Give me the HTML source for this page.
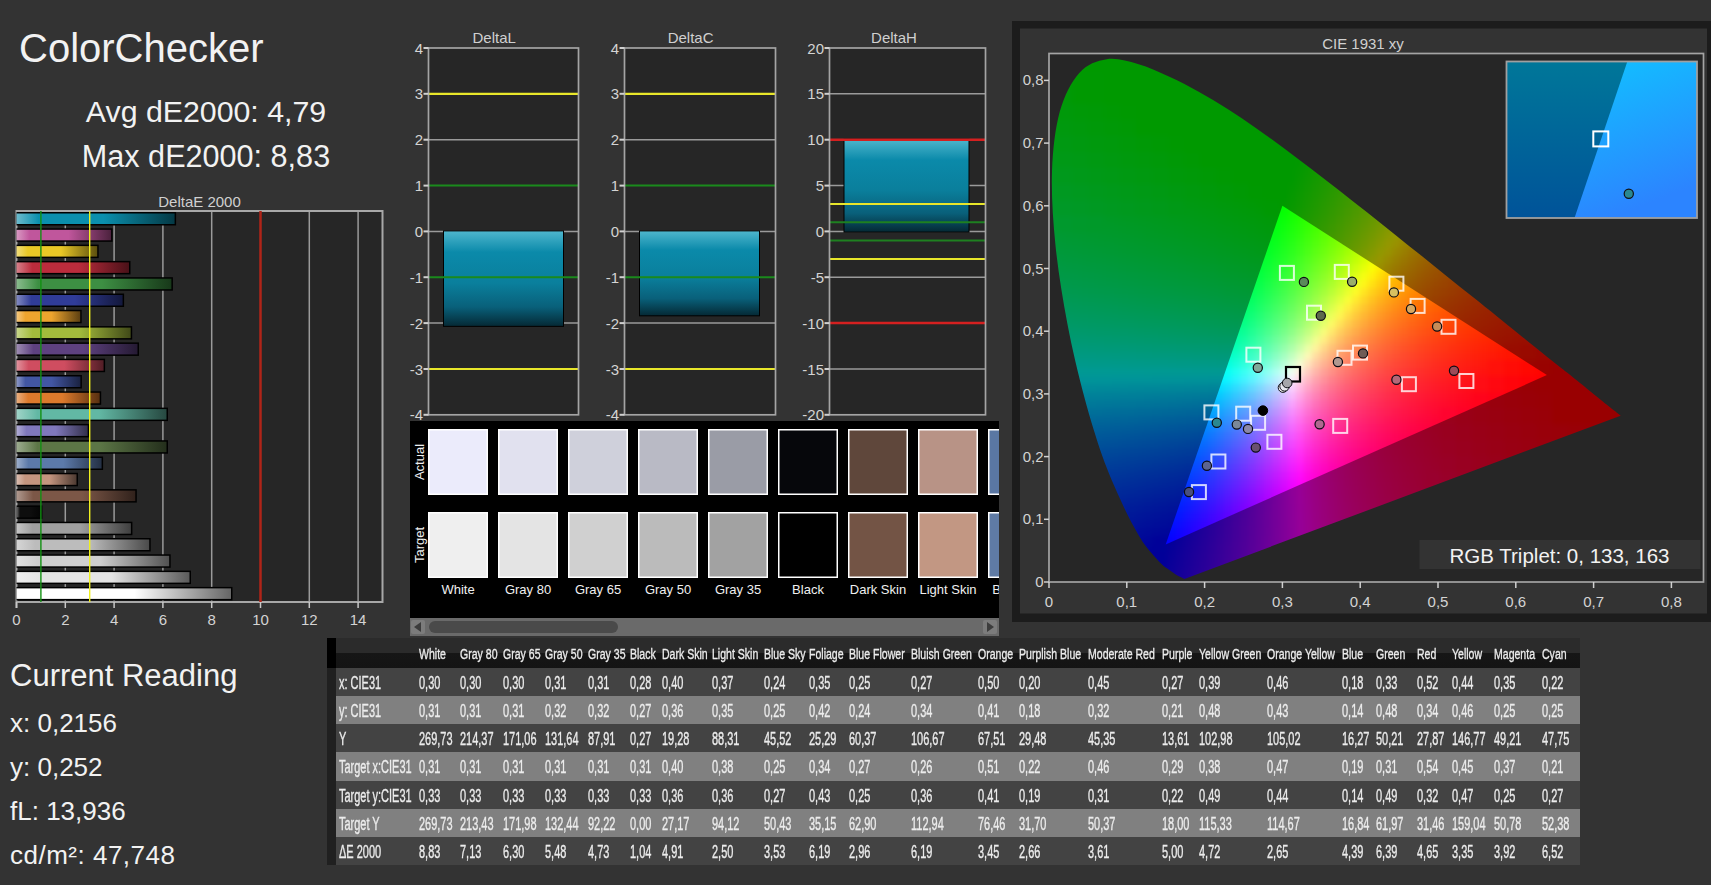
<!DOCTYPE html>
<html><head><meta charset="utf-8"><style>
html,body{margin:0;padding:0;}
body{width:1711px;height:885px;background:#333;overflow:hidden;position:relative;font-family:"Liberation Sans",sans-serif;}
svg text{font-family:"Liberation Sans",sans-serif;}
.th,.td{position:absolute;white-space:nowrap;color:#ececec;transform-origin:0 0;}
.th{top:643.5px;-webkit-text-stroke:0.35px #ececec;font-size:15.5px;line-height:20px;transform:scaleX(.68);}
.td{-webkit-text-stroke:0.35px #ececec;font-size:18px;line-height:22px;transform:scaleX(.61);}
</style></head><body>
<svg width="1711" height="885" style="position:absolute;left:0;top:0">
<defs><linearGradient id="bg0" x1="0" x2="1" y1="0" y2="0"><stop offset="0" stop-color="#6cbbcd"/><stop offset="0.14" stop-color="#0b8fad"/><stop offset="0.55" stop-color="#0b8fad"/><stop offset="1" stop-color="#043945"/></linearGradient><linearGradient id="bg1" x1="0" x2="1" y1="0" y2="0"><stop offset="0" stop-color="#d999c3"/><stop offset="0.14" stop-color="#c0569c"/><stop offset="0.55" stop-color="#c0569c"/><stop offset="1" stop-color="#4c223e"/></linearGradient><linearGradient id="bg2" x1="0" x2="1" y1="0" y2="0"><stop offset="0" stop-color="#f2de7c"/><stop offset="0.14" stop-color="#eac826"/><stop offset="0.55" stop-color="#eac826"/><stop offset="1" stop-color="#5d500f"/></linearGradient><linearGradient id="bg3" x1="0" x2="1" y1="0" y2="0"><stop offset="0" stop-color="#d6808a"/><stop offset="0.14" stop-color="#bb2c3c"/><stop offset="0.55" stop-color="#bb2c3c"/><stop offset="1" stop-color="#4a1118"/></linearGradient><linearGradient id="bg4" x1="0" x2="1" y1="0" y2="0"><stop offset="0" stop-color="#8abb8e"/><stop offset="0.14" stop-color="#3d8f43"/><stop offset="0.55" stop-color="#3d8f43"/><stop offset="1" stop-color="#18391a"/></linearGradient><linearGradient id="bg5" x1="0" x2="1" y1="0" y2="0"><stop offset="0" stop-color="#828ac1"/><stop offset="0.14" stop-color="#303c98"/><stop offset="0.55" stop-color="#303c98"/><stop offset="1" stop-color="#13183c"/></linearGradient><linearGradient id="bg6" x1="0" x2="1" y1="0" y2="0"><stop offset="0" stop-color="#f4c881"/><stop offset="0.14" stop-color="#eda42e"/><stop offset="0.55" stop-color="#eda42e"/><stop offset="1" stop-color="#5e4112"/></linearGradient><linearGradient id="bg7" x1="0" x2="1" y1="0" y2="0"><stop offset="0" stop-color="#c7d68a"/><stop offset="0.14" stop-color="#a3bb3c"/><stop offset="0.55" stop-color="#a3bb3c"/><stop offset="1" stop-color="#414a18"/></linearGradient><linearGradient id="bg8" x1="0" x2="1" y1="0" y2="0"><stop offset="0" stop-color="#9e8db2"/><stop offset="0.14" stop-color="#5e4180"/><stop offset="0.55" stop-color="#5e4180"/><stop offset="1" stop-color="#251a33"/></linearGradient><linearGradient id="bg9" x1="0" x2="1" y1="0" y2="0"><stop offset="0" stop-color="#e2949f"/><stop offset="0.14" stop-color="#cf4d60"/><stop offset="0.55" stop-color="#cf4d60"/><stop offset="1" stop-color="#521e26"/></linearGradient><linearGradient id="bg10" x1="0" x2="1" y1="0" y2="0"><stop offset="0" stop-color="#8d99c7"/><stop offset="0.14" stop-color="#4256a3"/><stop offset="0.55" stop-color="#4256a3"/><stop offset="1" stop-color="#1a2241"/></linearGradient><linearGradient id="bg11" x1="0" x2="1" y1="0" y2="0"><stop offset="0" stop-color="#eaaf80"/><stop offset="0.14" stop-color="#dd7a2c"/><stop offset="0.55" stop-color="#dd7a2c"/><stop offset="1" stop-color="#583011"/></linearGradient><linearGradient id="bg12" x1="0" x2="1" y1="0" y2="0"><stop offset="0" stop-color="#a0d4c8"/><stop offset="0.14" stop-color="#62b8a4"/><stop offset="0.55" stop-color="#62b8a4"/><stop offset="1" stop-color="#274941"/></linearGradient><linearGradient id="bg13" x1="0" x2="1" y1="0" y2="0"><stop offset="0" stop-color="#b2aed6"/><stop offset="0.14" stop-color="#8078bc"/><stop offset="0.55" stop-color="#8078bc"/><stop offset="1" stop-color="#33304b"/></linearGradient><linearGradient id="bg14" x1="0" x2="1" y1="0" y2="0"><stop offset="0" stop-color="#9dac90"/><stop offset="0.14" stop-color="#5c7646"/><stop offset="0.55" stop-color="#5c7646"/><stop offset="1" stop-color="#242f1c"/></linearGradient><linearGradient id="bg15" x1="0" x2="1" y1="0" y2="0"><stop offset="0" stop-color="#9dafcc"/><stop offset="0.14" stop-color="#5c7aaa"/><stop offset="0.55" stop-color="#5c7aaa"/><stop offset="1" stop-color="#243044"/></linearGradient><linearGradient id="bg16" x1="0" x2="1" y1="0" y2="0"><stop offset="0" stop-color="#dbbfb2"/><stop offset="0.14" stop-color="#c4957f"/><stop offset="0.55" stop-color="#c4957f"/><stop offset="1" stop-color="#4e3b32"/></linearGradient><linearGradient id="bg17" x1="0" x2="1" y1="0" y2="0"><stop offset="0" stop-color="#b09a90"/><stop offset="0.14" stop-color="#7c5747"/><stop offset="0.55" stop-color="#7c5747"/><stop offset="1" stop-color="#31221c"/></linearGradient><linearGradient id="bg18" x1="0" x2="1" y1="0" y2="0"><stop offset="0" stop-color="#6e6e6e"/><stop offset="0.14" stop-color="#0e0e0e"/><stop offset="0.55" stop-color="#0e0e0e"/><stop offset="1" stop-color="#050505"/></linearGradient><linearGradient id="bg19" x1="0" x2="1" y1="0" y2="0"><stop offset="0" stop-color="#c6c6c6"/><stop offset="0.14" stop-color="#a0a0a0"/><stop offset="0.55" stop-color="#a0a0a0"/><stop offset="1" stop-color="#404040"/></linearGradient><linearGradient id="bg20" x1="0" x2="1" y1="0" y2="0"><stop offset="0" stop-color="#d6d6d6"/><stop offset="0.14" stop-color="#bcbcbc"/><stop offset="0.55" stop-color="#bcbcbc"/><stop offset="1" stop-color="#4b4b4b"/></linearGradient><linearGradient id="bg21" x1="0" x2="1" y1="0" y2="0"><stop offset="0" stop-color="#e2e2e2"/><stop offset="0.14" stop-color="#cfcfcf"/><stop offset="0.55" stop-color="#cfcfcf"/><stop offset="1" stop-color="#525252"/></linearGradient><linearGradient id="bg22" x1="0" x2="1" y1="0" y2="0"><stop offset="0" stop-color="#eeeeee"/><stop offset="0.14" stop-color="#e4e4e4"/><stop offset="0.55" stop-color="#e4e4e4"/><stop offset="1" stop-color="#5b5b5b"/></linearGradient><linearGradient id="bg23" x1="0" x2="1" y1="0" y2="0"><stop offset="0" stop-color="#ffffff"/><stop offset="0.14" stop-color="#ffffff"/><stop offset="0.55" stop-color="#ffffff"/><stop offset="1" stop-color="#666666"/></linearGradient><linearGradient id="cyanbar" x1="0" x2="0" y1="0" y2="1"><stop offset="0" stop-color="#4db5cc"/><stop offset="0.22" stop-color="#0b8aaa"/><stop offset="0.55" stop-color="#0a7f9c"/><stop offset="0.8" stop-color="#09607a"/><stop offset="1" stop-color="#052a36"/></linearGradient><clipPath id="hs"><path d="M1184.4 578.9C1183.2 578.2 1179.2 576.5 1176.9 575.2C1174.6 573.8 1173.5 572.9 1170.8 570.9C1168.2 568.9 1165.2 567.6 1161.0 563.4C1156.8 559.2 1150.0 551.7 1145.5 545.8C1141.1 539.8 1138.5 535.4 1134.3 527.6C1130.0 519.7 1125.3 510.7 1120.0 498.8C1114.7 486.9 1108.4 473.1 1102.4 456.2C1096.5 439.2 1090.2 419.2 1084.3 397.0C1078.5 374.9 1072.1 348.7 1067.3 323.2C1062.5 297.8 1057.9 269.7 1055.4 244.4C1052.8 219.1 1051.3 193.6 1052.0 171.4C1052.8 149.3 1055.3 128.1 1059.8 111.6C1064.4 95.2 1071.4 81.6 1079.3 72.9C1087.1 64.1 1097.0 60.7 1106.8 59.2C1116.6 57.7 1127.4 61.1 1137.8 64.0C1148.3 66.9 1159.2 72.0 1169.4 76.7C1179.6 81.4 1189.4 86.5 1199.1 91.9C1208.8 97.3 1218.2 103.1 1227.6 109.1C1237.1 115.0 1246.5 121.4 1255.8 127.9C1265.1 134.3 1274.4 141.1 1283.6 147.9C1292.9 154.8 1302.1 161.8 1311.4 168.9C1320.7 176.0 1330.0 183.2 1339.3 190.4C1348.5 197.7 1357.8 205.0 1367.0 212.3C1376.2 219.6 1385.4 227.0 1394.5 234.2C1403.6 241.5 1412.6 248.7 1421.5 255.8C1430.4 263.0 1439.2 270.0 1447.7 276.9C1456.3 283.8 1464.7 290.6 1472.9 297.1C1481.0 303.6 1489.0 310.0 1496.5 316.0C1504.0 322.1 1511.3 328.0 1518.1 333.4C1524.8 338.8 1530.9 343.7 1536.8 348.4C1542.7 353.2 1548.3 357.6 1553.3 361.7C1558.3 365.7 1561.4 368.1 1567.0 372.6C1572.6 377.1 1581.5 384.3 1587.0 388.7C1592.4 393.1 1596.2 396.1 1599.7 398.9C1603.3 401.8 1606.0 404.0 1608.4 405.9C1610.7 407.8 1612.4 409.1 1613.8 410.2C1615.3 411.3 1616.0 411.9 1616.9 412.7C1617.9 413.5 1619.0 414.4 1619.6 414.8C1620.2 415.3 1620.4 415.5 1620.6 415.7Z"/></clipPath><clipPath id="tri"><polygon points="1546.9,375.1 1282.4,205.8 1165.7,544.4"/></clipPath><filter id="fb" x="1000" y="0" width="700" height="650" filterUnits="userSpaceOnUse" color-interpolation-filters="sRGB"><feGaussianBlur stdDeviation="2.5"/></filter><filter id="fd" x="1000" y="0" width="700" height="650" filterUnits="userSpaceOnUse" color-interpolation-filters="sRGB"><feGaussianBlur stdDeviation="2.5"/><feComponentTransfer><feFuncR type="linear" slope="0.6"/><feFuncG type="linear" slope="0.6"/><feFuncB type="linear" slope="0.6"/></feComponentTransfer></filter><g id="grid" shape-rendering="crispEdges"><path d="M1040 40h32v32h-32z" fill="#00ff01"/><path d="M1040 88h16v16h-16z" fill="#00ff0e"/><path d="M1056 72h16v16h-16z" fill="#00ff05"/><path d="M1056 88h16v16h-16z" fill="#00ff0b"/><path d="M1072 40h32v32h-32z" fill="#00ff00"/><path d="M1072 72h32v32h-32z" fill="#00ff03"/><path d="M1104 40h64v64h-64z" fill="#00ff00"/><path d="M1168 40h64v64h-64z" fill="#00ff00"/><path d="M1232 40h64v64h-64z" fill="#00ff00"/><path d="M1040 104h16v16h-16z" fill="#00ff14"/><path d="M1040 120h16v16h-16z" fill="#00ff1b"/><path d="M1056 104h16v16h-16z" fill="#00ff11"/><path d="M1056 120h16v16h-16z" fill="#00ff18"/><path d="M1040 136h16v16h-16z" fill="#00ff22"/><path d="M1040 152h16v16h-16z" fill="#00ff2a"/><path d="M1056 136h16v16h-16z" fill="#00ff1f"/><path d="M1056 152h16v16h-16z" fill="#00ff26"/><path d="M1072 104h16v16h-16z" fill="#00ff0d"/><path d="M1072 120h16v16h-16z" fill="#00ff14"/><path d="M1088 104h16v16h-16z" fill="#00ff0a"/><path d="M1088 120h16v16h-16z" fill="#00ff10"/><path d="M1072 136h16v16h-16z" fill="#00ff1b"/><path d="M1072 152h16v16h-16z" fill="#00ff23"/><path d="M1088 136h16v16h-16z" fill="#00ff17"/><path d="M1088 152h16v16h-16z" fill="#00ff1f"/><path d="M1104 104h16v16h-16z" fill="#00ff06"/><path d="M1104 120h16v16h-16z" fill="#00ff0c"/><path d="M1120 104h16v16h-16z" fill="#00ff02"/><path d="M1120 120h16v16h-16z" fill="#00ff09"/><path d="M1104 136h16v16h-16z" fill="#00ff14"/><path d="M1104 152h16v16h-16z" fill="#00ff1b"/><path d="M1120 136h16v16h-16z" fill="#00ff10"/><path d="M1120 152h16v16h-16z" fill="#00ff17"/><path d="M1136 104h32v32h-32z" fill="#00ff01"/><path d="M1136 136h16v16h-16z" fill="#00ff0b"/><path d="M1136 152h16v16h-16z" fill="#00ff13"/><path d="M1152 136h16v16h-16z" fill="#00ff07"/><path d="M1152 152h16v16h-16z" fill="#00ff0f"/><path d="M1168 104h32v32h-32z" fill="#00ff00"/><path d="M1168 136h16v16h-16z" fill="#00ff03"/><path d="M1168 152h16v16h-16z" fill="#00ff0a"/><path d="M1184 136h16v16h-16z" fill="#00ff00"/><path d="M1184 152h16v16h-16z" fill="#00ff06"/><path d="M1200 104h32v32h-32z" fill="#00ff00"/><path d="M1200 136h32v32h-32z" fill="#00ff00"/><path d="M1232 104h64v64h-64z" fill="#00ff00"/><path d="M1296 136h16v16h-16z" fill="#03ff00"/><path d="M1296 152h8v8h-8z" fill="#02ff00"/><path d="M1296 160h8v8h-8z" fill="#04ff00"/><path d="M1304 152h8v8h-8z" fill="#0bff00"/><path d="M1304 160h8v8h-8z" fill="#0fff00"/><path d="M1312 152h8v8h-8z" fill="#15ff00"/><path d="M1312 160h8v8h-8z" fill="#1aff00"/><path d="M1320 160h8v8h-8z" fill="#25ff00"/><path d="M1040 168h16v16h-16z" fill="#00ff32"/><path d="M1040 184h16v16h-16z" fill="#00ff3b"/><path d="M1056 168h16v16h-16z" fill="#00ff2f"/><path d="M1056 184h16v16h-16z" fill="#00ff38"/><path d="M1040 200h16v16h-16z" fill="#00ff45"/><path d="M1040 216h16v16h-16z" fill="#00ff4f"/><path d="M1056 200h16v16h-16z" fill="#00ff41"/><path d="M1056 216h16v16h-16z" fill="#00ff4c"/><path d="M1072 168h16v16h-16z" fill="#00ff2b"/><path d="M1072 184h16v16h-16z" fill="#00ff34"/><path d="M1088 168h16v16h-16z" fill="#00ff27"/><path d="M1088 184h16v16h-16z" fill="#00ff30"/><path d="M1072 200h16v16h-16z" fill="#00ff3e"/><path d="M1072 216h16v16h-16z" fill="#00ff48"/><path d="M1088 200h16v16h-16z" fill="#00ff3a"/><path d="M1088 216h16v16h-16z" fill="#00ff45"/><path d="M1104 168h16v16h-16z" fill="#00ff23"/><path d="M1104 184h16v16h-16z" fill="#00ff2c"/><path d="M1120 168h16v16h-16z" fill="#00ff1f"/><path d="M1120 184h16v16h-16z" fill="#00ff28"/><path d="M1104 200h16v16h-16z" fill="#00ff36"/><path d="M1104 216h8v8h-8z" fill="#00ff3f"/><path d="M1104 224h8v8h-8z" fill="#00ff45"/><path d="M1112 216h8v8h-8z" fill="#00ff3d"/><path d="M1112 224h8v8h-8z" fill="#00ff43"/><path d="M1120 200h16v16h-16z" fill="#00ff32"/><path d="M1120 216h8v8h-8z" fill="#00ff3b"/><path d="M1120 224h8v8h-8z" fill="#00ff41"/><path d="M1128 216h8v8h-8z" fill="#00ff39"/><path d="M1128 224h8v8h-8z" fill="#00ff3f"/><path d="M1136 168h16v16h-16z" fill="#00ff1b"/><path d="M1136 184h16v16h-16z" fill="#00ff24"/><path d="M1152 168h16v16h-16z" fill="#00ff17"/><path d="M1152 184h16v16h-16z" fill="#00ff20"/><path d="M1136 200h16v16h-16z" fill="#00ff2e"/><path d="M1136 216h8v8h-8z" fill="#00ff37"/><path d="M1136 224h8v8h-8z" fill="#00ff3d"/><path d="M1144 216h8v8h-8z" fill="#00ff35"/><path d="M1144 224h8v8h-8z" fill="#00ff3b"/><path d="M1152 200h16v16h-16z" fill="#00ff2a"/><path d="M1152 216h8v8h-8z" fill="#00ff33"/><path d="M1152 224h8v8h-8z" fill="#00ff38"/><path d="M1160 216h8v8h-8z" fill="#00ff31"/><path d="M1160 224h8v8h-8z" fill="#00ff36"/><path d="M1168 168h16v16h-16z" fill="#00ff12"/><path d="M1168 184h16v16h-16z" fill="#00ff1b"/><path d="M1184 168h16v16h-16z" fill="#00ff0e"/><path d="M1184 184h16v16h-16z" fill="#00ff17"/><path d="M1168 200h16v16h-16z" fill="#00ff25"/><path d="M1168 216h8v8h-8z" fill="#00ff2e"/><path d="M1168 224h8v8h-8z" fill="#00ff34"/><path d="M1176 216h8v8h-8z" fill="#00ff2c"/><path d="M1176 224h8v8h-8z" fill="#00ff32"/><path d="M1184 200h8v8h-8z" fill="#00ff1f"/><path d="M1184 208h8v8h-8z" fill="#00ff24"/><path d="M1192 200h8v8h-8z" fill="#00ff1d"/><path d="M1192 208h8v8h-8z" fill="#00ff22"/><path d="M1184 216h8v8h-8z" fill="#00ff2a"/><path d="M1184 224h8v8h-8z" fill="#00ff2f"/><path d="M1192 216h8v8h-8z" fill="#00ff27"/><path d="M1192 224h8v8h-8z" fill="#00ff2d"/><path d="M1200 168h16v16h-16z" fill="#00ff09"/><path d="M1200 184h16v16h-16z" fill="#00ff12"/><path d="M1216 168h16v16h-16z" fill="#00ff04"/><path d="M1216 184h16v16h-16z" fill="#00ff0d"/><path d="M1200 200h8v8h-8z" fill="#00ff1a"/><path d="M1200 208h8v8h-8z" fill="#00ff1f"/><path d="M1208 200h8v8h-8z" fill="#00ff18"/><path d="M1208 208h8v8h-8z" fill="#00ff1d"/><path d="M1200 216h8v8h-8z" fill="#00ff25"/><path d="M1200 224h8v8h-8z" fill="#00ff2a"/><path d="M1208 216h8v8h-8z" fill="#00ff22"/><path d="M1208 224h8v8h-8z" fill="#00ff28"/><path d="M1216 200h8v8h-8z" fill="#00ff15"/><path d="M1216 208h8v8h-8z" fill="#00ff1a"/><path d="M1224 200h8v8h-8z" fill="#00ff13"/><path d="M1224 208h8v8h-8z" fill="#00ff18"/><path d="M1216 216h8v8h-8z" fill="#00ff20"/><path d="M1216 224h8v8h-8z" fill="#00ff25"/><path d="M1224 216h8v8h-8z" fill="#00ff1d"/><path d="M1224 224h8v8h-8z" fill="#00ff23"/><path d="M1232 168h16v16h-16z" fill="#00ff01"/><path d="M1232 184h16v16h-16z" fill="#00ff07"/><path d="M1248 168h16v16h-16z" fill="#00ff00"/><path d="M1248 184h16v16h-16z" fill="#00ff02"/><path d="M1232 200h8v8h-8z" fill="#00ff10"/><path d="M1232 208h8v8h-8z" fill="#00ff15"/><path d="M1240 200h8v8h-8z" fill="#00ff0d"/><path d="M1240 208h8v8h-8z" fill="#00ff12"/><path d="M1232 216h8v8h-8z" fill="#00ff1a"/><path d="M1232 224h8v8h-8z" fill="#00ff20"/><path d="M1240 216h8v8h-8z" fill="#00ff17"/><path d="M1240 224h8v8h-8z" fill="#00ff1d"/><path d="M1248 200h8v8h-8z" fill="#00ff0a"/><path d="M1248 208h8v8h-8z" fill="#00ff0f"/><path d="M1256 200h8v8h-8z" fill="#00ff07"/><path d="M1256 208h8v8h-8z" fill="#00ff0c"/><path d="M1248 216h8v8h-8z" fill="#00ff15"/><path d="M1248 224h8v8h-8z" fill="#00ff1a"/><path d="M1256 216h8v8h-8z" fill="#00ff12"/><path d="M1256 224h8v8h-8z" fill="#00ff17"/><path d="M1264 168h16v16h-16z" fill="#00ff00"/><path d="M1264 184h16v16h-16z" fill="#00ff00"/><path d="M1280 168h16v16h-16z" fill="#01ff00"/><path d="M1280 184h8v8h-8z" fill="#00ff00"/><path d="M1280 192h8v8h-8z" fill="#00ff00"/><path d="M1288 184h8v8h-8z" fill="#05ff00"/><path d="M1288 192h8v8h-8z" fill="#09ff00"/><path d="M1264 200h16v16h-16z" fill="#00ff05"/><path d="M1264 216h8v8h-8z" fill="#00ff0f"/><path d="M1264 224h8v8h-8z" fill="#00ff14"/><path d="M1272 216h8v8h-8z" fill="#01ff0c"/><path d="M1272 224h8v8h-8z" fill="#03ff11"/><path d="M1280 200h8v8h-8z" fill="#02ff00"/><path d="M1280 208h8v8h-8z" fill="#06ff03"/><path d="M1288 200h8v8h-8z" fill="#0dff00"/><path d="M1288 208h8v8h-8z" fill="#12ff01"/><path d="M1280 216h8v8h-8z" fill="#0aff09"/><path d="M1280 224h8v8h-8z" fill="#0fff0e"/><path d="M1288 216h8v8h-8z" fill="#17ff05"/><path d="M1288 224h8v8h-8z" fill="#1cff0b"/><path d="M1296 168h8v8h-8z" fill="#08ff00"/><path d="M1296 176h8v8h-8z" fill="#0cff00"/><path d="M1304 168h8v8h-8z" fill="#13ff00"/><path d="M1304 176h8v8h-8z" fill="#17ff00"/><path d="M1296 184h8v8h-8z" fill="#10ff00"/><path d="M1296 192h8v8h-8z" fill="#15ff00"/><path d="M1304 184h8v8h-8z" fill="#1cff00"/><path d="M1304 192h8v8h-8z" fill="#21ff00"/><path d="M1312 168h8v8h-8z" fill="#1eff00"/><path d="M1312 176h8v8h-8z" fill="#23ff00"/><path d="M1320 168h8v8h-8z" fill="#2aff00"/><path d="M1320 176h8v8h-8z" fill="#2fff00"/><path d="M1312 184h8v8h-8z" fill="#28ff00"/><path d="M1312 192h8v8h-8z" fill="#2dff00"/><path d="M1320 184h8v8h-8z" fill="#34ff00"/><path d="M1320 192h8v8h-8z" fill="#3aff00"/><path d="M1296 200h8v8h-8z" fill="#19ff00"/><path d="M1296 208h8v8h-8z" fill="#1eff00"/><path d="M1304 200h8v8h-8z" fill="#26ff00"/><path d="M1304 208h8v8h-8z" fill="#2bff00"/><path d="M1296 216h8v8h-8z" fill="#24ff02"/><path d="M1296 224h8v8h-8z" fill="#29ff07"/><path d="M1304 216h8v8h-8z" fill="#31ff00"/><path d="M1304 224h8v8h-8z" fill="#37ff04"/><path d="M1312 200h8v8h-8z" fill="#33ff00"/><path d="M1312 208h8v8h-8z" fill="#38ff00"/><path d="M1320 200h8v8h-8z" fill="#40ff00"/><path d="M1320 208h8v8h-8z" fill="#46ff00"/><path d="M1312 216h8v8h-8z" fill="#3fff00"/><path d="M1312 224h8v8h-8z" fill="#45ff01"/><path d="M1320 216h8v8h-8z" fill="#4dff00"/><path d="M1320 224h8v8h-8z" fill="#54ff00"/><path d="M1328 168h8v8h-8z" fill="#35ff00"/><path d="M1328 176h8v8h-8z" fill="#3bff00"/><path d="M1336 176h8v8h-8z" fill="#47ff00"/><path d="M1328 184h8v8h-8z" fill="#40ff00"/><path d="M1328 192h8v8h-8z" fill="#47ff00"/><path d="M1336 184h8v8h-8z" fill="#4dff00"/><path d="M1336 192h8v8h-8z" fill="#54ff00"/><path d="M1344 176h8v8h-8z" fill="#54ff00"/><path d="M1344 184h8v8h-8z" fill="#5aff00"/><path d="M1344 192h8v8h-8z" fill="#61ff00"/><path d="M1352 184h8v8h-8z" fill="#68ff00"/><path d="M1352 192h8v8h-8z" fill="#70ff00"/><path d="M1328 200h8v8h-8z" fill="#4dff00"/><path d="M1328 208h8v8h-8z" fill="#54ff00"/><path d="M1336 200h8v8h-8z" fill="#5bff00"/><path d="M1336 208h8v8h-8z" fill="#62ff00"/><path d="M1328 216h8v8h-8z" fill="#5bff00"/><path d="M1328 224h8v8h-8z" fill="#63ff00"/><path d="M1336 216h8v8h-8z" fill="#6aff00"/><path d="M1336 224h8v8h-8z" fill="#72ff00"/><path d="M1344 200h8v8h-8z" fill="#69ff00"/><path d="M1344 208h8v8h-8z" fill="#71ff00"/><path d="M1352 200h8v8h-8z" fill="#78ff00"/><path d="M1352 208h8v8h-8z" fill="#80ff00"/><path d="M1344 216h8v8h-8z" fill="#79ff00"/><path d="M1344 224h8v8h-8z" fill="#82ff00"/><path d="M1352 216h8v8h-8z" fill="#89ff00"/><path d="M1352 224h8v8h-8z" fill="#93ff00"/><path d="M1360 192h8v8h-8z" fill="#7eff00"/><path d="M1360 200h8v8h-8z" fill="#86ff00"/><path d="M1360 208h8v8h-8z" fill="#90ff00"/><path d="M1368 200h8v8h-8z" fill="#96ff00"/><path d="M1368 208h8v8h-8z" fill="#a0ff00"/><path d="M1360 216h8v8h-8z" fill="#99ff00"/><path d="M1360 224h8v8h-8z" fill="#a4ff00"/><path d="M1368 216h8v8h-8z" fill="#aaff00"/><path d="M1368 224h8v8h-8z" fill="#b5ff00"/><path d="M1376 208h8v8h-8z" fill="#b0ff00"/><path d="M1376 216h8v8h-8z" fill="#bbff00"/><path d="M1376 224h8v8h-8z" fill="#c7ff00"/><path d="M1384 216h8v8h-8z" fill="#cdff00"/><path d="M1384 224h8v8h-8z" fill="#daff00"/><path d="M1392 216h8v8h-8z" fill="#e0ff00"/><path d="M1392 224h8v8h-8z" fill="#edff00"/><path d="M1400 224h8v8h-8z" fill="#fdfb00"/><path d="M1048 232h8v8h-8z" fill="#00ff57"/><path d="M1048 240h8v8h-8z" fill="#00ff5d"/><path d="M1048 248h8v8h-8z" fill="#00ff63"/><path d="M1048 256h8v8h-8z" fill="#00ff6a"/><path d="M1056 232h8v8h-8z" fill="#00ff55"/><path d="M1056 240h8v8h-8z" fill="#00ff5b"/><path d="M1064 232h8v8h-8z" fill="#00ff53"/><path d="M1064 240h8v8h-8z" fill="#00ff59"/><path d="M1056 248h8v8h-8z" fill="#00ff61"/><path d="M1056 256h8v8h-8z" fill="#00ff68"/><path d="M1064 248h8v8h-8z" fill="#00ff60"/><path d="M1064 256h8v8h-8z" fill="#00ff66"/><path d="M1048 264h8v8h-8z" fill="#00ff70"/><path d="M1048 272h8v8h-8z" fill="#00ff78"/><path d="M1048 280h8v8h-8z" fill="#00ff7f"/><path d="M1048 288h8v8h-8z" fill="#00ff87"/><path d="M1056 264h8v8h-8z" fill="#00ff6f"/><path d="M1056 272h8v8h-8z" fill="#00ff76"/><path d="M1064 264h8v8h-8z" fill="#00ff6d"/><path d="M1064 272h8v8h-8z" fill="#00ff75"/><path d="M1056 280h8v8h-8z" fill="#00ff7e"/><path d="M1056 288h8v8h-8z" fill="#00ff86"/><path d="M1064 280h8v8h-8z" fill="#00ff7c"/><path d="M1064 288h8v8h-8z" fill="#00ff84"/><path d="M1072 232h8v8h-8z" fill="#00ff52"/><path d="M1072 240h8v8h-8z" fill="#00ff58"/><path d="M1080 232h8v8h-8z" fill="#00ff50"/><path d="M1080 240h8v8h-8z" fill="#00ff56"/><path d="M1072 248h8v8h-8z" fill="#00ff5e"/><path d="M1072 256h8v8h-8z" fill="#00ff65"/><path d="M1080 248h8v8h-8z" fill="#00ff5c"/><path d="M1080 256h8v8h-8z" fill="#00ff63"/><path d="M1088 232h8v8h-8z" fill="#00ff4e"/><path d="M1088 240h8v8h-8z" fill="#00ff54"/><path d="M1096 232h8v8h-8z" fill="#00ff4c"/><path d="M1096 240h8v8h-8z" fill="#00ff52"/><path d="M1088 248h8v8h-8z" fill="#00ff5b"/><path d="M1088 256h8v8h-8z" fill="#00ff61"/><path d="M1096 248h8v8h-8z" fill="#00ff59"/><path d="M1096 256h8v8h-8z" fill="#00ff60"/><path d="M1072 264h8v8h-8z" fill="#00ff6c"/><path d="M1072 272h8v8h-8z" fill="#00ff73"/><path d="M1080 264h8v8h-8z" fill="#00ff6a"/><path d="M1080 272h8v8h-8z" fill="#00ff71"/><path d="M1072 280h8v8h-8z" fill="#00ff7b"/><path d="M1072 288h8v8h-8z" fill="#00ff83"/><path d="M1080 280h8v8h-8z" fill="#00ff79"/><path d="M1080 288h8v8h-8z" fill="#00ff81"/><path d="M1088 264h8v8h-8z" fill="#00ff68"/><path d="M1088 272h8v8h-8z" fill="#00ff70"/><path d="M1096 264h8v8h-8z" fill="#00ff67"/><path d="M1096 272h8v8h-8z" fill="#00ff6e"/><path d="M1088 280h8v8h-8z" fill="#00ff78"/><path d="M1088 288h8v8h-8z" fill="#00ff80"/><path d="M1096 280h8v8h-8z" fill="#00ff76"/><path d="M1096 288h8v8h-8z" fill="#00ff7e"/><path d="M1104 232h8v8h-8z" fill="#00ff4a"/><path d="M1104 240h8v8h-8z" fill="#00ff51"/><path d="M1112 232h8v8h-8z" fill="#00ff49"/><path d="M1112 240h8v8h-8z" fill="#00ff4f"/><path d="M1104 248h8v8h-8z" fill="#00ff57"/><path d="M1104 256h8v8h-8z" fill="#00ff5e"/><path d="M1112 248h8v8h-8z" fill="#00ff55"/><path d="M1112 256h8v8h-8z" fill="#00ff5c"/><path d="M1120 232h8v8h-8z" fill="#00ff47"/><path d="M1120 240h8v8h-8z" fill="#00ff4d"/><path d="M1128 232h8v8h-8z" fill="#00ff45"/><path d="M1128 240h8v8h-8z" fill="#00ff4b"/><path d="M1120 248h8v8h-8z" fill="#00ff53"/><path d="M1120 256h8v8h-8z" fill="#00ff5a"/><path d="M1128 248h8v8h-8z" fill="#00ff51"/><path d="M1128 256h8v8h-8z" fill="#00ff58"/><path d="M1104 264h8v8h-8z" fill="#00ff65"/><path d="M1104 272h8v8h-8z" fill="#00ff6c"/><path d="M1112 264h8v8h-8z" fill="#00ff63"/><path d="M1112 272h8v8h-8z" fill="#00ff6b"/><path d="M1104 280h8v8h-8z" fill="#00ff74"/><path d="M1104 288h8v8h-8z" fill="#00ff7d"/><path d="M1112 280h8v8h-8z" fill="#00ff73"/><path d="M1112 288h8v8h-8z" fill="#00ff7b"/><path d="M1120 264h8v8h-8z" fill="#00ff61"/><path d="M1120 272h8v8h-8z" fill="#00ff69"/><path d="M1128 264h8v8h-8z" fill="#00ff5f"/><path d="M1128 272h8v8h-8z" fill="#00ff67"/><path d="M1120 280h8v8h-8z" fill="#00ff71"/><path d="M1120 288h8v8h-8z" fill="#00ff79"/><path d="M1128 280h8v8h-8z" fill="#00ff6f"/><path d="M1128 288h8v8h-8z" fill="#00ff78"/><path d="M1136 232h8v8h-8z" fill="#00ff43"/><path d="M1136 240h8v8h-8z" fill="#00ff49"/><path d="M1144 232h8v8h-8z" fill="#00ff40"/><path d="M1144 240h8v8h-8z" fill="#00ff47"/><path d="M1136 248h8v8h-8z" fill="#00ff4f"/><path d="M1136 256h8v8h-8z" fill="#00ff56"/><path d="M1144 248h8v8h-8z" fill="#00ff4d"/><path d="M1144 256h8v8h-8z" fill="#00ff54"/><path d="M1152 232h8v8h-8z" fill="#00ff3e"/><path d="M1152 240h8v8h-8z" fill="#00ff45"/><path d="M1160 232h8v8h-8z" fill="#00ff3c"/><path d="M1160 240h8v8h-8z" fill="#00ff42"/><path d="M1152 248h8v8h-8z" fill="#00ff4b"/><path d="M1152 256h8v8h-8z" fill="#00ff52"/><path d="M1160 248h8v8h-8z" fill="#00ff49"/><path d="M1160 256h8v8h-8z" fill="#00ff50"/><path d="M1136 264h8v8h-8z" fill="#00ff5d"/><path d="M1136 272h8v8h-8z" fill="#00ff65"/><path d="M1144 264h8v8h-8z" fill="#00ff5b"/><path d="M1144 272h8v8h-8z" fill="#00ff63"/><path d="M1136 280h8v8h-8z" fill="#00ff6d"/><path d="M1136 288h8v8h-8z" fill="#00ff76"/><path d="M1144 280h8v8h-8z" fill="#00ff6b"/><path d="M1144 288h8v8h-8z" fill="#00ff74"/><path d="M1152 264h8v8h-8z" fill="#00ff59"/><path d="M1152 272h8v8h-8z" fill="#00ff61"/><path d="M1160 264h8v8h-8z" fill="#00ff57"/><path d="M1160 272h8v8h-8z" fill="#00ff5f"/><path d="M1152 280h8v8h-8z" fill="#00ff69"/><path d="M1152 288h8v8h-8z" fill="#00ff72"/><path d="M1160 280h8v8h-8z" fill="#00ff67"/><path d="M1160 288h8v8h-8z" fill="#00ff70"/><path d="M1168 232h8v8h-8z" fill="#00ff3a"/><path d="M1168 240h8v8h-8z" fill="#00ff40"/><path d="M1176 232h8v8h-8z" fill="#00ff38"/><path d="M1176 240h8v8h-8z" fill="#00ff3e"/><path d="M1168 248h8v8h-8z" fill="#00ff47"/><path d="M1168 256h8v8h-8z" fill="#00ff4e"/><path d="M1176 248h8v8h-8z" fill="#00ff44"/><path d="M1176 256h8v8h-8z" fill="#00ff4c"/><path d="M1184 232h8v8h-8z" fill="#00ff35"/><path d="M1184 240h8v8h-8z" fill="#00ff3c"/><path d="M1192 232h8v8h-8z" fill="#00ff33"/><path d="M1192 240h8v8h-8z" fill="#00ff39"/><path d="M1184 248h8v8h-8z" fill="#00ff42"/><path d="M1184 256h8v8h-8z" fill="#00ff49"/><path d="M1192 248h8v8h-8z" fill="#00ff40"/><path d="M1192 256h8v8h-8z" fill="#00ff47"/><path d="M1168 264h8v8h-8z" fill="#00ff55"/><path d="M1168 272h8v8h-8z" fill="#00ff5d"/><path d="M1176 264h8v8h-8z" fill="#00ff53"/><path d="M1176 272h8v8h-8z" fill="#00ff5b"/><path d="M1168 280h8v8h-8z" fill="#00ff65"/><path d="M1168 288h8v8h-8z" fill="#00ff6e"/><path d="M1176 280h8v8h-8z" fill="#00ff63"/><path d="M1176 288h8v8h-8z" fill="#00ff6c"/><path d="M1184 264h8v8h-8z" fill="#00ff51"/><path d="M1184 272h8v8h-8z" fill="#00ff59"/><path d="M1192 264h8v8h-8z" fill="#00ff4e"/><path d="M1192 272h8v8h-8z" fill="#00ff56"/><path d="M1184 280h8v8h-8z" fill="#00ff61"/><path d="M1184 288h8v8h-8z" fill="#00ff6a"/><path d="M1192 280h8v8h-8z" fill="#00ff5f"/><path d="M1192 288h8v8h-8z" fill="#00ff68"/><path d="M1200 232h8v8h-8z" fill="#00ff30"/><path d="M1200 240h8v8h-8z" fill="#00ff37"/><path d="M1208 232h8v8h-8z" fill="#00ff2e"/><path d="M1208 240h8v8h-8z" fill="#00ff34"/><path d="M1200 248h8v8h-8z" fill="#00ff3d"/><path d="M1200 256h8v8h-8z" fill="#00ff44"/><path d="M1208 248h8v8h-8z" fill="#00ff3b"/><path d="M1208 256h8v8h-8z" fill="#00ff42"/><path d="M1216 232h8v8h-8z" fill="#00ff2b"/><path d="M1216 240h8v8h-8z" fill="#00ff32"/><path d="M1224 232h8v8h-8z" fill="#00ff29"/><path d="M1224 240h8v8h-8z" fill="#00ff2f"/><path d="M1216 248h8v8h-8z" fill="#00ff38"/><path d="M1216 256h8v8h-8z" fill="#00ff3f"/><path d="M1224 248h8v8h-8z" fill="#00ff36"/><path d="M1224 256h8v8h-8z" fill="#00ff3d"/><path d="M1200 264h8v8h-8z" fill="#00ff4c"/><path d="M1200 272h8v8h-8z" fill="#00ff54"/><path d="M1208 264h8v8h-8z" fill="#00ff4a"/><path d="M1208 272h8v8h-8z" fill="#00ff52"/><path d="M1200 280h8v8h-8z" fill="#00ff5c"/><path d="M1200 288h8v8h-8z" fill="#00ff66"/><path d="M1208 280h8v8h-8z" fill="#00ff5a"/><path d="M1208 288h8v8h-8z" fill="#00ff63"/><path d="M1216 264h8v8h-8z" fill="#00ff47"/><path d="M1216 272h8v8h-8z" fill="#00ff4f"/><path d="M1224 264h8v8h-8z" fill="#00ff44"/><path d="M1224 272h8v8h-8z" fill="#00ff4c"/><path d="M1216 280h8v8h-8z" fill="#00ff58"/><path d="M1216 288h8v8h-8z" fill="#00ff61"/><path d="M1224 280h8v8h-8z" fill="#00ff55"/><path d="M1224 288h8v8h-8z" fill="#00ff5e"/><path d="M1232 232h8v8h-8z" fill="#00ff26"/><path d="M1232 240h8v8h-8z" fill="#00ff2c"/><path d="M1240 232h8v8h-8z" fill="#00ff23"/><path d="M1240 240h8v8h-8z" fill="#00ff29"/><path d="M1232 248h8v8h-8z" fill="#00ff33"/><path d="M1232 256h8v8h-8z" fill="#00ff3a"/><path d="M1240 248h8v8h-8z" fill="#00ff30"/><path d="M1240 256h8v8h-8z" fill="#00ff37"/><path d="M1248 232h8v8h-8z" fill="#00ff20"/><path d="M1248 240h8v8h-8z" fill="#00ff27"/><path d="M1256 232h8v8h-8z" fill="#00ff1d"/><path d="M1256 240h8v8h-8z" fill="#00ff24"/><path d="M1248 248h8v8h-8z" fill="#00ff2d"/><path d="M1248 256h8v8h-8z" fill="#00ff34"/><path d="M1256 248h8v8h-8z" fill="#00ff2a"/><path d="M1256 256h8v8h-8z" fill="#00ff32"/><path d="M1232 264h8v8h-8z" fill="#00ff42"/><path d="M1232 272h8v8h-8z" fill="#00ff4a"/><path d="M1240 264h8v8h-8z" fill="#00ff3f"/><path d="M1240 272h8v8h-8z" fill="#00ff47"/><path d="M1232 280h8v8h-8z" fill="#00ff53"/><path d="M1232 288h8v8h-8z" fill="#00ff5c"/><path d="M1240 280h8v8h-8z" fill="#00ff50"/><path d="M1240 288h8v8h-8z" fill="#00ff59"/><path d="M1248 264h8v8h-8z" fill="#00ff3c"/><path d="M1248 272h8v8h-8z" fill="#00ff44"/><path d="M1256 264h8v8h-8z" fill="#01ff39"/><path d="M1256 272h8v8h-8z" fill="#04ff41"/><path d="M1248 280h8v8h-8z" fill="#00ff4d"/><path d="M1248 288h8v8h-8z" fill="#01ff57"/><path d="M1256 280h8v8h-8z" fill="#09ff4a"/><path d="M1256 288h8v8h-8z" fill="#0fff54"/><path d="M1264 232h8v8h-8z" fill="#00ff1a"/><path d="M1264 240h8v8h-8z" fill="#01ff21"/><path d="M1272 232h8v8h-8z" fill="#07ff17"/><path d="M1272 240h8v8h-8z" fill="#0bff1e"/><path d="M1264 248h8v8h-8z" fill="#03ff27"/><path d="M1264 256h8v8h-8z" fill="#08ff2f"/><path d="M1272 248h8v8h-8z" fill="#10ff24"/><path d="M1272 256h8v8h-8z" fill="#16ff2b"/><path d="M1280 232h8v8h-8z" fill="#14ff14"/><path d="M1280 240h8v8h-8z" fill="#19ff1a"/><path d="M1288 232h8v8h-8z" fill="#21ff11"/><path d="M1288 240h8v8h-8z" fill="#27ff17"/><path d="M1280 248h8v8h-8z" fill="#1fff21"/><path d="M1280 256h8v8h-8z" fill="#25ff28"/><path d="M1288 248h8v8h-8z" fill="#2dff1e"/><path d="M1288 256h8v8h-8z" fill="#34ff25"/><path d="M1264 264h8v8h-8z" fill="#0dff36"/><path d="M1264 272h8v8h-8z" fill="#12ff3e"/><path d="M1272 264h8v8h-8z" fill="#1cff33"/><path d="M1272 272h8v8h-8z" fill="#22ff3b"/><path d="M1264 280h8v8h-8z" fill="#19ff47"/><path d="M1264 288h8v8h-8z" fill="#1fff51"/><path d="M1272 280h8v8h-8z" fill="#29ff44"/><path d="M1272 288h8v8h-8z" fill="#30ff4e"/><path d="M1280 264h8v8h-8z" fill="#2bff30"/><path d="M1280 272h8v8h-8z" fill="#32ff38"/><path d="M1288 264h8v8h-8z" fill="#3bff2d"/><path d="M1288 272h8v8h-8z" fill="#43ff35"/><path d="M1280 280h8v8h-8z" fill="#3aff41"/><path d="M1280 288h8v8h-8z" fill="#42ff4b"/><path d="M1288 280h8v8h-8z" fill="#4bff3e"/><path d="M1288 288h8v8h-8z" fill="#54ff48"/><path d="M1296 232h8v8h-8z" fill="#2fff0d"/><path d="M1296 240h8v8h-8z" fill="#36ff14"/><path d="M1304 232h8v8h-8z" fill="#3eff0a"/><path d="M1304 240h8v8h-8z" fill="#45ff10"/><path d="M1296 248h8v8h-8z" fill="#3cff1a"/><path d="M1296 256h8v8h-8z" fill="#44ff22"/><path d="M1304 248h8v8h-8z" fill="#4cff17"/><path d="M1304 256h8v8h-8z" fill="#54ff1e"/><path d="M1312 232h8v8h-8z" fill="#4cff06"/><path d="M1312 240h8v8h-8z" fill="#54ff0d"/><path d="M1320 232h8v8h-8z" fill="#5cff03"/><path d="M1320 240h8v8h-8z" fill="#64ff09"/><path d="M1312 248h8v8h-8z" fill="#5cff13"/><path d="M1312 256h8v8h-8z" fill="#65ff1a"/><path d="M1320 248h8v8h-8z" fill="#6dff0f"/><path d="M1320 256h8v8h-8z" fill="#76ff17"/><path d="M1296 264h8v8h-8z" fill="#4bff29"/><path d="M1296 272h8v8h-8z" fill="#54ff32"/><path d="M1304 264h8v8h-8z" fill="#5cff26"/><path d="M1304 272h8v8h-8z" fill="#66ff2e"/><path d="M1296 280h8v8h-8z" fill="#5dff3a"/><path d="M1296 288h8v8h-8z" fill="#67ff44"/><path d="M1304 280h8v8h-8z" fill="#70ff37"/><path d="M1304 288h8v8h-8z" fill="#7bff41"/><path d="M1312 264h8v8h-8z" fill="#6eff22"/><path d="M1312 272h8v8h-8z" fill="#78ff2a"/><path d="M1320 264h8v8h-8z" fill="#80ff1e"/><path d="M1320 272h8v8h-8z" fill="#8bff27"/><path d="M1312 280h8v8h-8z" fill="#83ff33"/><path d="M1312 288h8v8h-8z" fill="#8fff3d"/><path d="M1320 280h8v8h-8z" fill="#97ff30"/><path d="M1320 288h8v8h-8z" fill="#a4ff39"/><path d="M1328 232h8v8h-8z" fill="#6bff00"/><path d="M1328 240h8v8h-8z" fill="#74ff05"/><path d="M1336 232h8v8h-8z" fill="#7bff00"/><path d="M1336 240h8v8h-8z" fill="#85ff02"/><path d="M1328 248h8v8h-8z" fill="#7eff0c"/><path d="M1328 256h8v8h-8z" fill="#88ff13"/><path d="M1336 248h8v8h-8z" fill="#8fff08"/><path d="M1336 256h8v8h-8z" fill="#9aff0f"/><path d="M1344 232h8v8h-8z" fill="#8cff00"/><path d="M1344 240h8v8h-8z" fill="#96ff00"/><path d="M1352 232h8v8h-8z" fill="#9dff00"/><path d="M1352 240h8v8h-8z" fill="#a8ff00"/><path d="M1344 248h8v8h-8z" fill="#a2ff04"/><path d="M1344 256h8v8h-8z" fill="#aeff0b"/><path d="M1352 248h8v8h-8z" fill="#b4ff01"/><path d="M1352 256h8v8h-8z" fill="#c1ff06"/><path d="M1328 264h8v8h-8z" fill="#93ff1a"/><path d="M1328 272h8v8h-8z" fill="#9fff23"/><path d="M1336 264h8v8h-8z" fill="#a6ff16"/><path d="M1336 272h8v8h-8z" fill="#b3ff1f"/><path d="M1328 280h8v8h-8z" fill="#acff2c"/><path d="M1328 288h8v8h-8z" fill="#baff36"/><path d="M1336 280h8v8h-8z" fill="#c2ff28"/><path d="M1336 288h8v8h-8z" fill="#d1ff31"/><path d="M1344 264h8v8h-8z" fill="#bbff12"/><path d="M1344 272h8v8h-8z" fill="#c9ff1a"/><path d="M1352 264h8v8h-8z" fill="#d0ff0e"/><path d="M1352 272h8v8h-8z" fill="#dfff16"/><path d="M1344 280h8v8h-8z" fill="#d8ff23"/><path d="M1344 288h8v8h-8z" fill="#e9ff2d"/><path d="M1352 280h8v8h-8z" fill="#f0ff1f"/><path d="M1352 288h8v8h-8z" fill="#fdfa28"/><path d="M1360 232h8v8h-8z" fill="#afff00"/><path d="M1360 240h8v8h-8z" fill="#bbff00"/><path d="M1368 232h8v8h-8z" fill="#c1ff00"/><path d="M1368 240h8v8h-8z" fill="#ceff00"/><path d="M1360 248h8v8h-8z" fill="#c8ff00"/><path d="M1360 256h8v8h-8z" fill="#d6ff02"/><path d="M1368 248h8v8h-8z" fill="#dcff00"/><path d="M1368 256h8v8h-8z" fill="#ebff00"/><path d="M1376 232h8v8h-8z" fill="#d4ff00"/><path d="M1376 240h8v8h-8z" fill="#e2ff00"/><path d="M1384 232h8v8h-8z" fill="#e8ff00"/><path d="M1384 240h8v8h-8z" fill="#f6fe00"/><path d="M1376 248h8v8h-8z" fill="#f1ff00"/><path d="M1376 256h8v8h-8z" fill="#fdfa00"/><path d="M1384 248h8v8h-8z" fill="#fef700"/><path d="M1384 256h8v8h-8z" fill="#ffe800"/><path d="M1360 264h8v8h-8z" fill="#e5ff09"/><path d="M1360 272h8v8h-8z" fill="#f5fe11"/><path d="M1368 264h8v8h-8z" fill="#fafd05"/><path d="M1368 272h8v8h-8z" fill="#fff10c"/><path d="M1360 280h8v8h-8z" fill="#fef619"/><path d="M1360 288h8v8h-8z" fill="#ffe521"/><path d="M1368 280h8v8h-8z" fill="#ffe113"/><path d="M1368 288h8v8h-8z" fill="#ffd11a"/><path d="M1376 264h8v8h-8z" fill="#ffec01"/><path d="M1376 272h8v8h-8z" fill="#ffdd07"/><path d="M1384 264h8v8h-8z" fill="#ffd900"/><path d="M1384 272h8v8h-8z" fill="#ffcb02"/><path d="M1376 280h8v8h-8z" fill="#ffce0e"/><path d="M1376 288h8v8h-8z" fill="#ffc014"/><path d="M1384 280h8v8h-8z" fill="#ffbd09"/><path d="M1384 288h8v8h-8z" fill="#ffb00f"/><path d="M1392 232h8v8h-8z" fill="#fafd00"/><path d="M1392 240h8v8h-8z" fill="#fff300"/><path d="M1400 232h8v8h-8z" fill="#ffee00"/><path d="M1400 240h8v8h-8z" fill="#ffe000"/><path d="M1392 248h8v8h-8z" fill="#ffe400"/><path d="M1392 256h8v8h-8z" fill="#ffd600"/><path d="M1400 248h8v8h-8z" fill="#ffd300"/><path d="M1400 256h8v8h-8z" fill="#ffc600"/><path d="M1408 232h8v8h-8z" fill="#ffdd00"/><path d="M1408 240h8v8h-8z" fill="#ffd000"/><path d="M1416 240h8v8h-8z" fill="#ffc100"/><path d="M1408 248h8v8h-8z" fill="#ffc300"/><path d="M1408 256h8v8h-8z" fill="#ffb700"/><path d="M1416 248h8v8h-8z" fill="#ffb600"/><path d="M1416 256h8v8h-8z" fill="#ffaa00"/><path d="M1392 264h8v8h-8z" fill="#ffc800"/><path d="M1392 272h8v8h-8z" fill="#ffbb00"/><path d="M1400 264h8v8h-8z" fill="#ffb900"/><path d="M1400 272h8v8h-8z" fill="#ffad00"/><path d="M1392 280h8v8h-8z" fill="#ffaf04"/><path d="M1392 288h8v8h-8z" fill="#ffa30a"/><path d="M1400 280h8v8h-8z" fill="#ffa201"/><path d="M1400 288h8v8h-8z" fill="#ff9606"/><path d="M1408 264h8v8h-8z" fill="#ffac00"/><path d="M1408 272h8v8h-8z" fill="#ffa100"/><path d="M1416 264h8v8h-8z" fill="#ffa000"/><path d="M1416 272h8v8h-8z" fill="#ff9500"/><path d="M1408 280h8v8h-8z" fill="#ff9600"/><path d="M1408 288h8v8h-8z" fill="#ff8b02"/><path d="M1416 280h8v8h-8z" fill="#ff8b00"/><path d="M1416 288h8v8h-8z" fill="#ff8100"/><path d="M1424 240h8v8h-8z" fill="#ffb400"/><path d="M1424 248h8v8h-8z" fill="#ffa900"/><path d="M1424 256h8v8h-8z" fill="#ff9f00"/><path d="M1432 248h8v8h-8z" fill="#ff9e00"/><path d="M1432 256h8v8h-8z" fill="#ff9400"/><path d="M1440 256h8v8h-8z" fill="#ff8b00"/><path d="M1424 264h8v8h-8z" fill="#ff9500"/><path d="M1424 272h8v8h-8z" fill="#ff8b00"/><path d="M1432 264h8v8h-8z" fill="#ff8b00"/><path d="M1432 272h8v8h-8z" fill="#ff8200"/><path d="M1424 280h8v8h-8z" fill="#ff8200"/><path d="M1424 288h8v8h-8z" fill="#ff7800"/><path d="M1432 280h8v8h-8z" fill="#ff7900"/><path d="M1432 288h8v8h-8z" fill="#ff7000"/><path d="M1440 264h8v8h-8z" fill="#ff8200"/><path d="M1440 272h8v8h-8z" fill="#ff7900"/><path d="M1448 264h8v8h-8z" fill="#ff7900"/><path d="M1448 272h8v8h-8z" fill="#ff7100"/><path d="M1440 280h8v8h-8z" fill="#ff7100"/><path d="M1440 288h8v8h-8z" fill="#ff6900"/><path d="M1448 280h8v8h-8z" fill="#ff6900"/><path d="M1448 288h8v8h-8z" fill="#ff6200"/><path d="M1456 272h8v8h-8z" fill="#ff6a00"/><path d="M1464 272h8v8h-8z" fill="#ff6300"/><path d="M1456 280h8v8h-8z" fill="#ff6200"/><path d="M1456 288h8v8h-8z" fill="#ff5b00"/><path d="M1464 280h8v8h-8z" fill="#ff5c00"/><path d="M1464 288h8v8h-8z" fill="#ff5500"/><path d="M1472 280h8v8h-8z" fill="#ff5600"/><path d="M1472 288h8v8h-8z" fill="#ff5000"/><path d="M1480 288h8v8h-8z" fill="#ff4b00"/><path d="M1056 296h8v8h-8z" fill="#00ff8e"/><path d="M1056 304h8v8h-8z" fill="#00ff97"/><path d="M1064 296h8v8h-8z" fill="#00ff8d"/><path d="M1064 304h8v8h-8z" fill="#00ff96"/><path d="M1056 312h8v8h-8z" fill="#00ffa1"/><path d="M1056 320h8v8h-8z" fill="#00ffab"/><path d="M1064 312h8v8h-8z" fill="#00ffa0"/><path d="M1064 320h8v8h-8z" fill="#00ffaa"/><path d="M1056 328h8v8h-8z" fill="#00ffb6"/><path d="M1056 336h8v8h-8z" fill="#00ffc1"/><path d="M1064 328h8v8h-8z" fill="#00ffb5"/><path d="M1064 336h8v8h-8z" fill="#00ffc0"/><path d="M1064 344h8v8h-8z" fill="#00ffcc"/><path d="M1064 352h8v8h-8z" fill="#00ffd9"/><path d="M1072 296h8v8h-8z" fill="#00ff8c"/><path d="M1072 304h8v8h-8z" fill="#00ff95"/><path d="M1080 296h8v8h-8z" fill="#00ff8a"/><path d="M1080 304h8v8h-8z" fill="#00ff93"/><path d="M1072 312h8v8h-8z" fill="#00ff9e"/><path d="M1072 320h8v8h-8z" fill="#00ffa9"/><path d="M1080 312h8v8h-8z" fill="#00ff9d"/><path d="M1080 320h8v8h-8z" fill="#00ffa7"/><path d="M1088 296h8v8h-8z" fill="#00ff89"/><path d="M1088 304h8v8h-8z" fill="#00ff92"/><path d="M1096 296h8v8h-8z" fill="#00ff87"/><path d="M1096 304h8v8h-8z" fill="#00ff91"/><path d="M1088 312h8v8h-8z" fill="#00ff9c"/><path d="M1088 320h8v8h-8z" fill="#00ffa6"/><path d="M1096 312h8v8h-8z" fill="#00ff9a"/><path d="M1096 320h8v8h-8z" fill="#00ffa5"/><path d="M1072 328h8v8h-8z" fill="#00ffb4"/><path d="M1072 336h8v8h-8z" fill="#00ffbf"/><path d="M1080 328h8v8h-8z" fill="#00ffb3"/><path d="M1080 336h8v8h-8z" fill="#00ffbe"/><path d="M1072 344h8v8h-8z" fill="#00ffcc"/><path d="M1072 352h8v8h-8z" fill="#00ffd9"/><path d="M1080 344h8v8h-8z" fill="#00ffcb"/><path d="M1080 352h8v8h-8z" fill="#00ffd8"/><path d="M1088 328h8v8h-8z" fill="#00ffb1"/><path d="M1088 336h8v8h-8z" fill="#00ffbd"/><path d="M1096 328h8v8h-8z" fill="#00ffb0"/><path d="M1096 336h8v8h-8z" fill="#00ffbc"/><path d="M1088 344h8v8h-8z" fill="#00ffca"/><path d="M1088 352h8v8h-8z" fill="#00ffd8"/><path d="M1096 344h8v8h-8z" fill="#00ffc9"/><path d="M1096 352h8v8h-8z" fill="#00ffd7"/><path d="M1104 296h8v8h-8z" fill="#00ff86"/><path d="M1104 304h8v8h-8z" fill="#00ff8f"/><path d="M1112 296h8v8h-8z" fill="#00ff84"/><path d="M1112 304h8v8h-8z" fill="#00ff8e"/><path d="M1104 312h8v8h-8z" fill="#00ff99"/><path d="M1104 320h8v8h-8z" fill="#00ffa4"/><path d="M1112 312h8v8h-8z" fill="#00ff98"/><path d="M1112 320h8v8h-8z" fill="#00ffa2"/><path d="M1120 296h8v8h-8z" fill="#00ff82"/><path d="M1120 304h8v8h-8z" fill="#00ff8c"/><path d="M1128 296h8v8h-8z" fill="#00ff81"/><path d="M1128 304h8v8h-8z" fill="#00ff8a"/><path d="M1120 312h8v8h-8z" fill="#00ff96"/><path d="M1120 320h8v8h-8z" fill="#00ffa1"/><path d="M1128 312h8v8h-8z" fill="#00ff95"/><path d="M1128 320h8v8h-8z" fill="#00ffa0"/><path d="M1104 328h8v8h-8z" fill="#00ffaf"/><path d="M1104 336h8v8h-8z" fill="#00ffbb"/><path d="M1112 328h8v8h-8z" fill="#00ffae"/><path d="M1112 336h8v8h-8z" fill="#00ffba"/><path d="M1104 344h8v8h-8z" fill="#00ffc8"/><path d="M1104 352h8v8h-8z" fill="#00ffd7"/><path d="M1112 344h8v8h-8z" fill="#00ffc8"/><path d="M1112 352h8v8h-8z" fill="#00ffd6"/><path d="M1120 328h8v8h-8z" fill="#00ffad"/><path d="M1120 336h8v8h-8z" fill="#00ffb9"/><path d="M1128 328h8v8h-8z" fill="#00ffac"/><path d="M1128 336h8v8h-8z" fill="#00ffb8"/><path d="M1120 344h8v8h-8z" fill="#00ffc7"/><path d="M1120 352h8v8h-8z" fill="#00ffd5"/><path d="M1128 344h8v8h-8z" fill="#00ffc6"/><path d="M1128 352h8v8h-8z" fill="#00ffd5"/><path d="M1136 296h8v8h-8z" fill="#00ff7f"/><path d="M1136 304h8v8h-8z" fill="#00ff89"/><path d="M1144 296h8v8h-8z" fill="#00ff7d"/><path d="M1144 304h8v8h-8z" fill="#00ff87"/><path d="M1136 312h8v8h-8z" fill="#00ff93"/><path d="M1136 320h8v8h-8z" fill="#00ff9e"/><path d="M1144 312h8v8h-8z" fill="#00ff92"/><path d="M1144 320h8v8h-8z" fill="#00ff9d"/><path d="M1152 296h8v8h-8z" fill="#00ff7b"/><path d="M1152 304h8v8h-8z" fill="#00ff85"/><path d="M1160 296h8v8h-8z" fill="#00ff7a"/><path d="M1160 304h8v8h-8z" fill="#00ff84"/><path d="M1152 312h8v8h-8z" fill="#00ff90"/><path d="M1152 320h8v8h-8z" fill="#00ff9b"/><path d="M1160 312h8v8h-8z" fill="#00ff8e"/><path d="M1160 320h8v8h-8z" fill="#00ff9a"/><path d="M1136 328h8v8h-8z" fill="#00ffaa"/><path d="M1136 336h8v8h-8z" fill="#00ffb7"/><path d="M1144 328h8v8h-8z" fill="#00ffa9"/><path d="M1144 336h8v8h-8z" fill="#00ffb6"/><path d="M1136 344h8v8h-8z" fill="#00ffc5"/><path d="M1136 352h8v8h-8z" fill="#00ffd4"/><path d="M1144 344h8v8h-8z" fill="#00ffc4"/><path d="M1144 352h8v8h-8z" fill="#00ffd3"/><path d="M1152 328h8v8h-8z" fill="#00ffa8"/><path d="M1152 336h8v8h-8z" fill="#00ffb5"/><path d="M1160 328h8v8h-8z" fill="#00ffa6"/><path d="M1160 336h8v8h-8z" fill="#00ffb3"/><path d="M1152 344h8v8h-8z" fill="#00ffc3"/><path d="M1152 352h8v8h-8z" fill="#00ffd2"/><path d="M1160 344h8v8h-8z" fill="#00ffc2"/><path d="M1160 352h8v8h-8z" fill="#00ffd2"/><path d="M1168 296h8v8h-8z" fill="#00ff78"/><path d="M1168 304h8v8h-8z" fill="#00ff82"/><path d="M1176 296h8v8h-8z" fill="#00ff76"/><path d="M1176 304h8v8h-8z" fill="#00ff80"/><path d="M1168 312h8v8h-8z" fill="#00ff8d"/><path d="M1168 320h8v8h-8z" fill="#00ff98"/><path d="M1176 312h8v8h-8z" fill="#00ff8b"/><path d="M1176 320h8v8h-8z" fill="#00ff97"/><path d="M1184 296h8v8h-8z" fill="#00ff74"/><path d="M1184 304h8v8h-8z" fill="#00ff7e"/><path d="M1192 296h8v8h-8z" fill="#00ff72"/><path d="M1192 304h8v8h-8z" fill="#00ff7c"/><path d="M1184 312h8v8h-8z" fill="#00ff89"/><path d="M1184 320h8v8h-8z" fill="#00ff95"/><path d="M1192 312h8v8h-8z" fill="#00ff87"/><path d="M1192 320h8v8h-8z" fill="#00ff93"/><path d="M1168 328h8v8h-8z" fill="#00ffa5"/><path d="M1168 336h8v8h-8z" fill="#00ffb2"/><path d="M1176 328h8v8h-8z" fill="#00ffa3"/><path d="M1176 336h8v8h-8z" fill="#00ffb1"/><path d="M1168 344h8v8h-8z" fill="#00ffc1"/><path d="M1168 352h8v8h-8z" fill="#00ffd1"/><path d="M1176 344h8v8h-8z" fill="#00ffc0"/><path d="M1176 352h8v8h-8z" fill="#00ffd0"/><path d="M1184 328h8v8h-8z" fill="#00ffa2"/><path d="M1184 336h8v8h-8z" fill="#00ffaf"/><path d="M1192 328h8v8h-8z" fill="#00ffa0"/><path d="M1192 336h8v8h-8z" fill="#00ffae"/><path d="M1184 344h8v8h-8z" fill="#00ffbf"/><path d="M1184 352h8v8h-8z" fill="#00ffcf"/><path d="M1192 344h8v8h-8z" fill="#00ffbd"/><path d="M1192 352h8v8h-8z" fill="#00ffce"/><path d="M1200 296h8v8h-8z" fill="#00ff6f"/><path d="M1200 304h8v8h-8z" fill="#00ff7a"/><path d="M1208 296h8v8h-8z" fill="#00ff6d"/><path d="M1208 304h8v8h-8z" fill="#00ff78"/><path d="M1200 312h8v8h-8z" fill="#00ff85"/><path d="M1200 320h8v8h-8z" fill="#00ff91"/><path d="M1208 312h8v8h-8z" fill="#00ff83"/><path d="M1208 320h8v8h-8z" fill="#00ff8f"/><path d="M1216 296h8v8h-8z" fill="#00ff6b"/><path d="M1216 304h8v8h-8z" fill="#00ff75"/><path d="M1224 296h8v8h-8z" fill="#00ff68"/><path d="M1224 304h8v8h-8z" fill="#00ff73"/><path d="M1216 312h8v8h-8z" fill="#00ff81"/><path d="M1216 320h8v8h-8z" fill="#00ff8d"/><path d="M1224 312h8v8h-8z" fill="#00ff7f"/><path d="M1224 320h8v8h-8z" fill="#00ff8b"/><path d="M1200 328h8v8h-8z" fill="#00ff9e"/><path d="M1200 336h8v8h-8z" fill="#00ffad"/><path d="M1208 328h8v8h-8z" fill="#00ff9d"/><path d="M1208 336h8v8h-8z" fill="#00ffab"/><path d="M1200 344h8v8h-8z" fill="#00ffbc"/><path d="M1200 352h8v8h-8z" fill="#00ffcd"/><path d="M1208 344h8v8h-8z" fill="#00ffbb"/><path d="M1208 352h8v8h-8z" fill="#00ffcc"/><path d="M1216 328h8v8h-8z" fill="#00ff9b"/><path d="M1216 336h8v8h-8z" fill="#00ffa9"/><path d="M1224 328h8v8h-8z" fill="#00ff99"/><path d="M1224 336h8v8h-8z" fill="#00ffa8"/><path d="M1216 344h8v8h-8z" fill="#00ffb9"/><path d="M1216 352h8v8h-8z" fill="#00ffcb"/><path d="M1224 344h8v8h-8z" fill="#00ffb8"/><path d="M1224 352h8v8h-8z" fill="#00ffca"/><path d="M1232 296h8v8h-8z" fill="#00ff66"/><path d="M1232 304h8v8h-8z" fill="#00ff71"/><path d="M1240 296h8v8h-8z" fill="#00ff63"/><path d="M1240 304h8v8h-8z" fill="#00ff6e"/><path d="M1232 312h8v8h-8z" fill="#00ff7c"/><path d="M1232 320h8v8h-8z" fill="#00ff89"/><path d="M1240 312h8v8h-8z" fill="#02ff7a"/><path d="M1240 320h8v8h-8z" fill="#06ff87"/><path d="M1248 296h8v8h-8z" fill="#05ff61"/><path d="M1248 304h8v8h-8z" fill="#0aff6c"/><path d="M1256 296h8v8h-8z" fill="#15ff5e"/><path d="M1256 304h8v8h-8z" fill="#1cff69"/><path d="M1248 312h8v8h-8z" fill="#11ff78"/><path d="M1248 320h8v8h-8z" fill="#18ff85"/><path d="M1256 312h8v8h-8z" fill="#23ff75"/><path d="M1256 320h8v8h-8z" fill="#2bff82"/><path d="M1232 328h8v8h-8z" fill="#00ff97"/><path d="M1232 336h8v8h-8z" fill="#02ffa6"/><path d="M1240 328h8v8h-8z" fill="#0cff95"/><path d="M1240 336h8v8h-8z" fill="#13ffa4"/><path d="M1232 344h8v8h-8z" fill="#07ffb7"/><path d="M1232 352h8v8h-8z" fill="#0effc9"/><path d="M1240 344h8v8h-8z" fill="#1cffb5"/><path d="M1240 352h8v8h-8z" fill="#25ffc8"/><path d="M1248 328h8v8h-8z" fill="#20ff93"/><path d="M1248 336h8v8h-8z" fill="#28ffa2"/><path d="M1256 328h8v8h-8z" fill="#34ff91"/><path d="M1256 336h8v8h-8z" fill="#3effa0"/><path d="M1248 344h8v8h-8z" fill="#31ffb3"/><path d="M1248 352h8v8h-8z" fill="#3cffc6"/><path d="M1256 344h8v8h-8z" fill="#48ffb2"/><path d="M1256 352h8v8h-8z" fill="#54ffc5"/><path d="M1264 296h8v8h-8z" fill="#26ff5b"/><path d="M1264 304h8v8h-8z" fill="#2eff66"/><path d="M1272 296h8v8h-8z" fill="#38ff58"/><path d="M1272 304h8v8h-8z" fill="#40ff63"/><path d="M1264 312h8v8h-8z" fill="#36ff72"/><path d="M1264 320h8v8h-8z" fill="#3fff80"/><path d="M1272 312h8v8h-8z" fill="#4aff70"/><path d="M1272 320h8v8h-8z" fill="#54ff7d"/><path d="M1280 296h8v8h-8z" fill="#4aff55"/><path d="M1280 304h8v8h-8z" fill="#54ff61"/><path d="M1288 296h8v8h-8z" fill="#5eff52"/><path d="M1288 304h8v8h-8z" fill="#68ff5d"/><path d="M1280 312h8v8h-8z" fill="#5eff6d"/><path d="M1280 320h8v8h-8z" fill="#6aff7a"/><path d="M1288 312h8v8h-8z" fill="#74ff6a"/><path d="M1288 320h8v8h-8z" fill="#80ff78"/><path d="M1264 328h8v8h-8z" fill="#49ff8e"/><path d="M1264 336h8v8h-8z" fill="#54ff9e"/><path d="M1272 328h8v8h-8z" fill="#5fff8c"/><path d="M1272 336h8v8h-8z" fill="#6cff9c"/><path d="M1264 344h8v8h-8z" fill="#60ffb0"/><path d="M1264 352h8v8h-8z" fill="#6effc4"/><path d="M1272 344h8v8h-8z" fill="#79ffae"/><path d="M1272 352h8v8h-8z" fill="#88ffc2"/><path d="M1280 328h8v8h-8z" fill="#76ff89"/><path d="M1280 336h8v8h-8z" fill="#84ff9a"/><path d="M1288 328h8v8h-8z" fill="#8eff87"/><path d="M1288 336h8v8h-8z" fill="#9eff97"/><path d="M1280 344h8v8h-8z" fill="#94ffac"/><path d="M1280 352h8v8h-8z" fill="#a5ffc1"/><path d="M1288 344h8v8h-8z" fill="#afffaa"/><path d="M1288 352h8v8h-8z" fill="#c2ffbf"/><path d="M1296 296h8v8h-8z" fill="#72ff4f"/><path d="M1296 304h8v8h-8z" fill="#7dff5a"/><path d="M1304 296h8v8h-8z" fill="#86ff4b"/><path d="M1304 304h8v8h-8z" fill="#93ff57"/><path d="M1296 312h8v8h-8z" fill="#8aff67"/><path d="M1296 320h8v8h-8z" fill="#98ff75"/><path d="M1304 312h8v8h-8z" fill="#a1ff64"/><path d="M1304 320h8v8h-8z" fill="#b1ff72"/><path d="M1312 296h8v8h-8z" fill="#9cff48"/><path d="M1312 304h8v8h-8z" fill="#aaff53"/><path d="M1320 296h8v8h-8z" fill="#b2ff44"/><path d="M1320 304h8v8h-8z" fill="#c2ff50"/><path d="M1312 312h8v8h-8z" fill="#baff60"/><path d="M1312 320h8v8h-8z" fill="#cbff6e"/><path d="M1320 312h8v8h-8z" fill="#d3ff5d"/><path d="M1320 320h8v8h-8z" fill="#e6ff6b"/><path d="M1296 328h8v8h-8z" fill="#a8ff84"/><path d="M1296 336h8v8h-8z" fill="#b9ff95"/><path d="M1304 328h8v8h-8z" fill="#c2ff81"/><path d="M1304 336h8v8h-8z" fill="#d5ff92"/><path d="M1296 344h8v8h-8z" fill="#ccffa8"/><path d="M1296 352h8v8h-8z" fill="#e2ffbd"/><path d="M1304 344h8v8h-8z" fill="#ebffa6"/><path d="M1304 352h8v8h-8z" fill="#fcf8b6"/><path d="M1312 328h8v8h-8z" fill="#deff7e"/><path d="M1312 336h8v8h-8z" fill="#f2fe8f"/><path d="M1320 328h8v8h-8z" fill="#f8fc7a"/><path d="M1320 336h8v8h-8z" fill="#ffed83"/><path d="M1312 344h8v8h-8z" fill="#fef39b"/><path d="M1312 352h8v8h-8z" fill="#ffdda1"/><path d="M1320 344h8v8h-8z" fill="#ffd888"/><path d="M1320 352h8v8h-8z" fill="#ffc58d"/><path d="M1328 296h8v8h-8z" fill="#caff40"/><path d="M1328 304h8v8h-8z" fill="#dbff4c"/><path d="M1336 296h8v8h-8z" fill="#e2ff3c"/><path d="M1336 304h8v8h-8z" fill="#f4fe48"/><path d="M1328 312h8v8h-8z" fill="#edff59"/><path d="M1328 320h8v8h-8z" fill="#fcf965"/><path d="M1336 312h8v8h-8z" fill="#fef552"/><path d="M1336 320h8v8h-8z" fill="#ffe258"/><path d="M1344 296h8v8h-8z" fill="#f9fd38"/><path d="M1344 304h8v8h-8z" fill="#ffef40"/><path d="M1352 296h8v8h-8z" fill="#ffea2f"/><path d="M1352 304h8v8h-8z" fill="#ffd936"/><path d="M1344 312h8v8h-8z" fill="#ffdd46"/><path d="M1344 320h8v8h-8z" fill="#ffcc4d"/><path d="M1352 312h8v8h-8z" fill="#ffc83c"/><path d="M1352 320h8v8h-8z" fill="#ffb942"/><path d="M1328 328h8v8h-8z" fill="#ffe76c"/><path d="M1328 336h8v8h-8z" fill="#ffd472"/><path d="M1336 328h8v8h-8z" fill="#ffcf5e"/><path d="M1336 336h8v8h-8z" fill="#ffbe64"/><path d="M1328 344h8v8h-8z" fill="#ffc178"/><path d="M1328 352h8v8h-8z" fill="#ffb07d"/><path d="M1336 344h8v8h-8z" fill="#ffad6a"/><path d="M1336 352h8v8h-8z" fill="#ff9e6f"/><path d="M1344 328h8v8h-8z" fill="#ffbb52"/><path d="M1344 336h8v8h-8z" fill="#ffab58"/><path d="M1352 328h8v8h-8z" fill="#ffaa48"/><path d="M1352 336h8v8h-8z" fill="#ff9b4e"/><path d="M1344 344h8v8h-8z" fill="#ff9c5d"/><path d="M1344 352h8v8h-8z" fill="#ff8e62"/><path d="M1352 344h8v8h-8z" fill="#ff8e53"/><path d="M1352 352h8v8h-8z" fill="#ff8158"/><path d="M1360 296h8v8h-8z" fill="#ffd527"/><path d="M1360 304h8v8h-8z" fill="#ffc52e"/><path d="M1368 296h8v8h-8z" fill="#ffc220"/><path d="M1368 304h8v8h-8z" fill="#ffb426"/><path d="M1360 312h8v8h-8z" fill="#ffb634"/><path d="M1360 320h8v8h-8z" fill="#ffa83a"/><path d="M1368 312h8v8h-8z" fill="#ffa72c"/><path d="M1368 320h8v8h-8z" fill="#ff9932"/><path d="M1376 296h8v8h-8z" fill="#ffb21a"/><path d="M1376 304h8v8h-8z" fill="#ffa520"/><path d="M1384 296h8v8h-8z" fill="#ffa415"/><path d="M1384 304h8v8h-8z" fill="#ff981a"/><path d="M1376 312h8v8h-8z" fill="#ff9926"/><path d="M1376 320h8v8h-8z" fill="#ff8d2b"/><path d="M1384 312h8v8h-8z" fill="#ff8c20"/><path d="M1384 320h8v8h-8z" fill="#ff8125"/><path d="M1360 328h8v8h-8z" fill="#ff9a3f"/><path d="M1360 336h8v8h-8z" fill="#ff8d44"/><path d="M1368 328h8v8h-8z" fill="#ff8d37"/><path d="M1368 336h8v8h-8z" fill="#ff813c"/><path d="M1360 344h8v8h-8z" fill="#ff814a"/><path d="M1360 352h8v8h-8z" fill="#ff754e"/><path d="M1368 344h8v8h-8z" fill="#ff7541"/><path d="M1368 352h8v8h-8z" fill="#ff6a46"/><path d="M1376 328h8v8h-8z" fill="#ff8130"/><path d="M1376 336h8v8h-8z" fill="#ff7635"/><path d="M1384 328h8v8h-8z" fill="#ff762a"/><path d="M1384 336h8v8h-8z" fill="#ff6c2f"/><path d="M1376 344h8v8h-8z" fill="#ff6b3a"/><path d="M1376 352h8v8h-8z" fill="#ff613f"/><path d="M1384 344h8v8h-8z" fill="#ff6234"/><path d="M1384 352h8v8h-8z" fill="#ff5938"/><path d="M1392 296h8v8h-8z" fill="#ff9710"/><path d="M1392 304h8v8h-8z" fill="#ff8c15"/><path d="M1400 296h8v8h-8z" fill="#ff8c0b"/><path d="M1400 304h8v8h-8z" fill="#ff8111"/><path d="M1392 312h8v8h-8z" fill="#ff811a"/><path d="M1392 320h8v8h-8z" fill="#ff771f"/><path d="M1400 312h8v8h-8z" fill="#ff7716"/><path d="M1400 320h8v8h-8z" fill="#ff6e1b"/><path d="M1408 296h8v8h-8z" fill="#ff8107"/><path d="M1408 304h8v8h-8z" fill="#ff780c"/><path d="M1416 296h8v8h-8z" fill="#ff7804"/><path d="M1416 304h8v8h-8z" fill="#ff6f09"/><path d="M1408 312h8v8h-8z" fill="#ff6e11"/><path d="M1408 320h8v8h-8z" fill="#ff6516"/><path d="M1416 312h8v8h-8z" fill="#ff660d"/><path d="M1416 320h8v8h-8z" fill="#ff5e12"/><path d="M1392 328h8v8h-8z" fill="#ff6d24"/><path d="M1392 336h8v8h-8z" fill="#ff6329"/><path d="M1400 328h8v8h-8z" fill="#ff641f"/><path d="M1400 336h8v8h-8z" fill="#ff5b24"/><path d="M1392 344h8v8h-8z" fill="#ff5a2e"/><path d="M1392 352h8v8h-8z" fill="#ff5132"/><path d="M1400 344h8v8h-8z" fill="#ff5228"/><path d="M1400 352h8v8h-8z" fill="#ff4a2d"/><path d="M1408 328h8v8h-8z" fill="#ff5c1b"/><path d="M1408 336h8v8h-8z" fill="#ff541f"/><path d="M1416 328h8v8h-8z" fill="#ff5516"/><path d="M1416 336h8v8h-8z" fill="#ff4d1b"/><path d="M1408 344h8v8h-8z" fill="#ff4c23"/><path d="M1408 352h8v8h-8z" fill="#ff4428"/><path d="M1416 344h8v8h-8z" fill="#ff451f"/><path d="M1416 352h8v8h-8z" fill="#ff3e23"/><path d="M1424 296h8v8h-8z" fill="#ff7001"/><path d="M1424 304h8v8h-8z" fill="#ff6705"/><path d="M1432 296h8v8h-8z" fill="#ff6800"/><path d="M1432 304h8v8h-8z" fill="#ff6002"/><path d="M1424 312h8v8h-8z" fill="#ff5f0a"/><path d="M1424 320h8v8h-8z" fill="#ff570e"/><path d="M1432 312h8v8h-8z" fill="#ff5807"/><path d="M1432 320h8v8h-8z" fill="#ff500b"/><path d="M1440 296h8v8h-8z" fill="#ff6100"/><path d="M1440 304h8v8h-8z" fill="#ff5900"/><path d="M1448 296h8v8h-8z" fill="#ff5a00"/><path d="M1448 304h8v8h-8z" fill="#ff5300"/><path d="M1440 312h8v8h-8z" fill="#ff5204"/><path d="M1440 320h8v8h-8z" fill="#ff4a08"/><path d="M1448 312h8v8h-8z" fill="#ff4c01"/><path d="M1448 320h8v8h-8z" fill="#ff4505"/><path d="M1424 328h8v8h-8z" fill="#ff4f13"/><path d="M1424 336h8v8h-8z" fill="#ff4717"/><path d="M1432 328h8v8h-8z" fill="#ff490f"/><path d="M1432 336h8v8h-8z" fill="#ff4213"/><path d="M1424 344h8v8h-8z" fill="#ff401b"/><path d="M1424 352h8v8h-8z" fill="#ff391f"/><path d="M1432 344h8v8h-8z" fill="#ff3b17"/><path d="M1432 352h8v8h-8z" fill="#ff341b"/><path d="M1440 328h8v8h-8z" fill="#ff430c"/><path d="M1440 336h8v8h-8z" fill="#ff3c10"/><path d="M1448 328h8v8h-8z" fill="#ff3e09"/><path d="M1448 336h8v8h-8z" fill="#ff380d"/><path d="M1440 344h8v8h-8z" fill="#ff3614"/><path d="M1440 352h8v8h-8z" fill="#ff2f17"/><path d="M1448 344h8v8h-8z" fill="#ff3110"/><path d="M1448 352h8v8h-8z" fill="#ff2b14"/><path d="M1456 296h8v8h-8z" fill="#ff5400"/><path d="M1456 304h8v8h-8z" fill="#ff4d00"/><path d="M1464 296h8v8h-8z" fill="#ff4e00"/><path d="M1464 304h8v8h-8z" fill="#ff4800"/><path d="M1456 312h8v8h-8z" fill="#ff4600"/><path d="M1456 320h8v8h-8z" fill="#ff4002"/><path d="M1464 312h8v8h-8z" fill="#ff4100"/><path d="M1464 320h8v8h-8z" fill="#ff3b00"/><path d="M1472 296h8v8h-8z" fill="#ff4900"/><path d="M1472 304h8v8h-8z" fill="#ff4300"/><path d="M1480 296h8v8h-8z" fill="#ff4400"/><path d="M1480 304h8v8h-8z" fill="#ff3e00"/><path d="M1472 312h8v8h-8z" fill="#ff3d00"/><path d="M1472 320h8v8h-8z" fill="#ff3700"/><path d="M1480 312h8v8h-8z" fill="#ff3800"/><path d="M1480 320h8v8h-8z" fill="#ff3300"/><path d="M1456 328h8v8h-8z" fill="#ff3906"/><path d="M1456 336h8v8h-8z" fill="#ff330a"/><path d="M1464 328h8v8h-8z" fill="#ff3503"/><path d="M1464 336h8v8h-8z" fill="#ff2f07"/><path d="M1456 344h8v8h-8z" fill="#ff2d0d"/><path d="M1456 352h8v8h-8z" fill="#ff2711"/><path d="M1464 344h8v8h-8z" fill="#ff290b"/><path d="M1464 352h8v8h-8z" fill="#ff230e"/><path d="M1472 328h8v8h-8z" fill="#ff3101"/><path d="M1472 336h8v8h-8z" fill="#ff2b05"/><path d="M1480 328h8v8h-8z" fill="#ff2d00"/><path d="M1480 336h8v8h-8z" fill="#ff2802"/><path d="M1472 344h8v8h-8z" fill="#ff2608"/><path d="M1472 352h8v8h-8z" fill="#ff200b"/><path d="M1480 344h8v8h-8z" fill="#ff2206"/><path d="M1480 352h8v8h-8z" fill="#ff1d09"/><path d="M1488 296h8v8h-8z" fill="#ff4000"/><path d="M1488 304h8v8h-8z" fill="#ff3a00"/><path d="M1496 304h8v8h-8z" fill="#ff3600"/><path d="M1488 312h8v8h-8z" fill="#ff3400"/><path d="M1488 320h8v8h-8z" fill="#ff2f00"/><path d="M1496 312h8v8h-8z" fill="#ff3100"/><path d="M1496 320h8v8h-8z" fill="#ff2b00"/><path d="M1504 312h8v8h-8z" fill="#ff2d00"/><path d="M1504 320h8v8h-8z" fill="#ff2800"/><path d="M1512 312h8v8h-8z" fill="#ff2a00"/><path d="M1512 320h8v8h-8z" fill="#ff2500"/><path d="M1488 328h8v8h-8z" fill="#ff2900"/><path d="M1488 336h8v8h-8z" fill="#ff2400"/><path d="M1496 328h8v8h-8z" fill="#ff2600"/><path d="M1496 336h8v8h-8z" fill="#ff2100"/><path d="M1488 344h8v8h-8z" fill="#ff1f03"/><path d="M1488 352h8v8h-8z" fill="#ff1a07"/><path d="M1496 344h8v8h-8z" fill="#ff1c01"/><path d="M1496 352h8v8h-8z" fill="#ff1704"/><path d="M1504 328h8v8h-8z" fill="#ff2300"/><path d="M1504 336h8v8h-8z" fill="#ff1e00"/><path d="M1512 328h8v8h-8z" fill="#ff2000"/><path d="M1512 336h8v8h-8z" fill="#ff1b00"/><path d="M1504 344h16v16h-16z" fill="#ff1501"/><path d="M1520 320h8v8h-8z" fill="#ff2200"/><path d="M1520 328h16v16h-16z" fill="#ff1900"/><path d="M1520 344h16v16h-16z" fill="#ff1100"/><path d="M1536 328h16v16h-16z" fill="#ff1500"/><path d="M1536 344h16v16h-16z" fill="#ff0c00"/><path d="M1552 344h16v16h-16z" fill="#ff0800"/><path d="M1064 360h8v8h-8z" fill="#00ffe7"/><path d="M1064 368h8v8h-8z" fill="#00fff7"/><path d="M1072 360h8v8h-8z" fill="#00ffe7"/><path d="M1072 368h8v8h-8z" fill="#00fff6"/><path d="M1080 360h8v8h-8z" fill="#00ffe7"/><path d="M1080 368h8v8h-8z" fill="#00fff6"/><path d="M1072 376h8v8h-8z" fill="#00f7ff"/><path d="M1072 384h8v8h-8z" fill="#00e8ff"/><path d="M1080 376h8v8h-8z" fill="#00f7ff"/><path d="M1080 384h8v8h-8z" fill="#00e7ff"/><path d="M1088 360h8v8h-8z" fill="#00ffe6"/><path d="M1088 368h8v8h-8z" fill="#00fff6"/><path d="M1096 360h8v8h-8z" fill="#00ffe6"/><path d="M1096 368h8v8h-8z" fill="#00fff6"/><path d="M1088 376h8v8h-8z" fill="#00f7ff"/><path d="M1088 384h8v8h-8z" fill="#00e7ff"/><path d="M1096 376h8v8h-8z" fill="#00f7ff"/><path d="M1096 384h8v8h-8z" fill="#00e6ff"/><path d="M1072 392h8v8h-8z" fill="#00d9ff"/><path d="M1072 400h8v8h-8z" fill="#00caff"/><path d="M1080 392h8v8h-8z" fill="#00d8ff"/><path d="M1080 400h8v8h-8z" fill="#00caff"/><path d="M1080 408h8v8h-8z" fill="#00bcff"/><path d="M1080 416h8v8h-8z" fill="#00afff"/><path d="M1088 392h8v8h-8z" fill="#00d7ff"/><path d="M1088 400h8v8h-8z" fill="#00c9ff"/><path d="M1096 392h8v8h-8z" fill="#00d7ff"/><path d="M1096 400h8v8h-8z" fill="#00c8ff"/><path d="M1088 408h8v8h-8z" fill="#00bbff"/><path d="M1088 416h8v8h-8z" fill="#00adff"/><path d="M1096 408h8v8h-8z" fill="#00baff"/><path d="M1096 416h8v8h-8z" fill="#00acff"/><path d="M1104 360h8v8h-8z" fill="#00ffe6"/><path d="M1104 368h8v8h-8z" fill="#00fff6"/><path d="M1112 360h8v8h-8z" fill="#00ffe5"/><path d="M1112 368h8v8h-8z" fill="#00fff6"/><path d="M1104 376h8v8h-8z" fill="#00f7ff"/><path d="M1104 384h8v8h-8z" fill="#00e6ff"/><path d="M1112 376h8v8h-8z" fill="#00f6ff"/><path d="M1112 384h8v8h-8z" fill="#00e5ff"/><path d="M1120 360h8v8h-8z" fill="#00ffe5"/><path d="M1120 368h8v8h-8z" fill="#00fff6"/><path d="M1128 360h8v8h-8z" fill="#00ffe4"/><path d="M1128 368h8v8h-8z" fill="#00fff6"/><path d="M1120 376h8v8h-8z" fill="#00f6ff"/><path d="M1120 384h8v8h-8z" fill="#00e5ff"/><path d="M1128 376h8v8h-8z" fill="#00f6ff"/><path d="M1128 384h8v8h-8z" fill="#00e4ff"/><path d="M1104 392h8v8h-8z" fill="#00d6ff"/><path d="M1104 400h8v8h-8z" fill="#00c7ff"/><path d="M1112 392h8v8h-8z" fill="#00d5ff"/><path d="M1112 400h8v8h-8z" fill="#00c6ff"/><path d="M1104 408h8v8h-8z" fill="#00b8ff"/><path d="M1104 416h8v8h-8z" fill="#00abff"/><path d="M1112 408h8v8h-8z" fill="#00b7ff"/><path d="M1112 416h8v8h-8z" fill="#00a9ff"/><path d="M1120 392h8v8h-8z" fill="#00d4ff"/><path d="M1120 400h8v8h-8z" fill="#00c5ff"/><path d="M1128 392h8v8h-8z" fill="#00d4ff"/><path d="M1128 400h8v8h-8z" fill="#00c4ff"/><path d="M1120 408h8v8h-8z" fill="#00b6ff"/><path d="M1120 416h8v8h-8z" fill="#00a8ff"/><path d="M1128 408h8v8h-8z" fill="#00b5ff"/><path d="M1128 416h8v8h-8z" fill="#00a7ff"/><path d="M1136 360h8v8h-8z" fill="#00ffe4"/><path d="M1136 368h8v8h-8z" fill="#00fff6"/><path d="M1144 360h8v8h-8z" fill="#00ffe3"/><path d="M1144 368h8v8h-8z" fill="#00fff5"/><path d="M1136 376h8v8h-8z" fill="#00f6ff"/><path d="M1136 384h8v8h-8z" fill="#00e4ff"/><path d="M1144 376h8v8h-8z" fill="#00f6ff"/><path d="M1144 384h8v8h-8z" fill="#00e3ff"/><path d="M1152 360h8v8h-8z" fill="#00ffe3"/><path d="M1152 368h8v8h-8z" fill="#00fff5"/><path d="M1160 360h8v8h-8z" fill="#00ffe3"/><path d="M1160 368h8v8h-8z" fill="#00fff5"/><path d="M1152 376h8v8h-8z" fill="#00f5ff"/><path d="M1152 384h8v8h-8z" fill="#00e3ff"/><path d="M1160 376h8v8h-8z" fill="#00f5ff"/><path d="M1160 384h8v8h-8z" fill="#00e2ff"/><path d="M1136 392h8v8h-8z" fill="#00d3ff"/><path d="M1136 400h8v8h-8z" fill="#00c3ff"/><path d="M1144 392h8v8h-8z" fill="#00d2ff"/><path d="M1144 400h8v8h-8z" fill="#00c2ff"/><path d="M1136 408h8v8h-8z" fill="#00b3ff"/><path d="M1136 416h8v8h-8z" fill="#00a5ff"/><path d="M1144 408h8v8h-8z" fill="#00b2ff"/><path d="M1144 416h8v8h-8z" fill="#00a3ff"/><path d="M1152 392h8v8h-8z" fill="#00d1ff"/><path d="M1152 400h8v8h-8z" fill="#00c0ff"/><path d="M1160 392h8v8h-8z" fill="#00d0ff"/><path d="M1160 400h8v8h-8z" fill="#00bfff"/><path d="M1152 408h8v8h-8z" fill="#00b1ff"/><path d="M1152 416h8v8h-8z" fill="#00a2ff"/><path d="M1160 408h8v8h-8z" fill="#00afff"/><path d="M1160 416h8v8h-8z" fill="#00a0ff"/><path d="M1168 360h8v8h-8z" fill="#00ffe2"/><path d="M1168 368h8v8h-8z" fill="#00fff5"/><path d="M1176 360h8v8h-8z" fill="#00ffe1"/><path d="M1176 368h8v8h-8z" fill="#00fff5"/><path d="M1168 376h8v8h-8z" fill="#00f5ff"/><path d="M1168 384h8v8h-8z" fill="#00e1ff"/><path d="M1176 376h8v8h-8z" fill="#00f5ff"/><path d="M1176 384h8v8h-8z" fill="#00e1ff"/><path d="M1184 360h8v8h-8z" fill="#00ffe1"/><path d="M1184 368h8v8h-8z" fill="#00fff5"/><path d="M1192 360h8v8h-8z" fill="#00ffe0"/><path d="M1192 368h8v8h-8z" fill="#00fff4"/><path d="M1184 376h8v8h-8z" fill="#00f4ff"/><path d="M1184 384h8v8h-8z" fill="#00e0ff"/><path d="M1192 376h8v8h-8z" fill="#00f4ff"/><path d="M1192 384h8v8h-8z" fill="#00dfff"/><path d="M1168 392h8v8h-8z" fill="#00cfff"/><path d="M1168 400h8v8h-8z" fill="#00beff"/><path d="M1176 392h8v8h-8z" fill="#00ceff"/><path d="M1176 400h8v8h-8z" fill="#00bdff"/><path d="M1168 408h8v8h-8z" fill="#00aeff"/><path d="M1168 416h8v8h-8z" fill="#009eff"/><path d="M1176 408h8v8h-8z" fill="#00acff"/><path d="M1176 416h8v8h-8z" fill="#009dff"/><path d="M1184 392h8v8h-8z" fill="#00cdff"/><path d="M1184 400h8v8h-8z" fill="#00bbff"/><path d="M1192 392h8v8h-8z" fill="#00ccff"/><path d="M1192 400h8v8h-8z" fill="#00baff"/><path d="M1184 408h8v8h-8z" fill="#00aaff"/><path d="M1184 416h8v8h-8z" fill="#009bff"/><path d="M1192 408h8v8h-8z" fill="#00a9ff"/><path d="M1192 416h8v8h-8z" fill="#0099ff"/><path d="M1200 360h8v8h-8z" fill="#00ffe0"/><path d="M1200 368h8v8h-8z" fill="#00fff4"/><path d="M1208 360h8v8h-8z" fill="#00ffdf"/><path d="M1208 368h8v8h-8z" fill="#00fff4"/><path d="M1200 376h8v8h-8z" fill="#00f4ff"/><path d="M1200 384h8v8h-8z" fill="#00dfff"/><path d="M1208 376h8v8h-8z" fill="#00f3ff"/><path d="M1208 384h8v8h-8z" fill="#00deff"/><path d="M1216 360h8v8h-8z" fill="#00ffde"/><path d="M1216 368h8v8h-8z" fill="#00fff4"/><path d="M1224 360h8v8h-8z" fill="#03ffde"/><path d="M1224 368h8v8h-8z" fill="#09fff4"/><path d="M1216 376h8v8h-8z" fill="#01f3ff"/><path d="M1216 384h8v8h-8z" fill="#03ddff"/><path d="M1224 376h8v8h-8z" fill="#10f3ff"/><path d="M1224 384h8v8h-8z" fill="#18dcff"/><path d="M1200 392h8v8h-8z" fill="#00cbff"/><path d="M1200 400h8v8h-8z" fill="#00b8ff"/><path d="M1208 392h8v8h-8z" fill="#00caff"/><path d="M1208 400h8v8h-8z" fill="#01b7ff"/><path d="M1200 408h8v8h-8z" fill="#00a7ff"/><path d="M1200 416h8v8h-8z" fill="#0097ff"/><path d="M1208 408h8v8h-8z" fill="#03a5ff"/><path d="M1208 416h8v8h-8z" fill="#0895ff"/><path d="M1216 392h8v8h-8z" fill="#09c8ff"/><path d="M1216 400h8v8h-8z" fill="#0fb5ff"/><path d="M1224 392h8v8h-8z" fill="#1ec7ff"/><path d="M1224 400h8v8h-8z" fill="#24b3ff"/><path d="M1216 408h8v8h-8z" fill="#15a3ff"/><path d="M1216 416h8v8h-8z" fill="#1b92ff"/><path d="M1224 408h8v8h-8z" fill="#2aa1ff"/><path d="M1224 416h8v8h-8z" fill="#3090ff"/><path d="M1232 360h8v8h-8z" fill="#17ffdd"/><path d="M1232 368h8v8h-8z" fill="#20fff3"/><path d="M1240 360h8v8h-8z" fill="#2effdc"/><path d="M1240 368h8v8h-8z" fill="#3afff3"/><path d="M1232 376h8v8h-8z" fill="#29f2ff"/><path d="M1232 384h8v8h-8z" fill="#2fdbff"/><path d="M1240 376h8v8h-8z" fill="#42f2ff"/><path d="M1240 384h8v8h-8z" fill="#48daff"/><path d="M1248 360h8v8h-8z" fill="#47ffdb"/><path d="M1248 368h8v8h-8z" fill="#54fff3"/><path d="M1256 360h8v8h-8z" fill="#61ffda"/><path d="M1256 368h8v8h-8z" fill="#70fff3"/><path d="M1248 376h8v8h-8z" fill="#5df2ff"/><path d="M1248 384h8v8h-8z" fill="#62d9ff"/><path d="M1256 376h8v8h-8z" fill="#7af1ff"/><path d="M1256 384h8v8h-8z" fill="#7dd8ff"/><path d="M1232 392h8v8h-8z" fill="#35c6ff"/><path d="M1232 400h8v8h-8z" fill="#3bb2ff"/><path d="M1240 392h8v8h-8z" fill="#4dc4ff"/><path d="M1240 400h8v8h-8z" fill="#52b0ff"/><path d="M1232 408h8v8h-8z" fill="#409fff"/><path d="M1232 416h8v8h-8z" fill="#458eff"/><path d="M1240 408h8v8h-8z" fill="#569dff"/><path d="M1240 416h8v8h-8z" fill="#5a8bff"/><path d="M1248 392h8v8h-8z" fill="#66c3ff"/><path d="M1248 400h8v8h-8z" fill="#6aaeff"/><path d="M1256 392h8v8h-8z" fill="#81c1ff"/><path d="M1256 400h8v8h-8z" fill="#84acff"/><path d="M1248 408h8v8h-8z" fill="#6e9bff"/><path d="M1248 416h8v8h-8z" fill="#7189ff"/><path d="M1256 408h8v8h-8z" fill="#8798ff"/><path d="M1256 416h8v8h-8z" fill="#8986ff"/><path d="M1264 360h8v8h-8z" fill="#7dffda"/><path d="M1264 368h8v8h-8z" fill="#8efff2"/><path d="M1272 360h8v8h-8z" fill="#9affd9"/><path d="M1272 368h8v8h-8z" fill="#adfff2"/><path d="M1264 376h8v8h-8z" fill="#98f1ff"/><path d="M1264 384h8v8h-8z" fill="#9ad7ff"/><path d="M1272 376h8v8h-8z" fill="#b7f0ff"/><path d="M1272 384h8v8h-8z" fill="#b9d6ff"/><path d="M1280 360h8v8h-8z" fill="#b8ffd8"/><path d="M1280 368h8v8h-8z" fill="#cefff2"/><path d="M1288 360h8v8h-8z" fill="#d8ffd7"/><path d="M1288 368h8v8h-8z" fill="#f0fef0"/><path d="M1280 376h8v8h-8z" fill="#d9f0ff"/><path d="M1280 384h8v8h-8z" fill="#d9d5ff"/><path d="M1288 376h8v8h-8z" fill="#f9ecfc"/><path d="M1288 384h8v8h-8z" fill="#f8d1fd"/><path d="M1264 392h8v8h-8z" fill="#9cc0ff"/><path d="M1264 400h8v8h-8z" fill="#9eaaff"/><path d="M1272 392h8v8h-8z" fill="#babeff"/><path d="M1272 400h8v8h-8z" fill="#bba8ff"/><path d="M1264 408h8v8h-8z" fill="#a096ff"/><path d="M1264 416h8v8h-8z" fill="#a283ff"/><path d="M1272 408h8v8h-8z" fill="#bb93ff"/><path d="M1272 416h8v8h-8z" fill="#bc80ff"/><path d="M1280 392h8v8h-8z" fill="#d8bcff"/><path d="M1280 400h8v8h-8z" fill="#d8a5ff"/><path d="M1288 392h8v8h-8z" fill="#f7b9fd"/><path d="M1288 400h8v8h-8z" fill="#f6a2fe"/><path d="M1280 408h8v8h-8z" fill="#d890ff"/><path d="M1280 416h8v8h-8z" fill="#d87dff"/><path d="M1288 408h8v8h-8z" fill="#f58dfe"/><path d="M1288 416h8v8h-8z" fill="#f47aff"/><path d="M1296 360h8v8h-8z" fill="#f7fcd3"/><path d="M1296 368h8v8h-8z" fill="#ffeadd"/><path d="M1304 360h8v8h-8z" fill="#ffe3bd"/><path d="M1304 368h8v8h-8z" fill="#ffcdc1"/><path d="M1296 376h8v8h-8z" fill="#ffd2e0"/><path d="M1296 384h8v8h-8z" fill="#ffbbe3"/><path d="M1304 376h8v8h-8z" fill="#ffb8c5"/><path d="M1304 384h8v8h-8z" fill="#ffa4c8"/><path d="M1312 360h8v8h-8z" fill="#ffc8a6"/><path d="M1312 368h8v8h-8z" fill="#ffb5aa"/><path d="M1320 360h8v8h-8z" fill="#ffb292"/><path d="M1320 368h8v8h-8z" fill="#ffa097"/><path d="M1312 376h8v8h-8z" fill="#ffa2ae"/><path d="M1312 384h8v8h-8z" fill="#ff91b2"/><path d="M1320 376h8v8h-8z" fill="#ff909b"/><path d="M1320 384h8v8h-8z" fill="#ff809f"/><path d="M1296 392h8v8h-8z" fill="#ffa6e6"/><path d="M1296 400h8v8h-8z" fill="#ff92e8"/><path d="M1304 392h8v8h-8z" fill="#ff91cc"/><path d="M1304 400h8v8h-8z" fill="#ff80cf"/><path d="M1296 408h8v8h-8z" fill="#ff80eb"/><path d="M1296 416h8v8h-8z" fill="#ff6eed"/><path d="M1304 408h8v8h-8z" fill="#ff6fd2"/><path d="M1304 416h8v8h-8z" fill="#ff60d4"/><path d="M1312 392h8v8h-8z" fill="#ff80b6"/><path d="M1312 400h8v8h-8z" fill="#ff70b9"/><path d="M1320 392h8v8h-8z" fill="#ff71a3"/><path d="M1320 400h8v8h-8z" fill="#ff63a7"/><path d="M1312 408h8v8h-8z" fill="#ff61bc"/><path d="M1312 416h8v8h-8z" fill="#ff53c0"/><path d="M1320 408h8v8h-8z" fill="#ff56aa"/><path d="M1320 416h8v8h-8z" fill="#ff49ae"/><path d="M1328 360h8v8h-8z" fill="#ff9f82"/><path d="M1328 368h8v8h-8z" fill="#ff8f86"/><path d="M1336 360h8v8h-8z" fill="#ff8f74"/><path d="M1336 368h8v8h-8z" fill="#ff8078"/><path d="M1328 376h8v8h-8z" fill="#ff808b"/><path d="M1328 384h8v8h-8z" fill="#ff728f"/><path d="M1336 376h8v8h-8z" fill="#ff737d"/><path d="M1336 384h8v8h-8z" fill="#ff6681"/><path d="M1344 360h8v8h-8z" fill="#ff8167"/><path d="M1344 368h8v8h-8z" fill="#ff746c"/><path d="M1352 360h8v8h-8z" fill="#ff745d"/><path d="M1352 368h8v8h-8z" fill="#ff6861"/><path d="M1344 376h8v8h-8z" fill="#ff6770"/><path d="M1344 384h8v8h-8z" fill="#ff5b75"/><path d="M1352 376h8v8h-8z" fill="#ff5d66"/><path d="M1352 384h8v8h-8z" fill="#ff526a"/><path d="M1328 392h8v8h-8z" fill="#ff6593"/><path d="M1328 400h8v8h-8z" fill="#ff5897"/><path d="M1336 392h8v8h-8z" fill="#ff5a85"/><path d="M1336 400h8v8h-8z" fill="#ff4e89"/><path d="M1328 408h8v8h-8z" fill="#ff4b9a"/><path d="M1328 416h8v8h-8z" fill="#ff409e"/><path d="M1336 408h8v8h-8z" fill="#ff428d"/><path d="M1336 416h8v8h-8z" fill="#ff3890"/><path d="M1344 392h8v8h-8z" fill="#ff5079"/><path d="M1344 400h8v8h-8z" fill="#ff457d"/><path d="M1352 392h8v8h-8z" fill="#ff476e"/><path d="M1352 400h8v8h-8z" fill="#ff3d72"/><path d="M1344 408h8v8h-8z" fill="#ff3a80"/><path d="M1344 416h8v8h-8z" fill="#ff3084"/><path d="M1352 408h8v8h-8z" fill="#ff3375"/><path d="M1352 416h8v8h-8z" fill="#ff2a79"/><path d="M1360 360h8v8h-8z" fill="#ff6953"/><path d="M1360 368h8v8h-8z" fill="#ff5e58"/><path d="M1368 360h8v8h-8z" fill="#ff604b"/><path d="M1368 368h8v8h-8z" fill="#ff554f"/><path d="M1360 376h8v8h-8z" fill="#ff545c"/><path d="M1360 384h8v8h-8z" fill="#ff4a60"/><path d="M1368 376h8v8h-8z" fill="#ff4c53"/><path d="M1368 384h8v8h-8z" fill="#ff4257"/><path d="M1376 360h8v8h-8z" fill="#ff5743"/><path d="M1376 368h8v8h-8z" fill="#ff4d48"/><path d="M1384 360h8v8h-8z" fill="#ff4f3c"/><path d="M1384 368h8v8h-8z" fill="#ff4641"/><path d="M1376 376h8v8h-8z" fill="#ff444c"/><path d="M1376 384h8v8h-8z" fill="#ff3b50"/><path d="M1384 376h8v8h-8z" fill="#ff3e45"/><path d="M1384 384h8v8h-8z" fill="#ff3549"/><path d="M1360 392h8v8h-8z" fill="#ff4064"/><path d="M1360 400h8v8h-8z" fill="#ff3668"/><path d="M1368 392h8v8h-8z" fill="#ff395b"/><path d="M1368 400h8v8h-8z" fill="#ff305f"/><path d="M1360 408h8v8h-8z" fill="#ff2d6c"/><path d="M1360 416h8v8h-8z" fill="#ff246f"/><path d="M1368 408h8v8h-8z" fill="#ff2763"/><path d="M1368 416h8v8h-8z" fill="#ff1f66"/><path d="M1376 392h8v8h-8z" fill="#ff3354"/><path d="M1376 400h8v8h-8z" fill="#ff2a57"/><path d="M1384 392h8v8h-8z" fill="#ff2d4c"/><path d="M1384 400h8v8h-8z" fill="#ff2550"/><path d="M1376 408h8v8h-8z" fill="#ff225b"/><path d="M1376 416h8v8h-8z" fill="#ff1b5e"/><path d="M1384 408h8v8h-8z" fill="#ff1e54"/><path d="M1384 416h8v8h-8z" fill="#ff1657"/><path d="M1392 360h8v8h-8z" fill="#ff4836"/><path d="M1392 368h8v8h-8z" fill="#ff403a"/><path d="M1400 360h8v8h-8z" fill="#ff4231"/><path d="M1400 368h8v8h-8z" fill="#ff3a35"/><path d="M1392 376h8v8h-8z" fill="#ff383e"/><path d="M1392 384h8v8h-8z" fill="#ff3042"/><path d="M1400 376h8v8h-8z" fill="#ff3239"/><path d="M1400 384h8v8h-8z" fill="#ff2b3c"/><path d="M1408 360h8v8h-8z" fill="#ff3c2c"/><path d="M1408 368h8v8h-8z" fill="#ff3430"/><path d="M1416 360h8v8h-8z" fill="#ff3727"/><path d="M1416 368h8v8h-8z" fill="#ff2f2b"/><path d="M1408 376h8v8h-8z" fill="#ff2d33"/><path d="M1408 384h8v8h-8z" fill="#ff2637"/><path d="M1416 376h8v8h-8z" fill="#ff282f"/><path d="M1416 384h8v8h-8z" fill="#ff2232"/><path d="M1392 392h8v8h-8z" fill="#ff2846"/><path d="M1392 400h8v8h-8z" fill="#ff214a"/><path d="M1400 392h8v8h-8z" fill="#ff2340"/><path d="M1400 400h8v8h-8z" fill="#ff1c44"/><path d="M1392 408h8v8h-8z" fill="#ff194d"/><path d="M1392 416h8v8h-8z" fill="#ff1251"/><path d="M1400 408h8v8h-8z" fill="#ff1547"/><path d="M1400 416h8v8h-8z" fill="#ff0f4a"/><path d="M1408 392h8v8h-8z" fill="#ff1f3b"/><path d="M1408 400h8v8h-8z" fill="#ff183e"/><path d="M1416 392h8v8h-8z" fill="#ff1b36"/><path d="M1416 400h8v8h-8z" fill="#ff1539"/><path d="M1408 408h8v8h-8z" fill="#ff1242"/><path d="M1408 416h8v8h-8z" fill="#ff0b45"/><path d="M1416 408h8v8h-8z" fill="#ff0f3c"/><path d="M1416 416h8v8h-8z" fill="#ff0840"/><path d="M1424 360h8v8h-8z" fill="#ff3223"/><path d="M1424 368h8v8h-8z" fill="#ff2b26"/><path d="M1432 360h8v8h-8z" fill="#ff2d1f"/><path d="M1432 368h8v8h-8z" fill="#ff2722"/><path d="M1424 376h8v8h-8z" fill="#ff242a"/><path d="M1424 384h8v8h-8z" fill="#ff1e2e"/><path d="M1432 376h8v8h-8z" fill="#ff2026"/><path d="M1432 384h8v8h-8z" fill="#ff1a29"/><path d="M1440 360h8v8h-8z" fill="#ff291b"/><path d="M1440 368h8v8h-8z" fill="#ff231f"/><path d="M1448 360h8v8h-8z" fill="#ff2518"/><path d="M1448 368h8v8h-8z" fill="#ff1f1b"/><path d="M1440 376h8v8h-8z" fill="#ff1d22"/><path d="M1440 384h8v8h-8z" fill="#ff1725"/><path d="M1448 376h8v8h-8z" fill="#ff191f"/><path d="M1448 384h8v8h-8z" fill="#ff1422"/><path d="M1424 392h8v8h-8z" fill="#ff1731"/><path d="M1424 400h8v8h-8z" fill="#ff1134"/><path d="M1432 392h8v8h-8z" fill="#ff142d"/><path d="M1432 400h8v8h-8z" fill="#ff0e30"/><path d="M1424 408h8v8h-8z" fill="#ff0b38"/><path d="M1424 416h8v8h-8z" fill="#ff063b"/><path d="M1432 408h8v8h-8z" fill="#ff0933"/><path d="M1432 416h8v8h-8z" fill="#ff0336"/><path d="M1440 392h8v8h-8z" fill="#ff1129"/><path d="M1440 400h8v8h-8z" fill="#ff0b2c"/><path d="M1448 392h8v8h-8z" fill="#ff0e25"/><path d="M1448 400h8v8h-8z" fill="#ff0928"/><path d="M1440 408h16v16h-16z" fill="#ff032f"/><path d="M1456 360h8v8h-8z" fill="#ff2114"/><path d="M1456 368h8v8h-8z" fill="#ff1c18"/><path d="M1464 360h8v8h-8z" fill="#ff1e12"/><path d="M1464 368h8v8h-8z" fill="#ff1815"/><path d="M1456 376h8v8h-8z" fill="#ff161b"/><path d="M1456 384h8v8h-8z" fill="#ff111e"/><path d="M1464 376h8v8h-8z" fill="#ff1318"/><path d="M1464 384h8v8h-8z" fill="#ff0e1b"/><path d="M1472 360h8v8h-8z" fill="#ff1b0f"/><path d="M1472 368h8v8h-8z" fill="#ff1512"/><path d="M1480 360h8v8h-8z" fill="#ff180c"/><path d="M1480 368h8v8h-8z" fill="#ff130f"/><path d="M1472 376h16v16h-16z" fill="#ff0d15"/><path d="M1456 392h8v8h-8z" fill="#ff0b22"/><path d="M1456 400h8v8h-8z" fill="#ff0625"/><path d="M1464 392h8v8h-8z" fill="#ff091e"/><path d="M1464 400h8v8h-8z" fill="#ff0421"/><path d="M1456 408h16v16h-16z" fill="#ff0028"/><path d="M1472 392h16v16h-16z" fill="#ff031b"/><path d="M1472 408h16v16h-16z" fill="#ff0021"/><path d="M1488 360h16v16h-16z" fill="#ff110a"/><path d="M1488 376h16v16h-16z" fill="#ff0810"/><path d="M1504 360h16v16h-16z" fill="#ff0c06"/><path d="M1504 376h16v16h-16z" fill="#ff040b"/><path d="M1488 392h16v16h-16z" fill="#ff0116"/><path d="M1488 408h16v16h-16z" fill="#ff001b"/><path d="M1504 392h16v16h-16z" fill="#ff0011"/><path d="M1504 408h16v16h-16z" fill="#ff0016"/><path d="M1520 360h16v16h-16z" fill="#ff0802"/><path d="M1520 376h16v16h-16z" fill="#ff0107"/><path d="M1536 360h16v16h-16z" fill="#ff0400"/><path d="M1536 376h16v16h-16z" fill="#ff0004"/><path d="M1520 392h16v16h-16z" fill="#ff000d"/><path d="M1520 408h16v16h-16z" fill="#ff0012"/><path d="M1536 392h16v16h-16z" fill="#ff0009"/><path d="M1536 408h16v16h-16z" fill="#ff000e"/><path d="M1552 360h64v64h-64z" fill="#ff0002"/><path d="M1616 360h64v64h-64z" fill="#ff0000"/><path d="M1080 424h8v8h-8z" fill="#00a2ff"/><path d="M1080 432h8v8h-8z" fill="#0096ff"/><path d="M1088 424h8v8h-8z" fill="#00a1ff"/><path d="M1088 432h8v8h-8z" fill="#0095ff"/><path d="M1096 424h8v8h-8z" fill="#009fff"/><path d="M1096 432h8v8h-8z" fill="#0093ff"/><path d="M1088 440h8v8h-8z" fill="#0089ff"/><path d="M1088 448h8v8h-8z" fill="#007eff"/><path d="M1096 440h8v8h-8z" fill="#0087ff"/><path d="M1096 448h8v8h-8z" fill="#007cff"/><path d="M1088 456h8v8h-8z" fill="#0074ff"/><path d="M1096 456h8v8h-8z" fill="#0072ff"/><path d="M1096 464h8v8h-8z" fill="#0067ff"/><path d="M1096 472h8v8h-8z" fill="#005eff"/><path d="M1104 424h8v8h-8z" fill="#009eff"/><path d="M1104 432h8v8h-8z" fill="#0091ff"/><path d="M1112 424h8v8h-8z" fill="#009cff"/><path d="M1112 432h8v8h-8z" fill="#0090ff"/><path d="M1104 440h8v8h-8z" fill="#0086ff"/><path d="M1104 448h8v8h-8z" fill="#007aff"/><path d="M1112 440h8v8h-8z" fill="#0084ff"/><path d="M1112 448h8v8h-8z" fill="#0078ff"/><path d="M1120 424h8v8h-8z" fill="#009bff"/><path d="M1120 432h8v8h-8z" fill="#008eff"/><path d="M1128 424h8v8h-8z" fill="#0099ff"/><path d="M1128 432h8v8h-8z" fill="#008cff"/><path d="M1120 440h8v8h-8z" fill="#0082ff"/><path d="M1120 448h8v8h-8z" fill="#0076ff"/><path d="M1128 440h8v8h-8z" fill="#0080ff"/><path d="M1128 448h8v8h-8z" fill="#0074ff"/><path d="M1104 456h8v8h-8z" fill="#0070ff"/><path d="M1104 464h8v8h-8z" fill="#0065ff"/><path d="M1112 456h8v8h-8z" fill="#006dff"/><path d="M1112 464h8v8h-8z" fill="#0063ff"/><path d="M1104 472h8v8h-8z" fill="#005bff"/><path d="M1104 480h8v8h-8z" fill="#0052ff"/><path d="M1112 472h8v8h-8z" fill="#0059ff"/><path d="M1112 480h8v8h-8z" fill="#0050ff"/><path d="M1120 456h8v8h-8z" fill="#006bff"/><path d="M1120 464h8v8h-8z" fill="#0061ff"/><path d="M1128 456h8v8h-8z" fill="#0069ff"/><path d="M1128 464h8v8h-8z" fill="#005fff"/><path d="M1120 472h8v8h-8z" fill="#0057ff"/><path d="M1120 480h8v8h-8z" fill="#004dff"/><path d="M1128 472h8v8h-8z" fill="#0054ff"/><path d="M1128 480h8v8h-8z" fill="#004bff"/><path d="M1136 424h8v8h-8z" fill="#0097ff"/><path d="M1136 432h8v8h-8z" fill="#008aff"/><path d="M1144 424h8v8h-8z" fill="#0096ff"/><path d="M1144 432h8v8h-8z" fill="#0088ff"/><path d="M1136 440h8v8h-8z" fill="#007eff"/><path d="M1136 448h8v8h-8z" fill="#0072ff"/><path d="M1144 440h8v8h-8z" fill="#007cff"/><path d="M1144 448h8v8h-8z" fill="#0070ff"/><path d="M1152 424h8v8h-8z" fill="#0094ff"/><path d="M1152 432h8v8h-8z" fill="#0086ff"/><path d="M1160 424h8v8h-8z" fill="#0092ff"/><path d="M1160 432h8v8h-8z" fill="#0084ff"/><path d="M1152 440h8v8h-8z" fill="#007aff"/><path d="M1152 448h8v8h-8z" fill="#006eff"/><path d="M1160 440h8v8h-8z" fill="#0078ff"/><path d="M1160 448h8v8h-8z" fill="#006bff"/><path d="M1136 456h8v8h-8z" fill="#0067ff"/><path d="M1136 464h8v8h-8z" fill="#005cff"/><path d="M1144 456h8v8h-8z" fill="#0065ff"/><path d="M1144 464h8v8h-8z" fill="#005aff"/><path d="M1136 472h8v8h-8z" fill="#0052ff"/><path d="M1136 480h8v8h-8z" fill="#0048ff"/><path d="M1144 472h8v8h-8z" fill="#004fff"/><path d="M1144 480h8v8h-8z" fill="#0046ff"/><path d="M1152 456h8v8h-8z" fill="#0062ff"/><path d="M1152 464h8v8h-8z" fill="#0057ff"/><path d="M1160 456h8v8h-8z" fill="#0060ff"/><path d="M1160 464h8v8h-8z" fill="#0055ff"/><path d="M1152 472h8v8h-8z" fill="#004dff"/><path d="M1152 480h8v8h-8z" fill="#0043ff"/><path d="M1160 472h8v8h-8z" fill="#004aff"/><path d="M1160 480h8v8h-8z" fill="#0040ff"/><path d="M1168 424h8v8h-8z" fill="#0090ff"/><path d="M1168 432h8v8h-8z" fill="#0082ff"/><path d="M1176 424h8v8h-8z" fill="#008eff"/><path d="M1176 432h8v8h-8z" fill="#0080ff"/><path d="M1168 440h8v8h-8z" fill="#0075ff"/><path d="M1168 448h8v8h-8z" fill="#0069ff"/><path d="M1176 440h8v8h-8z" fill="#0073ff"/><path d="M1176 448h8v8h-8z" fill="#0066ff"/><path d="M1184 424h8v8h-8z" fill="#008cff"/><path d="M1184 432h8v8h-8z" fill="#007eff"/><path d="M1192 424h8v8h-8z" fill="#008aff"/><path d="M1192 432h8v8h-8z" fill="#007bff"/><path d="M1184 440h8v8h-8z" fill="#0070ff"/><path d="M1184 448h8v8h-8z" fill="#0064ff"/><path d="M1192 440h8v8h-8z" fill="#006eff"/><path d="M1192 448h8v8h-8z" fill="#0161ff"/><path d="M1168 456h8v8h-8z" fill="#005dff"/><path d="M1168 464h8v8h-8z" fill="#0052ff"/><path d="M1176 456h8v8h-8z" fill="#005bff"/><path d="M1176 464h8v8h-8z" fill="#004fff"/><path d="M1168 472h8v8h-8z" fill="#0047ff"/><path d="M1168 480h8v8h-8z" fill="#003dff"/><path d="M1176 472h8v8h-8z" fill="#0045ff"/><path d="M1176 480h8v8h-8z" fill="#003aff"/><path d="M1184 456h8v8h-8z" fill="#0058ff"/><path d="M1184 464h8v8h-8z" fill="#004cff"/><path d="M1192 456h8v8h-8z" fill="#0355ff"/><path d="M1192 464h8v8h-8z" fill="#084aff"/><path d="M1184 472h8v8h-8z" fill="#0142ff"/><path d="M1184 480h8v8h-8z" fill="#0337ff"/><path d="M1192 472h8v8h-8z" fill="#0d3fff"/><path d="M1192 480h8v8h-8z" fill="#1134ff"/><path d="M1200 424h8v8h-8z" fill="#0187ff"/><path d="M1200 432h8v8h-8z" fill="#0379ff"/><path d="M1208 424h8v8h-8z" fill="#0e85ff"/><path d="M1208 432h8v8h-8z" fill="#1476ff"/><path d="M1200 440h8v8h-8z" fill="#086bff"/><path d="M1200 448h8v8h-8z" fill="#0d5eff"/><path d="M1208 440h8v8h-8z" fill="#1969ff"/><path d="M1208 448h8v8h-8z" fill="#1e5bff"/><path d="M1216 424h8v8h-8z" fill="#2183ff"/><path d="M1216 432h8v8h-8z" fill="#2674ff"/><path d="M1224 424h8v8h-8z" fill="#3580ff"/><path d="M1224 432h8v8h-8z" fill="#3971ff"/><path d="M1216 440h8v8h-8z" fill="#2b66ff"/><path d="M1216 448h8v8h-8z" fill="#3059ff"/><path d="M1224 440h8v8h-8z" fill="#3e63ff"/><path d="M1224 448h8v8h-8z" fill="#4255ff"/><path d="M1200 456h8v8h-8z" fill="#1252ff"/><path d="M1200 464h8v8h-8z" fill="#1747ff"/><path d="M1208 456h8v8h-8z" fill="#234fff"/><path d="M1208 464h8v8h-8z" fill="#2843ff"/><path d="M1200 472h8v8h-8z" fill="#1c3cff"/><path d="M1200 480h8v8h-8z" fill="#2031ff"/><path d="M1208 472h8v8h-8z" fill="#2c38ff"/><path d="M1208 480h8v8h-8z" fill="#302eff"/><path d="M1216 456h8v8h-8z" fill="#344cff"/><path d="M1216 464h8v8h-8z" fill="#3840ff"/><path d="M1224 456h8v8h-8z" fill="#4649ff"/><path d="M1224 464h8v8h-8z" fill="#4a3dff"/><path d="M1216 472h8v8h-8z" fill="#3c35ff"/><path d="M1216 480h8v8h-8z" fill="#402aff"/><path d="M1224 472h8v8h-8z" fill="#4d32ff"/><path d="M1224 480h8v8h-8z" fill="#5127ff"/><path d="M1232 424h8v8h-8z" fill="#497dff"/><path d="M1232 432h8v8h-8z" fill="#4d6eff"/><path d="M1240 424h8v8h-8z" fill="#5e7bff"/><path d="M1240 432h8v8h-8z" fill="#626bff"/><path d="M1232 440h8v8h-8z" fill="#5160ff"/><path d="M1232 448h8v8h-8z" fill="#5552ff"/><path d="M1240 440h8v8h-8z" fill="#655dff"/><path d="M1240 448h8v8h-8z" fill="#694fff"/><path d="M1248 424h8v8h-8z" fill="#7478ff"/><path d="M1248 432h8v8h-8z" fill="#7768ff"/><path d="M1256 424h8v8h-8z" fill="#8c75ff"/><path d="M1256 432h8v8h-8z" fill="#8e65ff"/><path d="M1248 440h8v8h-8z" fill="#7a59ff"/><path d="M1248 448h8v8h-8z" fill="#7d4cff"/><path d="M1256 440h8v8h-8z" fill="#9056ff"/><path d="M1256 448h8v8h-8z" fill="#9248ff"/><path d="M1232 456h8v8h-8z" fill="#5845ff"/><path d="M1232 464h8v8h-8z" fill="#5c39ff"/><path d="M1240 456h8v8h-8z" fill="#6c42ff"/><path d="M1240 464h8v8h-8z" fill="#6e36ff"/><path d="M1232 472h8v8h-8z" fill="#5f2eff"/><path d="M1232 480h8v8h-8z" fill="#6223ff"/><path d="M1240 472h8v8h-8z" fill="#712aff"/><path d="M1240 480h8v8h-8z" fill="#741fff"/><path d="M1248 456h8v8h-8z" fill="#7f3eff"/><path d="M1248 464h8v8h-8z" fill="#8232ff"/><path d="M1256 456h8v8h-8z" fill="#943bff"/><path d="M1256 464h8v8h-8z" fill="#962eff"/><path d="M1248 472h8v8h-8z" fill="#8427ff"/><path d="M1248 480h8v8h-8z" fill="#861cff"/><path d="M1256 472h8v8h-8z" fill="#9723ff"/><path d="M1256 480h8v8h-8z" fill="#9917ff"/><path d="M1264 424h8v8h-8z" fill="#a472ff"/><path d="M1264 432h8v8h-8z" fill="#a562ff"/><path d="M1272 424h8v8h-8z" fill="#bd6fff"/><path d="M1272 432h8v8h-8z" fill="#be5eff"/><path d="M1264 440h8v8h-8z" fill="#a752ff"/><path d="M1264 448h8v8h-8z" fill="#a844ff"/><path d="M1272 440h8v8h-8z" fill="#be4fff"/><path d="M1272 448h8v8h-8z" fill="#bf40ff"/><path d="M1280 424h8v8h-8z" fill="#d76bff"/><path d="M1280 432h8v8h-8z" fill="#d75aff"/><path d="M1288 424h8v8h-8z" fill="#f368ff"/><path d="M1288 432h8v8h-8z" fill="#f257ff"/><path d="M1280 440h8v8h-8z" fill="#d74bff"/><path d="M1280 448h8v8h-8z" fill="#d73cff"/><path d="M1288 440h8v8h-8z" fill="#f147ff"/><path d="M1288 448h8v8h-8z" fill="#f038ff"/><path d="M1264 456h8v8h-8z" fill="#a937ff"/><path d="M1264 464h8v8h-8z" fill="#ab2aff"/><path d="M1272 456h8v8h-8z" fill="#c033ff"/><path d="M1272 464h8v8h-8z" fill="#c026ff"/><path d="M1264 472h8v8h-8z" fill="#ac1fff"/><path d="M1264 480h8v8h-8z" fill="#ad13ff"/><path d="M1272 472h8v8h-8z" fill="#c11aff"/><path d="M1272 480h8v8h-8z" fill="#c10fff"/><path d="M1280 456h8v8h-8z" fill="#d72fff"/><path d="M1280 464h8v8h-8z" fill="#d722ff"/><path d="M1288 456h8v8h-8z" fill="#ef2aff"/><path d="M1288 464h8v8h-8z" fill="#ee1dff"/><path d="M1280 472h8v8h-8z" fill="#d616ff"/><path d="M1280 480h8v8h-8z" fill="#d60bff"/><path d="M1288 472h8v8h-8z" fill="#ed11ff"/><path d="M1288 480h8v8h-8z" fill="#ec06ff"/><path d="M1296 424h8v8h-8z" fill="#ff5eef"/><path d="M1296 432h8v8h-8z" fill="#ff4ef1"/><path d="M1304 424h8v8h-8z" fill="#ff51d7"/><path d="M1304 432h8v8h-8z" fill="#ff43da"/><path d="M1296 440h8v8h-8z" fill="#ff40f3"/><path d="M1296 448h8v8h-8z" fill="#ff32f5"/><path d="M1304 440h8v8h-8z" fill="#ff36dc"/><path d="M1304 448h8v8h-8z" fill="#ff29de"/><path d="M1312 424h8v8h-8z" fill="#ff46c2"/><path d="M1312 432h8v8h-8z" fill="#ff39c5"/><path d="M1320 424h8v8h-8z" fill="#ff3db1"/><path d="M1320 432h8v8h-8z" fill="#ff31b4"/><path d="M1312 440h8v8h-8z" fill="#ff2dc8"/><path d="M1312 448h8v8h-8z" fill="#ff22cb"/><path d="M1320 440h8v8h-8z" fill="#ff26b7"/><path d="M1320 448h8v8h-8z" fill="#ff1bb9"/><path d="M1296 456h8v8h-8z" fill="#ff25f6"/><path d="M1296 464h8v8h-8z" fill="#fe18f8"/><path d="M1304 456h8v8h-8z" fill="#ff1de0"/><path d="M1304 464h8v8h-8z" fill="#ff12e2"/><path d="M1296 472h8v8h-8z" fill="#fe0cf9"/><path d="M1296 480h8v8h-8z" fill="#fe02fa"/><path d="M1304 472h8v8h-8z" fill="#ff07e4"/><path d="M1304 480h8v8h-8z" fill="#ff00e6"/><path d="M1312 456h8v8h-8z" fill="#ff17cd"/><path d="M1312 464h8v8h-8z" fill="#ff0ccf"/><path d="M1320 456h8v8h-8z" fill="#ff11bc"/><path d="M1320 464h8v8h-8z" fill="#ff07bf"/><path d="M1312 472h8v8h-8z" fill="#ff03d2"/><path d="M1312 480h8v8h-8z" fill="#ff00d4"/><path d="M1320 472h8v8h-8z" fill="#ff00c1"/><path d="M1320 480h8v8h-8z" fill="#ff00c3"/><path d="M1328 424h8v8h-8z" fill="#ff34a1"/><path d="M1328 432h8v8h-8z" fill="#ff2aa4"/><path d="M1336 424h8v8h-8z" fill="#ff2d93"/><path d="M1336 432h8v8h-8z" fill="#ff2397"/><path d="M1328 440h8v8h-8z" fill="#ff1fa7"/><path d="M1328 448h8v8h-8z" fill="#ff15aa"/><path d="M1336 440h8v8h-8z" fill="#ff1a9a"/><path d="M1336 448h8v8h-8z" fill="#ff109d"/><path d="M1344 424h8v8h-8z" fill="#ff2787"/><path d="M1344 432h8v8h-8z" fill="#ff1d8b"/><path d="M1352 424h8v8h-8z" fill="#ff217c"/><path d="M1352 432h8v8h-8z" fill="#ff1880"/><path d="M1344 440h8v8h-8z" fill="#ff148e"/><path d="M1344 448h8v8h-8z" fill="#ff0c91"/><path d="M1352 440h8v8h-8z" fill="#ff1083"/><path d="M1352 448h8v8h-8z" fill="#ff0886"/><path d="M1328 456h8v8h-8z" fill="#ff0cad"/><path d="M1328 464h8v8h-8z" fill="#ff03b0"/><path d="M1336 456h8v8h-8z" fill="#ff08a0"/><path d="M1336 464h8v8h-8z" fill="#ff01a3"/><path d="M1328 472h8v8h-8z" fill="#ff00b2"/><path d="M1328 480h8v8h-8z" fill="#ff00b5"/><path d="M1336 472h8v8h-8z" fill="#ff00a5"/><path d="M1336 480h8v8h-8z" fill="#ff00a8"/><path d="M1344 456h8v8h-8z" fill="#ff0494"/><path d="M1344 464h8v8h-8z" fill="#ff0097"/><path d="M1352 456h8v8h-8z" fill="#ff0189"/><path d="M1352 464h8v8h-8z" fill="#ff008c"/><path d="M1344 472h8v8h-8z" fill="#ff0099"/><path d="M1344 480h8v8h-8z" fill="#ff009c"/><path d="M1352 472h8v8h-8z" fill="#ff008f"/><path d="M1352 480h8v8h-8z" fill="#ff0092"/><path d="M1360 424h8v8h-8z" fill="#ff1c73"/><path d="M1360 432h8v8h-8z" fill="#ff1476"/><path d="M1368 424h8v8h-8z" fill="#ff176a"/><path d="M1368 432h8v8h-8z" fill="#ff0f6d"/><path d="M1360 440h8v8h-8z" fill="#ff0c79"/><path d="M1360 448h8v8h-8z" fill="#ff047c"/><path d="M1368 440h8v8h-8z" fill="#ff0870"/><path d="M1368 448h8v8h-8z" fill="#ff0174"/><path d="M1376 424h8v8h-8z" fill="#ff1362"/><path d="M1376 432h8v8h-8z" fill="#ff0c65"/><path d="M1384 424h8v8h-8z" fill="#ff0f5b"/><path d="M1384 432h8v8h-8z" fill="#ff085e"/><path d="M1376 440h8v8h-8z" fill="#ff0568"/><path d="M1376 448h8v8h-8z" fill="#ff006b"/><path d="M1384 440h8v8h-8z" fill="#ff0261"/><path d="M1384 448h8v8h-8z" fill="#ff0064"/><path d="M1360 456h8v8h-8z" fill="#ff007f"/><path d="M1360 464h8v8h-8z" fill="#ff0082"/><path d="M1368 456h8v8h-8z" fill="#ff0077"/><path d="M1368 464h8v8h-8z" fill="#ff0079"/><path d="M1360 472h8v8h-8z" fill="#ff0085"/><path d="M1360 480h8v8h-8z" fill="#ff0088"/><path d="M1368 472h8v8h-8z" fill="#ff007c"/><path d="M1368 480h8v8h-8z" fill="#ff007f"/><path d="M1376 456h8v8h-8z" fill="#ff006e"/><path d="M1376 464h8v8h-8z" fill="#ff0071"/><path d="M1384 456h8v8h-8z" fill="#ff0067"/><path d="M1384 464h8v8h-8z" fill="#ff006a"/><path d="M1376 472h8v8h-8z" fill="#ff0074"/><path d="M1376 480h8v8h-8z" fill="#ff0077"/><path d="M1384 472h8v8h-8z" fill="#ff006d"/><path d="M1384 480h8v8h-8z" fill="#ff0070"/><path d="M1392 424h8v8h-8z" fill="#ff0c54"/><path d="M1392 432h8v8h-8z" fill="#ff0557"/><path d="M1400 424h8v8h-8z" fill="#ff084e"/><path d="M1400 432h8v8h-8z" fill="#ff0251"/><path d="M1392 440h8v8h-8z" fill="#ff005a"/><path d="M1392 448h8v8h-8z" fill="#ff005d"/><path d="M1400 440h8v8h-8z" fill="#ff0054"/><path d="M1400 448h8v8h-8z" fill="#ff0057"/><path d="M1408 424h8v8h-8z" fill="#ff0548"/><path d="M1408 432h8v8h-8z" fill="#ff004b"/><path d="M1416 424h8v8h-8z" fill="#ff0343"/><path d="M1416 432h8v8h-8z" fill="#ff0046"/><path d="M1408 440h8v8h-8z" fill="#ff004e"/><path d="M1408 448h8v8h-8z" fill="#ff0051"/><path d="M1416 440h8v8h-8z" fill="#ff0049"/><path d="M1416 448h8v8h-8z" fill="#ff004c"/><path d="M1392 456h8v8h-8z" fill="#ff0060"/><path d="M1392 464h8v8h-8z" fill="#ff0063"/><path d="M1400 456h8v8h-8z" fill="#ff005a"/><path d="M1400 464h8v8h-8z" fill="#ff005d"/><path d="M1392 472h8v8h-8z" fill="#ff0066"/><path d="M1392 480h8v8h-8z" fill="#ff0069"/><path d="M1400 472h8v8h-8z" fill="#ff0060"/><path d="M1400 480h8v8h-8z" fill="#ff0062"/><path d="M1408 456h8v8h-8z" fill="#ff0054"/><path d="M1408 464h8v8h-8z" fill="#ff0057"/><path d="M1416 456h8v8h-8z" fill="#ff004f"/><path d="M1416 464h8v8h-8z" fill="#ff0052"/><path d="M1408 472h8v8h-8z" fill="#ff005a"/><path d="M1408 480h8v8h-8z" fill="#ff005c"/><path d="M1416 472h8v8h-8z" fill="#ff0054"/><path d="M1416 480h8v8h-8z" fill="#ff0057"/><path d="M1424 424h8v8h-8z" fill="#ff013e"/><path d="M1424 432h8v8h-8z" fill="#ff0041"/><path d="M1432 424h8v8h-8z" fill="#ff0039"/><path d="M1432 432h8v8h-8z" fill="#ff003c"/><path d="M1424 440h8v8h-8z" fill="#ff0044"/><path d="M1424 448h8v8h-8z" fill="#ff0047"/><path d="M1432 440h8v8h-8z" fill="#ff003f"/><path d="M1432 448h8v8h-8z" fill="#ff0042"/><path d="M1440 424h16v16h-16z" fill="#ff0035"/><path d="M1440 440h16v16h-16z" fill="#ff003a"/><path d="M1424 456h8v8h-8z" fill="#ff004a"/><path d="M1424 464h8v8h-8z" fill="#ff004c"/><path d="M1432 456h8v8h-8z" fill="#ff0045"/><path d="M1432 464h8v8h-8z" fill="#ff0048"/><path d="M1424 472h16v16h-16z" fill="#ff004e"/><path d="M1440 456h16v16h-16z" fill="#ff0040"/><path d="M1440 472h16v16h-16z" fill="#ff0045"/><path d="M1456 424h16v16h-16z" fill="#ff002d"/><path d="M1456 440h16v16h-16z" fill="#ff0033"/><path d="M1472 424h16v16h-16z" fill="#ff0027"/><path d="M1472 440h16v16h-16z" fill="#ff002c"/><path d="M1456 456h16v16h-16z" fill="#ff0038"/><path d="M1456 472h16v16h-16z" fill="#ff003d"/><path d="M1472 456h16v16h-16z" fill="#ff0031"/><path d="M1472 472h16v16h-16z" fill="#ff0036"/><path d="M1488 424h16v16h-16z" fill="#ff0021"/><path d="M1488 440h16v16h-16z" fill="#ff0026"/><path d="M1504 424h16v16h-16z" fill="#ff001c"/><path d="M1504 440h16v16h-16z" fill="#ff0020"/><path d="M1488 456h16v16h-16z" fill="#ff002b"/><path d="M1488 472h16v16h-16z" fill="#ff0030"/><path d="M1504 456h16v16h-16z" fill="#ff0025"/><path d="M1520 424h16v16h-16z" fill="#ff0017"/><path d="M1520 440h16v16h-16z" fill="#ff001c"/><path d="M1536 424h16v16h-16z" fill="#ff0012"/><path d="M1536 440h16v16h-16z" fill="#ff0017"/><path d="M1520 456h16v16h-16z" fill="#ff0020"/><path d="M1552 424h16v16h-16z" fill="#ff000f"/><path d="M1552 440h16v16h-16z" fill="#ff0013"/><path d="M1568 424h16v16h-16z" fill="#ff000b"/><path d="M1568 440h16v16h-16z" fill="#ff000f"/><path d="M1584 424h16v16h-16z" fill="#ff0008"/><path d="M1600 424h16v16h-16z" fill="#ff0005"/><path d="M1616 424h32v32h-32z" fill="#ff0003"/><path d="M1104 488h8v8h-8z" fill="#0049ff"/><path d="M1104 496h8v8h-8z" fill="#0040ff"/><path d="M1112 488h8v8h-8z" fill="#0046ff"/><path d="M1112 496h8v8h-8z" fill="#003eff"/><path d="M1112 504h8v8h-8z" fill="#0035ff"/><path d="M1112 512h8v8h-8z" fill="#002dff"/><path d="M1120 488h8v8h-8z" fill="#0044ff"/><path d="M1120 496h8v8h-8z" fill="#003bff"/><path d="M1128 488h8v8h-8z" fill="#0041ff"/><path d="M1128 496h8v8h-8z" fill="#0038ff"/><path d="M1120 504h8v8h-8z" fill="#0032ff"/><path d="M1120 512h8v8h-8z" fill="#002aff"/><path d="M1128 504h8v8h-8z" fill="#0030ff"/><path d="M1128 512h8v8h-8z" fill="#0028ff"/><path d="M1120 520h8v8h-8z" fill="#0022ff"/><path d="M1120 528h8v8h-8z" fill="#001bff"/><path d="M1128 520h8v8h-8z" fill="#0020ff"/><path d="M1128 528h8v8h-8z" fill="#0018ff"/><path d="M1128 536h8v8h-8z" fill="#0011ff"/><path d="M1128 544h8v8h-8z" fill="#000aff"/><path d="M1136 488h8v8h-8z" fill="#003fff"/><path d="M1136 496h8v8h-8z" fill="#0036ff"/><path d="M1144 488h8v8h-8z" fill="#003cff"/><path d="M1144 496h8v8h-8z" fill="#0033ff"/><path d="M1136 504h8v8h-8z" fill="#002dff"/><path d="M1136 512h8v8h-8z" fill="#0025ff"/><path d="M1144 504h8v8h-8z" fill="#002aff"/><path d="M1144 512h8v8h-8z" fill="#0022ff"/><path d="M1152 488h8v8h-8z" fill="#0039ff"/><path d="M1152 496h8v8h-8z" fill="#0030ff"/><path d="M1160 488h8v8h-8z" fill="#0036ff"/><path d="M1160 496h8v8h-8z" fill="#002dff"/><path d="M1152 504h8v8h-8z" fill="#0027ff"/><path d="M1152 512h8v8h-8z" fill="#001fff"/><path d="M1160 504h8v8h-8z" fill="#0024ff"/><path d="M1160 512h8v8h-8z" fill="#001cff"/><path d="M1136 520h8v8h-8z" fill="#001dff"/><path d="M1136 528h8v8h-8z" fill="#0015ff"/><path d="M1144 520h8v8h-8z" fill="#001aff"/><path d="M1144 528h8v8h-8z" fill="#0012ff"/><path d="M1136 536h8v8h-8z" fill="#000eff"/><path d="M1136 544h8v8h-8z" fill="#0007ff"/><path d="M1144 536h8v8h-8z" fill="#000bff"/><path d="M1144 544h8v8h-8z" fill="#0004ff"/><path d="M1152 520h8v8h-8z" fill="#0017ff"/><path d="M1152 528h8v8h-8z" fill="#000fff"/><path d="M1160 520h8v8h-8z" fill="#0014ff"/><path d="M1160 528h8v8h-8z" fill="#000cff"/><path d="M1152 536h16v16h-16z" fill="#0003ff"/><path d="M1168 488h8v8h-8z" fill="#0034ff"/><path d="M1168 496h8v8h-8z" fill="#002aff"/><path d="M1176 488h8v8h-8z" fill="#0031ff"/><path d="M1176 496h8v8h-8z" fill="#0127ff"/><path d="M1168 504h8v8h-8z" fill="#0021ff"/><path d="M1168 512h8v8h-8z" fill="#0019ff"/><path d="M1176 504h8v8h-8z" fill="#031eff"/><path d="M1176 512h8v8h-8z" fill="#0716ff"/><path d="M1184 488h8v8h-8z" fill="#072dff"/><path d="M1184 496h8v8h-8z" fill="#0c24ff"/><path d="M1192 488h8v8h-8z" fill="#162aff"/><path d="M1192 496h8v8h-8z" fill="#1a21ff"/><path d="M1184 504h8v8h-8z" fill="#101bff"/><path d="M1184 512h8v8h-8z" fill="#1513ff"/><path d="M1192 504h8v8h-8z" fill="#1e18ff"/><path d="M1192 512h8v8h-8z" fill="#220fff"/><path d="M1168 520h8v8h-8z" fill="#0111ff"/><path d="M1168 528h8v8h-8z" fill="#0409ff"/><path d="M1176 520h8v8h-8z" fill="#0c0eff"/><path d="M1176 528h8v8h-8z" fill="#1006ff"/><path d="M1168 536h8v8h-8z" fill="#0702ff"/><path d="M1168 544h8v8h-8z" fill="#0b00ff"/><path d="M1176 536h8v8h-8z" fill="#1300ff"/><path d="M1176 544h8v8h-8z" fill="#1700ff"/><path d="M1184 520h8v8h-8z" fill="#190aff"/><path d="M1184 528h8v8h-8z" fill="#1c03ff"/><path d="M1192 520h8v8h-8z" fill="#2607ff"/><path d="M1192 528h8v8h-8z" fill="#2a01ff"/><path d="M1184 536h8v8h-8z" fill="#2000ff"/><path d="M1184 544h8v8h-8z" fill="#2400ff"/><path d="M1192 536h8v8h-8z" fill="#2d00ff"/><path d="M1192 544h8v8h-8z" fill="#3000ff"/><path d="M1200 488h8v8h-8z" fill="#2527ff"/><path d="M1200 496h8v8h-8z" fill="#291eff"/><path d="M1208 488h8v8h-8z" fill="#3424ff"/><path d="M1208 496h8v8h-8z" fill="#381aff"/><path d="M1200 504h8v8h-8z" fill="#2d14ff"/><path d="M1200 512h8v8h-8z" fill="#300cff"/><path d="M1208 504h8v8h-8z" fill="#3b11ff"/><path d="M1208 512h8v8h-8z" fill="#3f08ff"/><path d="M1216 488h8v8h-8z" fill="#4420ff"/><path d="M1216 496h8v8h-8z" fill="#4717ff"/><path d="M1224 488h8v8h-8z" fill="#541dff"/><path d="M1224 496h8v8h-8z" fill="#5713ff"/><path d="M1216 504h8v8h-8z" fill="#4a0dff"/><path d="M1216 512h8v8h-8z" fill="#4d05ff"/><path d="M1224 504h8v8h-8z" fill="#5a0aff"/><path d="M1224 512h8v8h-8z" fill="#5d02ff"/><path d="M1200 520h8v8h-8z" fill="#3403ff"/><path d="M1200 528h8v8h-8z" fill="#3700ff"/><path d="M1208 520h8v8h-8z" fill="#4201ff"/><path d="M1208 528h8v8h-8z" fill="#4500ff"/><path d="M1200 536h8v8h-8z" fill="#3a00ff"/><path d="M1200 544h8v8h-8z" fill="#3d00ff"/><path d="M1208 536h8v8h-8z" fill="#4800ff"/><path d="M1208 544h8v8h-8z" fill="#4b00ff"/><path d="M1216 520h8v8h-8z" fill="#5000ff"/><path d="M1216 528h8v8h-8z" fill="#5300ff"/><path d="M1224 520h8v8h-8z" fill="#5f00ff"/><path d="M1224 528h8v8h-8z" fill="#6200ff"/><path d="M1216 536h8v8h-8z" fill="#5600ff"/><path d="M1216 544h8v8h-8z" fill="#5900ff"/><path d="M1224 536h8v8h-8z" fill="#6400ff"/><path d="M1224 544h8v8h-8z" fill="#6700ff"/><path d="M1232 488h8v8h-8z" fill="#6519ff"/><path d="M1232 496h8v8h-8z" fill="#670fff"/><path d="M1240 488h8v8h-8z" fill="#7615ff"/><path d="M1240 496h8v8h-8z" fill="#780bff"/><path d="M1232 504h8v8h-8z" fill="#6a06ff"/><path d="M1232 512h8v8h-8z" fill="#6d00ff"/><path d="M1240 504h8v8h-8z" fill="#7b02ff"/><path d="M1240 512h8v8h-8z" fill="#7d00ff"/><path d="M1248 488h8v8h-8z" fill="#8811ff"/><path d="M1248 496h8v8h-8z" fill="#8a07ff"/><path d="M1256 488h8v8h-8z" fill="#9b0dff"/><path d="M1256 496h8v8h-8z" fill="#9c03ff"/><path d="M1248 504h8v8h-8z" fill="#8c00ff"/><path d="M1248 512h8v8h-8z" fill="#8d00ff"/><path d="M1256 504h8v8h-8z" fill="#9d00ff"/><path d="M1256 512h8v8h-8z" fill="#9f00ff"/><path d="M1232 520h8v8h-8z" fill="#6f00ff"/><path d="M1232 528h8v8h-8z" fill="#7100ff"/><path d="M1240 520h8v8h-8z" fill="#7f00ff"/><path d="M1240 528h8v8h-8z" fill="#8100ff"/><path d="M1232 536h8v8h-8z" fill="#7300ff"/><path d="M1232 544h8v8h-8z" fill="#7500ff"/><path d="M1240 536h8v8h-8z" fill="#8200ff"/><path d="M1240 544h8v8h-8z" fill="#8400ff"/><path d="M1248 520h8v8h-8z" fill="#8f00ff"/><path d="M1248 528h8v8h-8z" fill="#9100ff"/><path d="M1256 520h8v8h-8z" fill="#a000ff"/><path d="M1256 528h8v8h-8z" fill="#a100ff"/><path d="M1248 536h8v8h-8z" fill="#9200ff"/><path d="M1248 544h8v8h-8z" fill="#9400ff"/><path d="M1256 536h8v8h-8z" fill="#a200ff"/><path d="M1256 544h8v8h-8z" fill="#a300ff"/><path d="M1264 488h8v8h-8z" fill="#ae09ff"/><path d="M1264 496h8v8h-8z" fill="#af01ff"/><path d="M1272 488h8v8h-8z" fill="#c204ff"/><path d="M1272 496h8v8h-8z" fill="#c200ff"/><path d="M1264 504h8v8h-8z" fill="#b000ff"/><path d="M1264 512h8v8h-8z" fill="#b100ff"/><path d="M1272 504h8v8h-8z" fill="#c300ff"/><path d="M1272 512h8v8h-8z" fill="#c300ff"/><path d="M1280 488h8v8h-8z" fill="#d601ff"/><path d="M1280 496h8v8h-8z" fill="#d600ff"/><path d="M1288 488h8v8h-8z" fill="#ec00ff"/><path d="M1288 496h8v8h-8z" fill="#eb00ff"/><path d="M1280 504h8v8h-8z" fill="#d600ff"/><path d="M1280 512h8v8h-8z" fill="#d600ff"/><path d="M1288 504h8v8h-8z" fill="#ea00ff"/><path d="M1288 512h8v8h-8z" fill="#ea00ff"/><path d="M1264 520h8v8h-8z" fill="#b100ff"/><path d="M1264 528h8v8h-8z" fill="#b200ff"/><path d="M1272 520h8v8h-8z" fill="#c300ff"/><path d="M1272 528h8v8h-8z" fill="#c400ff"/><path d="M1264 536h8v8h-8z" fill="#b300ff"/><path d="M1264 544h8v8h-8z" fill="#b400ff"/><path d="M1272 536h8v8h-8z" fill="#c400ff"/><path d="M1272 544h8v8h-8z" fill="#c400ff"/><path d="M1280 520h8v8h-8z" fill="#d600ff"/><path d="M1280 528h8v8h-8z" fill="#d600ff"/><path d="M1288 520h8v8h-8z" fill="#e900ff"/><path d="M1288 528h8v8h-8z" fill="#e800ff"/><path d="M1280 536h8v8h-8z" fill="#d600ff"/><path d="M1280 544h8v8h-8z" fill="#d600ff"/><path d="M1288 536h8v8h-8z" fill="#e800ff"/><path d="M1288 544h8v8h-8z" fill="#e700ff"/><path d="M1296 488h8v8h-8z" fill="#fd00fb"/><path d="M1296 496h8v8h-8z" fill="#fd00fc"/><path d="M1304 488h8v8h-8z" fill="#ff00e8"/><path d="M1304 496h8v8h-8z" fill="#ff00ea"/><path d="M1296 504h8v8h-8z" fill="#fc00fc"/><path d="M1296 512h8v8h-8z" fill="#fc00fd"/><path d="M1304 504h8v8h-8z" fill="#ff00eb"/><path d="M1304 512h8v8h-8z" fill="#ff00ed"/><path d="M1312 488h8v8h-8z" fill="#ff00d6"/><path d="M1312 496h8v8h-8z" fill="#ff00d8"/><path d="M1320 488h8v8h-8z" fill="#ff00c6"/><path d="M1320 496h8v8h-8z" fill="#ff00c8"/><path d="M1312 504h8v8h-8z" fill="#ff00da"/><path d="M1312 512h8v8h-8z" fill="#ff00db"/><path d="M1320 504h8v8h-8z" fill="#ff00ca"/><path d="M1320 512h8v8h-8z" fill="#ff00cc"/><path d="M1296 520h8v8h-8z" fill="#fb00fe"/><path d="M1296 528h8v8h-8z" fill="#fb00fe"/><path d="M1304 520h8v8h-8z" fill="#ff00ee"/><path d="M1304 528h8v8h-8z" fill="#ff00f0"/><path d="M1296 536h8v8h-8z" fill="#fa00fe"/><path d="M1296 544h8v8h-8z" fill="#f900ff"/><path d="M1304 536h8v8h-8z" fill="#ff00f1"/><path d="M1312 520h8v8h-8z" fill="#ff00dd"/><path d="M1312 528h8v8h-8z" fill="#ff00df"/><path d="M1320 520h8v8h-8z" fill="#ff00ce"/><path d="M1320 528h8v8h-8z" fill="#ff00d0"/><path d="M1312 536h8v8h-8z" fill="#ff00e0"/><path d="M1328 488h8v8h-8z" fill="#ff00b7"/><path d="M1328 496h8v8h-8z" fill="#ff00ba"/><path d="M1336 488h8v8h-8z" fill="#ff00aa"/><path d="M1336 496h8v8h-8z" fill="#ff00ad"/><path d="M1328 504h8v8h-8z" fill="#ff00bc"/><path d="M1328 512h8v8h-8z" fill="#ff00be"/><path d="M1336 504h8v8h-8z" fill="#ff00af"/><path d="M1336 512h8v8h-8z" fill="#ff00b1"/><path d="M1344 488h8v8h-8z" fill="#ff009f"/><path d="M1344 496h8v8h-8z" fill="#ff00a1"/><path d="M1352 488h8v8h-8z" fill="#ff0094"/><path d="M1352 496h8v8h-8z" fill="#ff0097"/><path d="M1344 504h8v8h-8z" fill="#ff00a4"/><path d="M1344 512h8v8h-8z" fill="#ff00a6"/><path d="M1352 504h8v8h-8z" fill="#ff0099"/><path d="M1352 512h8v8h-8z" fill="#ff009c"/><path d="M1328 520h8v8h-8z" fill="#ff00c0"/><path d="M1328 528h8v8h-8z" fill="#ff00c2"/><path d="M1336 520h8v8h-8z" fill="#ff00b4"/><path d="M1336 528h8v8h-8z" fill="#ff00b6"/><path d="M1344 520h8v8h-8z" fill="#ff00a8"/><path d="M1352 520h8v8h-8z" fill="#ff009e"/><path d="M1360 488h8v8h-8z" fill="#ff008b"/><path d="M1360 496h8v8h-8z" fill="#ff008d"/><path d="M1368 488h8v8h-8z" fill="#ff0082"/><path d="M1368 496h8v8h-8z" fill="#ff0084"/><path d="M1360 504h8v8h-8z" fill="#ff0090"/><path d="M1360 512h8v8h-8z" fill="#ff0092"/><path d="M1368 504h8v8h-8z" fill="#ff0087"/><path d="M1368 512h8v8h-8z" fill="#ff0089"/><path d="M1376 488h8v8h-8z" fill="#ff007a"/><path d="M1376 496h8v8h-8z" fill="#ff007c"/><path d="M1384 488h8v8h-8z" fill="#ff0072"/><path d="M1384 496h8v8h-8z" fill="#ff0075"/><path d="M1376 504h8v8h-8z" fill="#ff007f"/><path d="M1376 512h8v8h-8z" fill="#ff0081"/><path d="M1384 504h8v8h-8z" fill="#ff0077"/><path d="M1360 520h8v8h-8z" fill="#ff0094"/><path d="M1392 488h8v8h-8z" fill="#ff006b"/><path d="M1392 496h8v8h-8z" fill="#ff006e"/><path d="M1400 488h8v8h-8z" fill="#ff0065"/><path d="M1400 496h8v8h-8z" fill="#ff0068"/><path d="M1392 504h8v8h-8z" fill="#ff0070"/><path d="M1400 504h8v8h-8z" fill="#ff006a"/><path d="M1408 488h8v8h-8z" fill="#ff005f"/><path d="M1408 496h8v8h-8z" fill="#ff0062"/><path d="M1416 488h8v8h-8z" fill="#ff005a"/><path d="M1416 496h8v8h-8z" fill="#ff005c"/><path d="M1424 488h16v16h-16z" fill="#ff0053"/><path d="M1440 488h16v16h-16z" fill="#ff004a"/><path d="M1136 552h16v16h-16z" fill="#0000ff"/><path d="M1152 552h16v16h-16z" fill="#0300ff"/><path d="M1152 568h8v8h-8z" fill="#0100ff"/><path d="M1160 568h8v8h-8z" fill="#0b00ff"/><path d="M1160 576h8v8h-8z" fill="#0e00ff"/><path d="M1168 552h8v8h-8z" fill="#0f00ff"/><path d="M1168 560h8v8h-8z" fill="#1300ff"/><path d="M1176 552h8v8h-8z" fill="#1b00ff"/><path d="M1176 560h8v8h-8z" fill="#1e00ff"/><path d="M1168 568h8v8h-8z" fill="#1600ff"/><path d="M1168 576h8v8h-8z" fill="#1900ff"/><path d="M1176 568h8v8h-8z" fill="#2200ff"/><path d="M1176 576h8v8h-8z" fill="#2500ff"/><path d="M1184 552h8v8h-8z" fill="#2700ff"/><path d="M1184 560h8v8h-8z" fill="#2a00ff"/><path d="M1192 552h8v8h-8z" fill="#3400ff"/><path d="M1192 560h8v8h-8z" fill="#3700ff"/><path d="M1184 568h8v8h-8z" fill="#2d00ff"/><path d="M1184 576h8v8h-8z" fill="#3000ff"/><path d="M1192 568h8v8h-8z" fill="#3a00ff"/><path d="M1192 576h8v8h-8z" fill="#3c00ff"/><path d="M1176 584h8v8h-8z" fill="#2600ff"/><path d="M1184 584h8v8h-8z" fill="#3100ff"/><path d="M1200 552h8v8h-8z" fill="#4000ff"/><path d="M1200 560h8v8h-8z" fill="#4300ff"/><path d="M1208 552h8v8h-8z" fill="#4e00ff"/><path d="M1208 560h8v8h-8z" fill="#5000ff"/><path d="M1200 568h8v8h-8z" fill="#4600ff"/><path d="M1200 576h8v8h-8z" fill="#4900ff"/><path d="M1208 568h8v8h-8z" fill="#5300ff"/><path d="M1208 576h8v8h-8z" fill="#5500ff"/><path d="M1216 552h8v8h-8z" fill="#5b00ff"/><path d="M1216 560h8v8h-8z" fill="#5d00ff"/><path d="M1224 552h8v8h-8z" fill="#6900ff"/><path d="M1224 560h8v8h-8z" fill="#6b00ff"/><path d="M1216 568h8v8h-8z" fill="#6000ff"/><path d="M1224 568h8v8h-8z" fill="#6d00ff"/><path d="M1232 552h8v8h-8z" fill="#7700ff"/><path d="M1232 560h8v8h-8z" fill="#7900ff"/><path d="M1240 552h8v8h-8z" fill="#8600ff"/><path d="M1240 560h8v8h-8z" fill="#8700ff"/><path d="M1232 568h8v8h-8z" fill="#7b00ff"/><path d="M1248 552h8v8h-8z" fill="#9500ff"/><path d="M1248 560h8v8h-8z" fill="#9600ff"/><path d="M1256 552h8v8h-8z" fill="#a400ff"/><path d="M1264 552h8v8h-8z" fill="#b400ff"/><path d="M1272 552h8v8h-8z" fill="#c500ff"/></g><linearGradient id="inL" x1="0" x2="0" y1="0" y2="1"><stop offset="0" stop-color="#007799"/><stop offset="1" stop-color="#005399"/></linearGradient><linearGradient id="inR" x1="0" x2="0.3" y1="0" y2="1"><stop offset="0" stop-color="#10c3ff"/><stop offset="1" stop-color="#2c84ff"/></linearGradient></defs>
<text x="19" y="62" font-size="40" fill="#f2f2f2">ColorChecker</text><text x="206" y="122" text-anchor="middle" font-size="30.3" fill="#f2f2f2">Avg dE2000: 4,79</text><text x="206" y="166.5" text-anchor="middle" font-size="30.6" fill="#f2f2f2">Max dE2000: 8,83</text><text x="10" y="686" font-size="31" fill="#f2f2f2">Current Reading</text><text x="10" y="731.5" font-size="26" fill="#f2f2f2">x: 0,2156</text><text x="10" y="775.6" font-size="26" fill="#f2f2f2">y: 0,252</text><text x="10" y="819.7" font-size="26" fill="#f2f2f2">fL: 13,936</text><text x="10" y="863.8" font-size="26" fill="#f2f2f2" letter-spacing="0.5">cd/m²: 47,748</text>
<rect x="16.5" y="211" width="366.0" height="391" fill="#262626"/><line x1="65.3" y1="211" x2="65.3" y2="602" stroke="#9a9a9a" stroke-width="1.5"/><line x1="114.1" y1="211" x2="114.1" y2="602" stroke="#9a9a9a" stroke-width="1.5"/><line x1="162.9" y1="211" x2="162.9" y2="602" stroke="#9a9a9a" stroke-width="1.5"/><line x1="211.7" y1="211" x2="211.7" y2="602" stroke="#9a9a9a" stroke-width="1.5"/><line x1="309.3" y1="211" x2="309.3" y2="602" stroke="#9a9a9a" stroke-width="1.5"/><line x1="358.1" y1="211" x2="358.1" y2="602" stroke="#9a9a9a" stroke-width="1.5"/><path d="M16.5 608 V211 H382.5 V602 H16.5" fill="none" stroke="#a8a8a8" stroke-width="2"/><line x1="16.5" y1="602" x2="16.5" y2="608" stroke="#c8c8c8" stroke-width="1.5"/><text x="16.5" y="624.5" text-anchor="middle" font-size="15" fill="#d4d4d4">0</text><line x1="65.3" y1="602" x2="65.3" y2="608" stroke="#c8c8c8" stroke-width="1.5"/><text x="65.3" y="624.5" text-anchor="middle" font-size="15" fill="#d4d4d4">2</text><line x1="114.1" y1="602" x2="114.1" y2="608" stroke="#c8c8c8" stroke-width="1.5"/><text x="114.1" y="624.5" text-anchor="middle" font-size="15" fill="#d4d4d4">4</text><line x1="162.9" y1="602" x2="162.9" y2="608" stroke="#c8c8c8" stroke-width="1.5"/><text x="162.9" y="624.5" text-anchor="middle" font-size="15" fill="#d4d4d4">6</text><line x1="211.7" y1="602" x2="211.7" y2="608" stroke="#c8c8c8" stroke-width="1.5"/><text x="211.7" y="624.5" text-anchor="middle" font-size="15" fill="#d4d4d4">8</text><line x1="260.5" y1="602" x2="260.5" y2="608" stroke="#c8c8c8" stroke-width="1.5"/><text x="260.5" y="624.5" text-anchor="middle" font-size="15" fill="#d4d4d4">10</text><line x1="309.3" y1="602" x2="309.3" y2="608" stroke="#c8c8c8" stroke-width="1.5"/><text x="309.3" y="624.5" text-anchor="middle" font-size="15" fill="#d4d4d4">12</text><line x1="358.1" y1="602" x2="358.1" y2="608" stroke="#c8c8c8" stroke-width="1.5"/><text x="358.1" y="624.5" text-anchor="middle" font-size="15" fill="#d4d4d4">14</text><rect x="16.5" y="212.0" width="159.6" height="13.5" fill="#000"/><rect x="16.5" y="213.5" width="158.1" height="10.5" fill="url(#bg0)"/><rect x="16.5" y="228.3" width="96.1" height="13.5" fill="#000"/><rect x="16.5" y="229.8" width="94.6" height="10.5" fill="url(#bg1)"/><rect x="16.5" y="244.6" width="82.2" height="13.5" fill="#000"/><rect x="16.5" y="246.1" width="80.7" height="10.5" fill="url(#bg2)"/><rect x="16.5" y="260.9" width="114.0" height="13.5" fill="#000"/><rect x="16.5" y="262.4" width="112.5" height="10.5" fill="url(#bg3)"/><rect x="16.5" y="277.2" width="156.4" height="13.5" fill="#000"/><rect x="16.5" y="278.7" width="154.9" height="10.5" fill="url(#bg4)"/><rect x="16.5" y="293.5" width="107.6" height="13.5" fill="#000"/><rect x="16.5" y="295.0" width="106.1" height="10.5" fill="url(#bg5)"/><rect x="16.5" y="309.8" width="65.2" height="13.5" fill="#000"/><rect x="16.5" y="311.3" width="63.7" height="10.5" fill="url(#bg6)"/><rect x="16.5" y="326.1" width="115.7" height="13.5" fill="#000"/><rect x="16.5" y="327.6" width="114.2" height="10.5" fill="url(#bg7)"/><rect x="16.5" y="342.4" width="122.5" height="13.5" fill="#000"/><rect x="16.5" y="343.9" width="121.0" height="10.5" fill="url(#bg8)"/><rect x="16.5" y="358.7" width="88.6" height="13.5" fill="#000"/><rect x="16.5" y="360.2" width="87.1" height="10.5" fill="url(#bg9)"/><rect x="16.5" y="375.0" width="65.4" height="13.5" fill="#000"/><rect x="16.5" y="376.5" width="63.9" height="10.5" fill="url(#bg10)"/><rect x="16.5" y="391.3" width="84.7" height="13.5" fill="#000"/><rect x="16.5" y="392.8" width="83.2" height="10.5" fill="url(#bg11)"/><rect x="16.5" y="407.6" width="151.5" height="13.5" fill="#000"/><rect x="16.5" y="409.1" width="150.0" height="10.5" fill="url(#bg12)"/><rect x="16.5" y="423.9" width="72.7" height="13.5" fill="#000"/><rect x="16.5" y="425.4" width="71.2" height="10.5" fill="url(#bg13)"/><rect x="16.5" y="440.2" width="151.5" height="13.5" fill="#000"/><rect x="16.5" y="441.7" width="150.0" height="10.5" fill="url(#bg14)"/><rect x="16.5" y="456.5" width="86.6" height="13.5" fill="#000"/><rect x="16.5" y="458.0" width="85.1" height="10.5" fill="url(#bg15)"/><rect x="16.5" y="472.8" width="61.5" height="13.5" fill="#000"/><rect x="16.5" y="474.3" width="60.0" height="10.5" fill="url(#bg16)"/><rect x="16.5" y="489.1" width="120.3" height="13.5" fill="#000"/><rect x="16.5" y="490.6" width="118.8" height="10.5" fill="url(#bg17)"/><rect x="16.5" y="505.4" width="25.9" height="13.5" fill="#000"/><rect x="16.5" y="506.9" width="24.4" height="10.5" fill="url(#bg18)"/><rect x="16.5" y="521.7" width="115.9" height="13.5" fill="#000"/><rect x="16.5" y="523.2" width="114.4" height="10.5" fill="url(#bg19)"/><rect x="16.5" y="538.0" width="134.2" height="13.5" fill="#000"/><rect x="16.5" y="539.5" width="132.7" height="10.5" fill="url(#bg20)"/><rect x="16.5" y="554.3" width="154.2" height="13.5" fill="#000"/><rect x="16.5" y="555.8" width="152.7" height="10.5" fill="url(#bg21)"/><rect x="16.5" y="570.6" width="174.5" height="13.5" fill="#000"/><rect x="16.5" y="572.1" width="173.0" height="10.5" fill="url(#bg22)"/><rect x="16.5" y="586.9" width="216.0" height="13.5" fill="#000"/><rect x="16.5" y="588.4" width="214.5" height="10.5" fill="url(#bg23)"/><line x1="40.9" y1="211" x2="40.9" y2="602" stroke="#129012" stroke-width="1.4"/><line x1="89.7" y1="211" x2="89.7" y2="602" stroke="#f0f020" stroke-width="1.4"/><line x1="260.5" y1="211" x2="260.5" y2="602" stroke="#b02418" stroke-width="2.5"/><text x="199.5" y="206.5" text-anchor="middle" font-size="15" fill="#d0d0d0">DeltaE 2000</text>
<rect x="428.5" y="48" width="150.0" height="366.8" fill="#262626"/><line x1="428.5" y1="139.7" x2="578.5" y2="139.7" stroke="#9a9a9a" stroke-width="1.5"/><line x1="428.5" y1="231.4" x2="578.5" y2="231.4" stroke="#9a9a9a" stroke-width="1.5"/><line x1="428.5" y1="323.1" x2="578.5" y2="323.1" stroke="#9a9a9a" stroke-width="1.5"/><rect x="443" y="230.4" width="121" height="96.451" fill="#000"/><rect x="444" y="231.4" width="119" height="94.451" fill="url(#cyanbar)"/><line x1="428.5" y1="93.8" x2="578.5" y2="93.8" stroke="#e8e62a" stroke-width="2.2"/><line x1="428.5" y1="369.0" x2="578.5" y2="369.0" stroke="#e8e62a" stroke-width="2.2"/><line x1="428.5" y1="185.6" x2="578.5" y2="185.6" stroke="#1a8a1c" stroke-width="2"/><line x1="428.5" y1="277.2" x2="578.5" y2="277.2" stroke="#1a8a1c" stroke-width="2"/><rect x="428.5" y="48" width="150.0" height="366.8" fill="none" stroke="#a4a4a4" stroke-width="1.7"/><line x1="423.5" y1="48.0" x2="428.5" y2="48.0" stroke="#d0d0d0" stroke-width="2"/><text x="423.0" y="53.5" text-anchor="end" font-size="15" fill="#d4d4d4">4</text><line x1="423.5" y1="93.8" x2="428.5" y2="93.8" stroke="#d0d0d0" stroke-width="2"/><text x="423.0" y="99.3" text-anchor="end" font-size="15" fill="#d4d4d4">3</text><line x1="423.5" y1="139.7" x2="428.5" y2="139.7" stroke="#d0d0d0" stroke-width="2"/><text x="423.0" y="145.2" text-anchor="end" font-size="15" fill="#d4d4d4">2</text><line x1="423.5" y1="185.6" x2="428.5" y2="185.6" stroke="#d0d0d0" stroke-width="2"/><text x="423.0" y="191.1" text-anchor="end" font-size="15" fill="#d4d4d4">1</text><line x1="423.5" y1="231.4" x2="428.5" y2="231.4" stroke="#d0d0d0" stroke-width="2"/><text x="423.0" y="236.9" text-anchor="end" font-size="15" fill="#d4d4d4">0</text><line x1="423.5" y1="277.2" x2="428.5" y2="277.2" stroke="#d0d0d0" stroke-width="2"/><text x="423.0" y="282.8" text-anchor="end" font-size="15" fill="#d4d4d4">-1</text><line x1="423.5" y1="323.1" x2="428.5" y2="323.1" stroke="#d0d0d0" stroke-width="2"/><text x="423.0" y="328.6" text-anchor="end" font-size="15" fill="#d4d4d4">-2</text><line x1="423.5" y1="369.0" x2="428.5" y2="369.0" stroke="#d0d0d0" stroke-width="2"/><text x="423.0" y="374.5" text-anchor="end" font-size="15" fill="#d4d4d4">-3</text><line x1="423.5" y1="414.8" x2="428.5" y2="414.8" stroke="#d0d0d0" stroke-width="2"/><text x="423.0" y="420.3" text-anchor="end" font-size="15" fill="#d4d4d4">-4</text><text x="494.2" y="43" text-anchor="middle" font-size="15" fill="#d0d0d0">DeltaL</text><rect x="624.5" y="48" width="151.0" height="366.8" fill="#262626"/><line x1="624.5" y1="139.7" x2="775.5" y2="139.7" stroke="#9a9a9a" stroke-width="1.5"/><line x1="624.5" y1="231.4" x2="775.5" y2="231.4" stroke="#9a9a9a" stroke-width="1.5"/><line x1="624.5" y1="323.1" x2="775.5" y2="323.1" stroke="#9a9a9a" stroke-width="1.5"/><rect x="639" y="230.4" width="121" height="85.90549999999999" fill="#000"/><rect x="640" y="231.4" width="119" height="83.90549999999999" fill="url(#cyanbar)"/><line x1="624.5" y1="93.8" x2="775.5" y2="93.8" stroke="#e8e62a" stroke-width="2.2"/><line x1="624.5" y1="369.0" x2="775.5" y2="369.0" stroke="#e8e62a" stroke-width="2.2"/><line x1="624.5" y1="185.6" x2="775.5" y2="185.6" stroke="#1a8a1c" stroke-width="2"/><line x1="624.5" y1="277.2" x2="775.5" y2="277.2" stroke="#1a8a1c" stroke-width="2"/><rect x="624.5" y="48" width="151.0" height="366.8" fill="none" stroke="#a4a4a4" stroke-width="1.7"/><line x1="619.5" y1="48.0" x2="624.5" y2="48.0" stroke="#d0d0d0" stroke-width="2"/><text x="619.0" y="53.5" text-anchor="end" font-size="15" fill="#d4d4d4">4</text><line x1="619.5" y1="93.8" x2="624.5" y2="93.8" stroke="#d0d0d0" stroke-width="2"/><text x="619.0" y="99.3" text-anchor="end" font-size="15" fill="#d4d4d4">3</text><line x1="619.5" y1="139.7" x2="624.5" y2="139.7" stroke="#d0d0d0" stroke-width="2"/><text x="619.0" y="145.2" text-anchor="end" font-size="15" fill="#d4d4d4">2</text><line x1="619.5" y1="185.6" x2="624.5" y2="185.6" stroke="#d0d0d0" stroke-width="2"/><text x="619.0" y="191.1" text-anchor="end" font-size="15" fill="#d4d4d4">1</text><line x1="619.5" y1="231.4" x2="624.5" y2="231.4" stroke="#d0d0d0" stroke-width="2"/><text x="619.0" y="236.9" text-anchor="end" font-size="15" fill="#d4d4d4">0</text><line x1="619.5" y1="277.2" x2="624.5" y2="277.2" stroke="#d0d0d0" stroke-width="2"/><text x="619.0" y="282.8" text-anchor="end" font-size="15" fill="#d4d4d4">-1</text><line x1="619.5" y1="323.1" x2="624.5" y2="323.1" stroke="#d0d0d0" stroke-width="2"/><text x="619.0" y="328.6" text-anchor="end" font-size="15" fill="#d4d4d4">-2</text><line x1="619.5" y1="369.0" x2="624.5" y2="369.0" stroke="#d0d0d0" stroke-width="2"/><text x="619.0" y="374.5" text-anchor="end" font-size="15" fill="#d4d4d4">-3</text><line x1="619.5" y1="414.8" x2="624.5" y2="414.8" stroke="#d0d0d0" stroke-width="2"/><text x="619.0" y="420.3" text-anchor="end" font-size="15" fill="#d4d4d4">-4</text><text x="690.6" y="43" text-anchor="middle" font-size="15" fill="#d0d0d0">DeltaC</text><rect x="829.5" y="48" width="156.0" height="366.8" fill="#262626"/><line x1="829.5" y1="93.8" x2="985.5" y2="93.8" stroke="#9a9a9a" stroke-width="1.5"/><line x1="829.5" y1="185.6" x2="985.5" y2="185.6" stroke="#9a9a9a" stroke-width="1.5"/><line x1="829.5" y1="231.4" x2="985.5" y2="231.4" stroke="#9a9a9a" stroke-width="1.5"/><line x1="829.5" y1="277.2" x2="985.5" y2="277.2" stroke="#9a9a9a" stroke-width="1.5"/><line x1="829.5" y1="369.0" x2="985.5" y2="369.0" stroke="#9a9a9a" stroke-width="1.5"/><rect x="843.5" y="138.7" width="126.0" height="93.9" fill="#000"/><rect x="844.5" y="139.7" width="124.0" height="91.9" fill="url(#cyanbar)"/><line x1="829.5" y1="139.7" x2="985.5" y2="139.7" stroke="#d42020" stroke-width="2.5"/><line x1="829.5" y1="323.1" x2="985.5" y2="323.1" stroke="#d42020" stroke-width="2.5"/><line x1="829.5" y1="203.9" x2="985.5" y2="203.9" stroke="#e8e62a" stroke-width="2"/><line x1="829.5" y1="258.9" x2="985.5" y2="258.9" stroke="#e8e62a" stroke-width="2"/><line x1="829.5" y1="222.2" x2="985.5" y2="222.2" stroke="#1e8020" stroke-width="2"/><line x1="829.5" y1="240.6" x2="985.5" y2="240.6" stroke="#1e8020" stroke-width="2"/><rect x="829.5" y="48" width="156.0" height="366.8" fill="none" stroke="#a4a4a4" stroke-width="1.7"/><line x1="824.5" y1="48.0" x2="829.5" y2="48.0" stroke="#d0d0d0" stroke-width="2"/><text x="824.0" y="53.5" text-anchor="end" font-size="15" fill="#d4d4d4">20</text><line x1="824.5" y1="93.8" x2="829.5" y2="93.8" stroke="#d0d0d0" stroke-width="2"/><text x="824.0" y="99.3" text-anchor="end" font-size="15" fill="#d4d4d4">15</text><line x1="824.5" y1="139.7" x2="829.5" y2="139.7" stroke="#d0d0d0" stroke-width="2"/><text x="824.0" y="145.2" text-anchor="end" font-size="15" fill="#d4d4d4">10</text><line x1="824.5" y1="185.6" x2="829.5" y2="185.6" stroke="#d0d0d0" stroke-width="2"/><text x="824.0" y="191.1" text-anchor="end" font-size="15" fill="#d4d4d4">5</text><line x1="824.5" y1="231.4" x2="829.5" y2="231.4" stroke="#d0d0d0" stroke-width="2"/><text x="824.0" y="236.9" text-anchor="end" font-size="15" fill="#d4d4d4">0</text><line x1="824.5" y1="277.2" x2="829.5" y2="277.2" stroke="#d0d0d0" stroke-width="2"/><text x="824.0" y="282.8" text-anchor="end" font-size="15" fill="#d4d4d4">-5</text><line x1="824.5" y1="323.1" x2="829.5" y2="323.1" stroke="#d0d0d0" stroke-width="2"/><text x="824.0" y="328.6" text-anchor="end" font-size="15" fill="#d4d4d4">-10</text><line x1="824.5" y1="369.0" x2="829.5" y2="369.0" stroke="#d0d0d0" stroke-width="2"/><text x="824.0" y="374.5" text-anchor="end" font-size="15" fill="#d4d4d4">-15</text><line x1="824.5" y1="414.8" x2="829.5" y2="414.8" stroke="#d0d0d0" stroke-width="2"/><text x="824.0" y="420.3" text-anchor="end" font-size="15" fill="#d4d4d4">-20</text><text x="894" y="43" text-anchor="middle" font-size="15" fill="#d0d0d0">DeltaH</text>
<rect x="410" y="421" width="589" height="197" fill="#000"/><svg x="410" y="421" width="589" height="197" overflow="hidden"><rect x="18.75" y="8.75" width="58.5" height="64.5" fill="#ebebfb" stroke="#fff" stroke-width="1.5"/><rect x="18.75" y="91.75" width="58.5" height="64.5" fill="#efefef" stroke="#fff" stroke-width="1.5"/><text x="48" y="173" text-anchor="middle" font-size="13" fill="#f0f0f0">White</text><rect x="88.75" y="8.75" width="58.5" height="64.5" fill="#e1e1ef" stroke="#fff" stroke-width="1.5"/><rect x="88.75" y="91.75" width="58.5" height="64.5" fill="#e4e4e4" stroke="#fff" stroke-width="1.5"/><text x="118" y="173" text-anchor="middle" font-size="13" fill="#f0f0f0">Gray 80</text><rect x="158.75" y="8.75" width="58.5" height="64.5" fill="#cfd0db" stroke="#fff" stroke-width="1.5"/><rect x="158.75" y="91.75" width="58.5" height="64.5" fill="#d0d0d0" stroke="#fff" stroke-width="1.5"/><text x="188" y="173" text-anchor="middle" font-size="13" fill="#f0f0f0">Gray 65</text><rect x="228.75" y="8.75" width="58.5" height="64.5" fill="#b9bac5" stroke="#fff" stroke-width="1.5"/><rect x="228.75" y="91.75" width="58.5" height="64.5" fill="#bbbbbb" stroke="#fff" stroke-width="1.5"/><text x="258" y="173" text-anchor="middle" font-size="13" fill="#f0f0f0">Gray 50</text><rect x="298.75" y="8.75" width="58.5" height="64.5" fill="#9a9ca6" stroke="#fff" stroke-width="1.5"/><rect x="298.75" y="91.75" width="58.5" height="64.5" fill="#a2a2a2" stroke="#fff" stroke-width="1.5"/><text x="328" y="173" text-anchor="middle" font-size="13" fill="#f0f0f0">Gray 35</text><rect x="368.75" y="8.75" width="58.5" height="64.5" fill="#06070b" stroke="#fff" stroke-width="1.5"/><rect x="368.75" y="91.75" width="58.5" height="64.5" fill="#000000" stroke="#fff" stroke-width="1.5"/><text x="398" y="173" text-anchor="middle" font-size="13" fill="#f0f0f0">Black</text><rect x="438.75" y="8.75" width="58.5" height="64.5" fill="#5f473b" stroke="#fff" stroke-width="1.5"/><rect x="438.75" y="91.75" width="58.5" height="64.5" fill="#735445" stroke="#fff" stroke-width="1.5"/><text x="468" y="173" text-anchor="middle" font-size="13" fill="#f0f0f0">Dark Skin</text><rect x="508.75" y="8.75" width="58.5" height="64.5" fill="#b89386" stroke="#fff" stroke-width="1.5"/><rect x="508.75" y="91.75" width="58.5" height="64.5" fill="#c29783" stroke="#fff" stroke-width="1.5"/><text x="538" y="173" text-anchor="middle" font-size="13" fill="#f0f0f0">Light Skin</text><rect x="578.75" y="8.75" width="58.5" height="64.5" fill="#5a77a3" stroke="#fff" stroke-width="1.5"/><rect x="578.75" y="91.75" width="58.5" height="64.5" fill="#5f7ba5" stroke="#fff" stroke-width="1.5"/><text x="608" y="173" text-anchor="middle" font-size="13" fill="#f0f0f0">Blue Sky</text><text transform="translate(14,41) rotate(-90)" text-anchor="middle" font-size="13" fill="#f0f0f0">Actual</text><text transform="translate(14,124) rotate(-90)" text-anchor="middle" font-size="13" fill="#f0f0f0">Target</text></svg><rect x="410" y="618" width="589" height="18" fill="#6a6a6a"/><rect x="411" y="620" width="14" height="14" rx="2" fill="#7c7c7c"/><path d="M414 627 L421 622 V632 Z" fill="#3c3c3c"/><rect x="429" y="621" width="189" height="12" rx="6" fill="#4a4a4a"/><rect x="983" y="620" width="14" height="14" rx="2" fill="#7c7c7c"/><path d="M994 627 L987 622 V632 Z" fill="#3c3c3c"/>
<rect x="1012" y="21" width="699" height="601" fill="#1c1c1c"/><rect x="1020" y="28.5" width="687" height="585" fill="#333"/><rect x="1049" y="53.5" width="654.5" height="528.5" fill="#262626"/><g clip-path="url(#hs)"><use href="#grid" filter="url(#fd)"/></g><g clip-path="url(#tri)"><use href="#grid" filter="url(#fb)"/></g><rect x="1049" y="53.5" width="654.5" height="528.5" fill="none" stroke="#a4a4a4" stroke-width="1.7"/><line x1="1044" y1="582.0" x2="1049" y2="582.0" stroke="#d0d0d0" stroke-width="1.5"/><text x="1043.5" y="587.0" text-anchor="end" font-size="15" fill="#d4d4d4">0</text><line x1="1044" y1="519.3" x2="1049" y2="519.3" stroke="#d0d0d0" stroke-width="1.5"/><text x="1043.5" y="524.3" text-anchor="end" font-size="15" fill="#d4d4d4">0,1</text><line x1="1044" y1="456.6" x2="1049" y2="456.6" stroke="#d0d0d0" stroke-width="1.5"/><text x="1043.5" y="461.6" text-anchor="end" font-size="15" fill="#d4d4d4">0,2</text><line x1="1044" y1="393.9" x2="1049" y2="393.9" stroke="#d0d0d0" stroke-width="1.5"/><text x="1043.5" y="398.9" text-anchor="end" font-size="15" fill="#d4d4d4">0,3</text><line x1="1044" y1="331.2" x2="1049" y2="331.2" stroke="#d0d0d0" stroke-width="1.5"/><text x="1043.5" y="336.2" text-anchor="end" font-size="15" fill="#d4d4d4">0,4</text><line x1="1044" y1="268.5" x2="1049" y2="268.5" stroke="#d0d0d0" stroke-width="1.5"/><text x="1043.5" y="273.5" text-anchor="end" font-size="15" fill="#d4d4d4">0,5</text><line x1="1044" y1="205.8" x2="1049" y2="205.8" stroke="#d0d0d0" stroke-width="1.5"/><text x="1043.5" y="210.8" text-anchor="end" font-size="15" fill="#d4d4d4">0,6</text><line x1="1044" y1="143.1" x2="1049" y2="143.1" stroke="#d0d0d0" stroke-width="1.5"/><text x="1043.5" y="148.1" text-anchor="end" font-size="15" fill="#d4d4d4">0,7</text><line x1="1044" y1="80.4" x2="1049" y2="80.4" stroke="#d0d0d0" stroke-width="1.5"/><text x="1043.5" y="85.4" text-anchor="end" font-size="15" fill="#d4d4d4">0,8</text><line x1="1049.0" y1="582" x2="1049.0" y2="588" stroke="#d0d0d0" stroke-width="1.5"/><text x="1049.0" y="607" text-anchor="middle" font-size="15" fill="#d4d4d4">0</text><line x1="1126.8" y1="582" x2="1126.8" y2="588" stroke="#d0d0d0" stroke-width="1.5"/><text x="1126.8" y="607" text-anchor="middle" font-size="15" fill="#d4d4d4">0,1</text><line x1="1204.6" y1="582" x2="1204.6" y2="588" stroke="#d0d0d0" stroke-width="1.5"/><text x="1204.6" y="607" text-anchor="middle" font-size="15" fill="#d4d4d4">0,2</text><line x1="1282.4" y1="582" x2="1282.4" y2="588" stroke="#d0d0d0" stroke-width="1.5"/><text x="1282.4" y="607" text-anchor="middle" font-size="15" fill="#d4d4d4">0,3</text><line x1="1360.2" y1="582" x2="1360.2" y2="588" stroke="#d0d0d0" stroke-width="1.5"/><text x="1360.2" y="607" text-anchor="middle" font-size="15" fill="#d4d4d4">0,4</text><line x1="1438.0" y1="582" x2="1438.0" y2="588" stroke="#d0d0d0" stroke-width="1.5"/><text x="1438.0" y="607" text-anchor="middle" font-size="15" fill="#d4d4d4">0,5</text><line x1="1515.8" y1="582" x2="1515.8" y2="588" stroke="#d0d0d0" stroke-width="1.5"/><text x="1515.8" y="607" text-anchor="middle" font-size="15" fill="#d4d4d4">0,6</text><line x1="1593.6" y1="582" x2="1593.6" y2="588" stroke="#d0d0d0" stroke-width="1.5"/><text x="1593.6" y="607" text-anchor="middle" font-size="15" fill="#d4d4d4">0,7</text><line x1="1671.4" y1="582" x2="1671.4" y2="588" stroke="#d0d0d0" stroke-width="1.5"/><text x="1671.4" y="607" text-anchor="middle" font-size="15" fill="#d4d4d4">0,8</text><text x="1363" y="49" text-anchor="middle" font-size="15" fill="#d0d0d0">CIE 1931 xy</text><rect x="1279.9" y="265.9" width="14" height="14" fill="none" stroke="#fff" stroke-opacity="0.8" stroke-width="2"/><rect x="1334.8" y="264.9" width="14" height="14" fill="none" stroke="#fff" stroke-opacity="0.8" stroke-width="2"/><rect x="1307.0" y="305.7" width="14" height="14" fill="none" stroke="#fff" stroke-opacity="0.8" stroke-width="2"/><rect x="1246.4" y="347.7" width="14" height="14" fill="none" stroke="#fff" stroke-opacity="0.8" stroke-width="2"/><rect x="1337.5" y="350.8" width="14" height="14" fill="none" stroke="#fff" stroke-opacity="0.8" stroke-width="2"/><rect x="1353.0" y="345.6" width="14" height="14" fill="none" stroke="#fff" stroke-opacity="0.8" stroke-width="2"/><rect x="1389.4" y="276.7" width="14" height="14" fill="none" stroke="#fff" stroke-opacity="0.8" stroke-width="2"/><rect x="1410.6" y="298.9" width="14" height="14" fill="none" stroke="#fff" stroke-opacity="0.8" stroke-width="2"/><rect x="1441.5" y="319.8" width="14" height="14" fill="none" stroke="#fff" stroke-opacity="0.8" stroke-width="2"/><rect x="1401.9" y="377.2" width="14" height="14" fill="none" stroke="#fff" stroke-opacity="0.8" stroke-width="2"/><rect x="1459.4" y="374.0" width="14" height="14" fill="none" stroke="#fff" stroke-opacity="0.8" stroke-width="2"/><rect x="1204.4" y="405.4" width="14" height="14" fill="none" stroke="#fff" stroke-opacity="0.8" stroke-width="2"/><rect x="1236.2" y="406.7" width="14" height="14" fill="none" stroke="#fff" stroke-opacity="0.8" stroke-width="2"/><rect x="1251.1" y="415.8" width="14" height="14" fill="none" stroke="#fff" stroke-opacity="0.8" stroke-width="2"/><rect x="1267.4" y="434.8" width="14" height="14" fill="none" stroke="#fff" stroke-opacity="0.8" stroke-width="2"/><rect x="1333.2" y="418.9" width="14" height="14" fill="none" stroke="#fff" stroke-opacity="0.8" stroke-width="2"/><rect x="1211.4" y="454.5" width="14" height="14" fill="none" stroke="#fff" stroke-opacity="0.8" stroke-width="2"/><rect x="1191.9" y="485.1" width="14" height="14" fill="none" stroke="#fff" stroke-opacity="0.8" stroke-width="2"/><rect x="1286" y="367" width="14" height="14.5" fill="none" stroke="#000" stroke-width="2.2"/><circle cx="1283.0" cy="387.6" r="4.8" fill="#f4f4f8" stroke="#101018" stroke-width="1"/><circle cx="1284.6" cy="386.3" r="4.8" fill="#e8e8ee" stroke="#101018" stroke-width="1"/><circle cx="1287.2" cy="383.0" r="4.8" fill="#a6a6aa" stroke="#101018" stroke-width="1"/><circle cx="1262.9" cy="410.6" r="4.8" fill="#000" stroke="#000" stroke-width="1"/><circle cx="1303.9" cy="281.9" r="4.6" fill="#5a8a5a" stroke="#0c0c14" stroke-width="1.2"/><circle cx="1352.1" cy="281.8" r="4.6" fill="#9aae6a" stroke="#0c0c14" stroke-width="1.2"/><circle cx="1320.8" cy="315.8" r="4.6" fill="#5c6a4c" stroke="#0c0c14" stroke-width="1.2"/><circle cx="1257.8" cy="367.8" r="4.6" fill="#80a89a" stroke="#0c0c14" stroke-width="1.2"/><circle cx="1337.9" cy="362.0" r="4.6" fill="#b09890" stroke="#0c0c14" stroke-width="1.2"/><circle cx="1363.0" cy="353.4" r="4.6" fill="#705c56" stroke="#0c0c14" stroke-width="1.2"/><circle cx="1393.9" cy="292.4" r="4.6" fill="#d8c060" stroke="#0c0c14" stroke-width="1.2"/><circle cx="1411.0" cy="309.0" r="4.6" fill="#d8a860" stroke="#0c0c14" stroke-width="1.2"/><circle cx="1437.1" cy="326.5" r="4.6" fill="#c88c58" stroke="#0c0c14" stroke-width="1.2"/><circle cx="1396.4" cy="379.8" r="4.6" fill="#b46878" stroke="#0c0c14" stroke-width="1.2"/><circle cx="1454.0" cy="370.8" r="4.6" fill="#9c4a58" stroke="#0c0c14" stroke-width="1.2"/><circle cx="1216.8" cy="422.8" r="4.6" fill="#2a8890" stroke="#0c0c14" stroke-width="1.2"/><circle cx="1236.8" cy="424.6" r="4.6" fill="#7c8898" stroke="#0c0c14" stroke-width="1.2"/><circle cx="1248.0" cy="428.9" r="4.6" fill="#8c88a8" stroke="#0c0c14" stroke-width="1.2"/><circle cx="1255.8" cy="447.6" r="4.6" fill="#6a5070" stroke="#0c0c14" stroke-width="1.2"/><circle cx="1319.6" cy="424.3" r="4.6" fill="#b06890" stroke="#0c0c14" stroke-width="1.2"/><circle cx="1206.9" cy="465.7" r="4.6" fill="#5c6490" stroke="#0c0c14" stroke-width="1.2"/><circle cx="1189.0" cy="492.0" r="4.6" fill="#4a507c" stroke="#0c0c14" stroke-width="1.2"/><rect x="1506" y="61" width="191" height="157" fill="url(#inL)"/><polygon points="1627.5,61 1697,61 1697,218 1574.5,218" fill="url(#inR)"/><rect x="1506.5" y="61.5" width="190.5" height="156.5" fill="none" stroke="#a0a0a0" stroke-width="1.8"/><rect x="1593.3" y="131.4" width="15" height="15" fill="none" stroke="#fff" stroke-width="2"/><circle cx="1628.8" cy="193.8" r="4.6" fill="#2a8890" stroke="#111" stroke-width="1.2"/><rect x="1419.5" y="540" width="281" height="29" fill="#333"/><text x="1559.5" y="562.5" text-anchor="middle" font-size="20.5" fill="#f2f2f2">RGB Triplet: 0, 133, 163</text>
</svg>
<div style="position:absolute;left:327px;top:638px;width:1253px;height:30px;background:linear-gradient(#2b2b2b 0,#2b2b2b 15px,#161616 15px,#141414 100%)"></div><div style="position:absolute;left:327px;top:638px;width:9px;height:30px;background:#000"></div><div style="position:absolute;left:336px;top:668.00px;width:1244px;height:28.44px;background:#434343"></div><div style="position:absolute;left:327px;top:668.00px;width:9px;height:28.44px;background:#202020"></div><div style="position:absolute;left:336px;top:696.14px;width:1244px;height:28.44px;background:#808080"></div><div style="position:absolute;left:327px;top:696.14px;width:9px;height:28.44px;background:#202020"></div><div style="position:absolute;left:336px;top:724.28px;width:1244px;height:28.44px;background:#434343"></div><div style="position:absolute;left:327px;top:724.28px;width:9px;height:28.44px;background:#202020"></div><div style="position:absolute;left:336px;top:752.42px;width:1244px;height:28.44px;background:#808080"></div><div style="position:absolute;left:327px;top:752.42px;width:9px;height:28.44px;background:#202020"></div><div style="position:absolute;left:336px;top:780.56px;width:1244px;height:28.44px;background:#434343"></div><div style="position:absolute;left:327px;top:780.56px;width:9px;height:28.44px;background:#202020"></div><div style="position:absolute;left:336px;top:808.70px;width:1244px;height:28.44px;background:#808080"></div><div style="position:absolute;left:327px;top:808.70px;width:9px;height:28.44px;background:#202020"></div><div style="position:absolute;left:336px;top:836.84px;width:1244px;height:28.44px;background:#434343"></div><div style="position:absolute;left:327px;top:836.84px;width:9px;height:28.44px;background:#202020"></div><span class="th" style="left:419.3px">White</span><span class="th" style="left:459.8px">Gray 80</span><span class="th" style="left:502.5px">Gray 65</span><span class="th" style="left:545.3px">Gray 50</span><span class="th" style="left:587.6px">Gray 35</span><span class="th" style="left:630.4px">Black</span><span class="th" style="left:661.5px">Dark Skin</span><span class="th" style="left:712.2px">Light Skin</span><span class="th" style="left:763.6px">Blue Sky</span><span class="th" style="left:809.4px">Foliage</span><span class="th" style="left:849.1px">Blue Flower</span><span class="th" style="left:911.3px">Bluish Green</span><span class="th" style="left:977.7px">Orange</span><span class="th" style="left:1019.0px">Purplish Blue</span><span class="th" style="left:1087.6px">Moderate Red</span><span class="th" style="left:1161.5px">Purple</span><span class="th" style="left:1198.5px">Yellow Green</span><span class="th" style="left:1267.2px">Orange Yellow</span><span class="th" style="left:1341.5px">Blue</span><span class="th" style="left:1376.3px">Green</span><span class="th" style="left:1417.0px">Red</span><span class="th" style="left:1452.4px">Yellow</span><span class="th" style="left:1493.5px">Magenta</span><span class="th" style="left:1541.6px">Cyan</span><span class="td" style="left:339.3px;top:672.00px">x: CIE31</span><span class="td" style="left:419.3px;top:672.00px">0,30</span><span class="td" style="left:459.8px;top:672.00px">0,30</span><span class="td" style="left:502.5px;top:672.00px">0,30</span><span class="td" style="left:545.3px;top:672.00px">0,31</span><span class="td" style="left:587.6px;top:672.00px">0,31</span><span class="td" style="left:630.4px;top:672.00px">0,28</span><span class="td" style="left:661.5px;top:672.00px">0,40</span><span class="td" style="left:712.2px;top:672.00px">0,37</span><span class="td" style="left:763.6px;top:672.00px">0,24</span><span class="td" style="left:809.4px;top:672.00px">0,35</span><span class="td" style="left:849.1px;top:672.00px">0,25</span><span class="td" style="left:911.3px;top:672.00px">0,27</span><span class="td" style="left:977.7px;top:672.00px">0,50</span><span class="td" style="left:1019.0px;top:672.00px">0,20</span><span class="td" style="left:1087.6px;top:672.00px">0,45</span><span class="td" style="left:1161.5px;top:672.00px">0,27</span><span class="td" style="left:1198.5px;top:672.00px">0,39</span><span class="td" style="left:1267.2px;top:672.00px">0,46</span><span class="td" style="left:1341.5px;top:672.00px">0,18</span><span class="td" style="left:1376.3px;top:672.00px">0,33</span><span class="td" style="left:1417.0px;top:672.00px">0,52</span><span class="td" style="left:1452.4px;top:672.00px">0,44</span><span class="td" style="left:1493.5px;top:672.00px">0,35</span><span class="td" style="left:1541.6px;top:672.00px">0,22</span><span class="td" style="left:339.3px;top:700.14px">y: CIE31</span><span class="td" style="left:419.3px;top:700.14px">0,31</span><span class="td" style="left:459.8px;top:700.14px">0,31</span><span class="td" style="left:502.5px;top:700.14px">0,31</span><span class="td" style="left:545.3px;top:700.14px">0,32</span><span class="td" style="left:587.6px;top:700.14px">0,32</span><span class="td" style="left:630.4px;top:700.14px">0,27</span><span class="td" style="left:661.5px;top:700.14px">0,36</span><span class="td" style="left:712.2px;top:700.14px">0,35</span><span class="td" style="left:763.6px;top:700.14px">0,25</span><span class="td" style="left:809.4px;top:700.14px">0,42</span><span class="td" style="left:849.1px;top:700.14px">0,24</span><span class="td" style="left:911.3px;top:700.14px">0,34</span><span class="td" style="left:977.7px;top:700.14px">0,41</span><span class="td" style="left:1019.0px;top:700.14px">0,18</span><span class="td" style="left:1087.6px;top:700.14px">0,32</span><span class="td" style="left:1161.5px;top:700.14px">0,21</span><span class="td" style="left:1198.5px;top:700.14px">0,48</span><span class="td" style="left:1267.2px;top:700.14px">0,43</span><span class="td" style="left:1341.5px;top:700.14px">0,14</span><span class="td" style="left:1376.3px;top:700.14px">0,48</span><span class="td" style="left:1417.0px;top:700.14px">0,34</span><span class="td" style="left:1452.4px;top:700.14px">0,46</span><span class="td" style="left:1493.5px;top:700.14px">0,25</span><span class="td" style="left:1541.6px;top:700.14px">0,25</span><span class="td" style="left:339.3px;top:728.28px">Y</span><span class="td" style="left:419.3px;top:728.28px">269,73</span><span class="td" style="left:459.8px;top:728.28px">214,37</span><span class="td" style="left:502.5px;top:728.28px">171,06</span><span class="td" style="left:545.3px;top:728.28px">131,64</span><span class="td" style="left:587.6px;top:728.28px">87,91</span><span class="td" style="left:630.4px;top:728.28px">0,27</span><span class="td" style="left:661.5px;top:728.28px">19,28</span><span class="td" style="left:712.2px;top:728.28px">88,31</span><span class="td" style="left:763.6px;top:728.28px">45,52</span><span class="td" style="left:809.4px;top:728.28px">25,29</span><span class="td" style="left:849.1px;top:728.28px">60,37</span><span class="td" style="left:911.3px;top:728.28px">106,67</span><span class="td" style="left:977.7px;top:728.28px">67,51</span><span class="td" style="left:1019.0px;top:728.28px">29,48</span><span class="td" style="left:1087.6px;top:728.28px">45,35</span><span class="td" style="left:1161.5px;top:728.28px">13,61</span><span class="td" style="left:1198.5px;top:728.28px">102,98</span><span class="td" style="left:1267.2px;top:728.28px">105,02</span><span class="td" style="left:1341.5px;top:728.28px">16,27</span><span class="td" style="left:1376.3px;top:728.28px">50,21</span><span class="td" style="left:1417.0px;top:728.28px">27,87</span><span class="td" style="left:1452.4px;top:728.28px">146,77</span><span class="td" style="left:1493.5px;top:728.28px">49,21</span><span class="td" style="left:1541.6px;top:728.28px">47,75</span><span class="td" style="left:339.3px;top:756.42px">Target x:CIE31</span><span class="td" style="left:419.3px;top:756.42px">0,31</span><span class="td" style="left:459.8px;top:756.42px">0,31</span><span class="td" style="left:502.5px;top:756.42px">0,31</span><span class="td" style="left:545.3px;top:756.42px">0,31</span><span class="td" style="left:587.6px;top:756.42px">0,31</span><span class="td" style="left:630.4px;top:756.42px">0,31</span><span class="td" style="left:661.5px;top:756.42px">0,40</span><span class="td" style="left:712.2px;top:756.42px">0,38</span><span class="td" style="left:763.6px;top:756.42px">0,25</span><span class="td" style="left:809.4px;top:756.42px">0,34</span><span class="td" style="left:849.1px;top:756.42px">0,27</span><span class="td" style="left:911.3px;top:756.42px">0,26</span><span class="td" style="left:977.7px;top:756.42px">0,51</span><span class="td" style="left:1019.0px;top:756.42px">0,22</span><span class="td" style="left:1087.6px;top:756.42px">0,46</span><span class="td" style="left:1161.5px;top:756.42px">0,29</span><span class="td" style="left:1198.5px;top:756.42px">0,38</span><span class="td" style="left:1267.2px;top:756.42px">0,47</span><span class="td" style="left:1341.5px;top:756.42px">0,19</span><span class="td" style="left:1376.3px;top:756.42px">0,31</span><span class="td" style="left:1417.0px;top:756.42px">0,54</span><span class="td" style="left:1452.4px;top:756.42px">0,45</span><span class="td" style="left:1493.5px;top:756.42px">0,37</span><span class="td" style="left:1541.6px;top:756.42px">0,21</span><span class="td" style="left:339.3px;top:784.56px">Target y:CIE31</span><span class="td" style="left:419.3px;top:784.56px">0,33</span><span class="td" style="left:459.8px;top:784.56px">0,33</span><span class="td" style="left:502.5px;top:784.56px">0,33</span><span class="td" style="left:545.3px;top:784.56px">0,33</span><span class="td" style="left:587.6px;top:784.56px">0,33</span><span class="td" style="left:630.4px;top:784.56px">0,33</span><span class="td" style="left:661.5px;top:784.56px">0,36</span><span class="td" style="left:712.2px;top:784.56px">0,36</span><span class="td" style="left:763.6px;top:784.56px">0,27</span><span class="td" style="left:809.4px;top:784.56px">0,43</span><span class="td" style="left:849.1px;top:784.56px">0,25</span><span class="td" style="left:911.3px;top:784.56px">0,36</span><span class="td" style="left:977.7px;top:784.56px">0,41</span><span class="td" style="left:1019.0px;top:784.56px">0,19</span><span class="td" style="left:1087.6px;top:784.56px">0,31</span><span class="td" style="left:1161.5px;top:784.56px">0,22</span><span class="td" style="left:1198.5px;top:784.56px">0,49</span><span class="td" style="left:1267.2px;top:784.56px">0,44</span><span class="td" style="left:1341.5px;top:784.56px">0,14</span><span class="td" style="left:1376.3px;top:784.56px">0,49</span><span class="td" style="left:1417.0px;top:784.56px">0,32</span><span class="td" style="left:1452.4px;top:784.56px">0,47</span><span class="td" style="left:1493.5px;top:784.56px">0,25</span><span class="td" style="left:1541.6px;top:784.56px">0,27</span><span class="td" style="left:339.3px;top:812.70px">Target Y</span><span class="td" style="left:419.3px;top:812.70px">269,73</span><span class="td" style="left:459.8px;top:812.70px">213,43</span><span class="td" style="left:502.5px;top:812.70px">171,98</span><span class="td" style="left:545.3px;top:812.70px">132,44</span><span class="td" style="left:587.6px;top:812.70px">92,22</span><span class="td" style="left:630.4px;top:812.70px">0,00</span><span class="td" style="left:661.5px;top:812.70px">27,17</span><span class="td" style="left:712.2px;top:812.70px">94,12</span><span class="td" style="left:763.6px;top:812.70px">50,43</span><span class="td" style="left:809.4px;top:812.70px">35,15</span><span class="td" style="left:849.1px;top:812.70px">62,90</span><span class="td" style="left:911.3px;top:812.70px">112,94</span><span class="td" style="left:977.7px;top:812.70px">76,46</span><span class="td" style="left:1019.0px;top:812.70px">31,70</span><span class="td" style="left:1087.6px;top:812.70px">50,37</span><span class="td" style="left:1161.5px;top:812.70px">18,00</span><span class="td" style="left:1198.5px;top:812.70px">115,33</span><span class="td" style="left:1267.2px;top:812.70px">114,67</span><span class="td" style="left:1341.5px;top:812.70px">16,84</span><span class="td" style="left:1376.3px;top:812.70px">61,97</span><span class="td" style="left:1417.0px;top:812.70px">31,46</span><span class="td" style="left:1452.4px;top:812.70px">159,04</span><span class="td" style="left:1493.5px;top:812.70px">50,78</span><span class="td" style="left:1541.6px;top:812.70px">52,38</span><span class="td" style="left:339.3px;top:840.84px">ΔE 2000</span><span class="td" style="left:419.3px;top:840.84px">8,83</span><span class="td" style="left:459.8px;top:840.84px">7,13</span><span class="td" style="left:502.5px;top:840.84px">6,30</span><span class="td" style="left:545.3px;top:840.84px">5,48</span><span class="td" style="left:587.6px;top:840.84px">4,73</span><span class="td" style="left:630.4px;top:840.84px">1,04</span><span class="td" style="left:661.5px;top:840.84px">4,91</span><span class="td" style="left:712.2px;top:840.84px">2,50</span><span class="td" style="left:763.6px;top:840.84px">3,53</span><span class="td" style="left:809.4px;top:840.84px">6,19</span><span class="td" style="left:849.1px;top:840.84px">2,96</span><span class="td" style="left:911.3px;top:840.84px">6,19</span><span class="td" style="left:977.7px;top:840.84px">3,45</span><span class="td" style="left:1019.0px;top:840.84px">2,66</span><span class="td" style="left:1087.6px;top:840.84px">3,61</span><span class="td" style="left:1161.5px;top:840.84px">5,00</span><span class="td" style="left:1198.5px;top:840.84px">4,72</span><span class="td" style="left:1267.2px;top:840.84px">2,65</span><span class="td" style="left:1341.5px;top:840.84px">4,39</span><span class="td" style="left:1376.3px;top:840.84px">6,39</span><span class="td" style="left:1417.0px;top:840.84px">4,65</span><span class="td" style="left:1452.4px;top:840.84px">3,35</span><span class="td" style="left:1493.5px;top:840.84px">3,92</span><span class="td" style="left:1541.6px;top:840.84px">6,52</span>
</body></html>
